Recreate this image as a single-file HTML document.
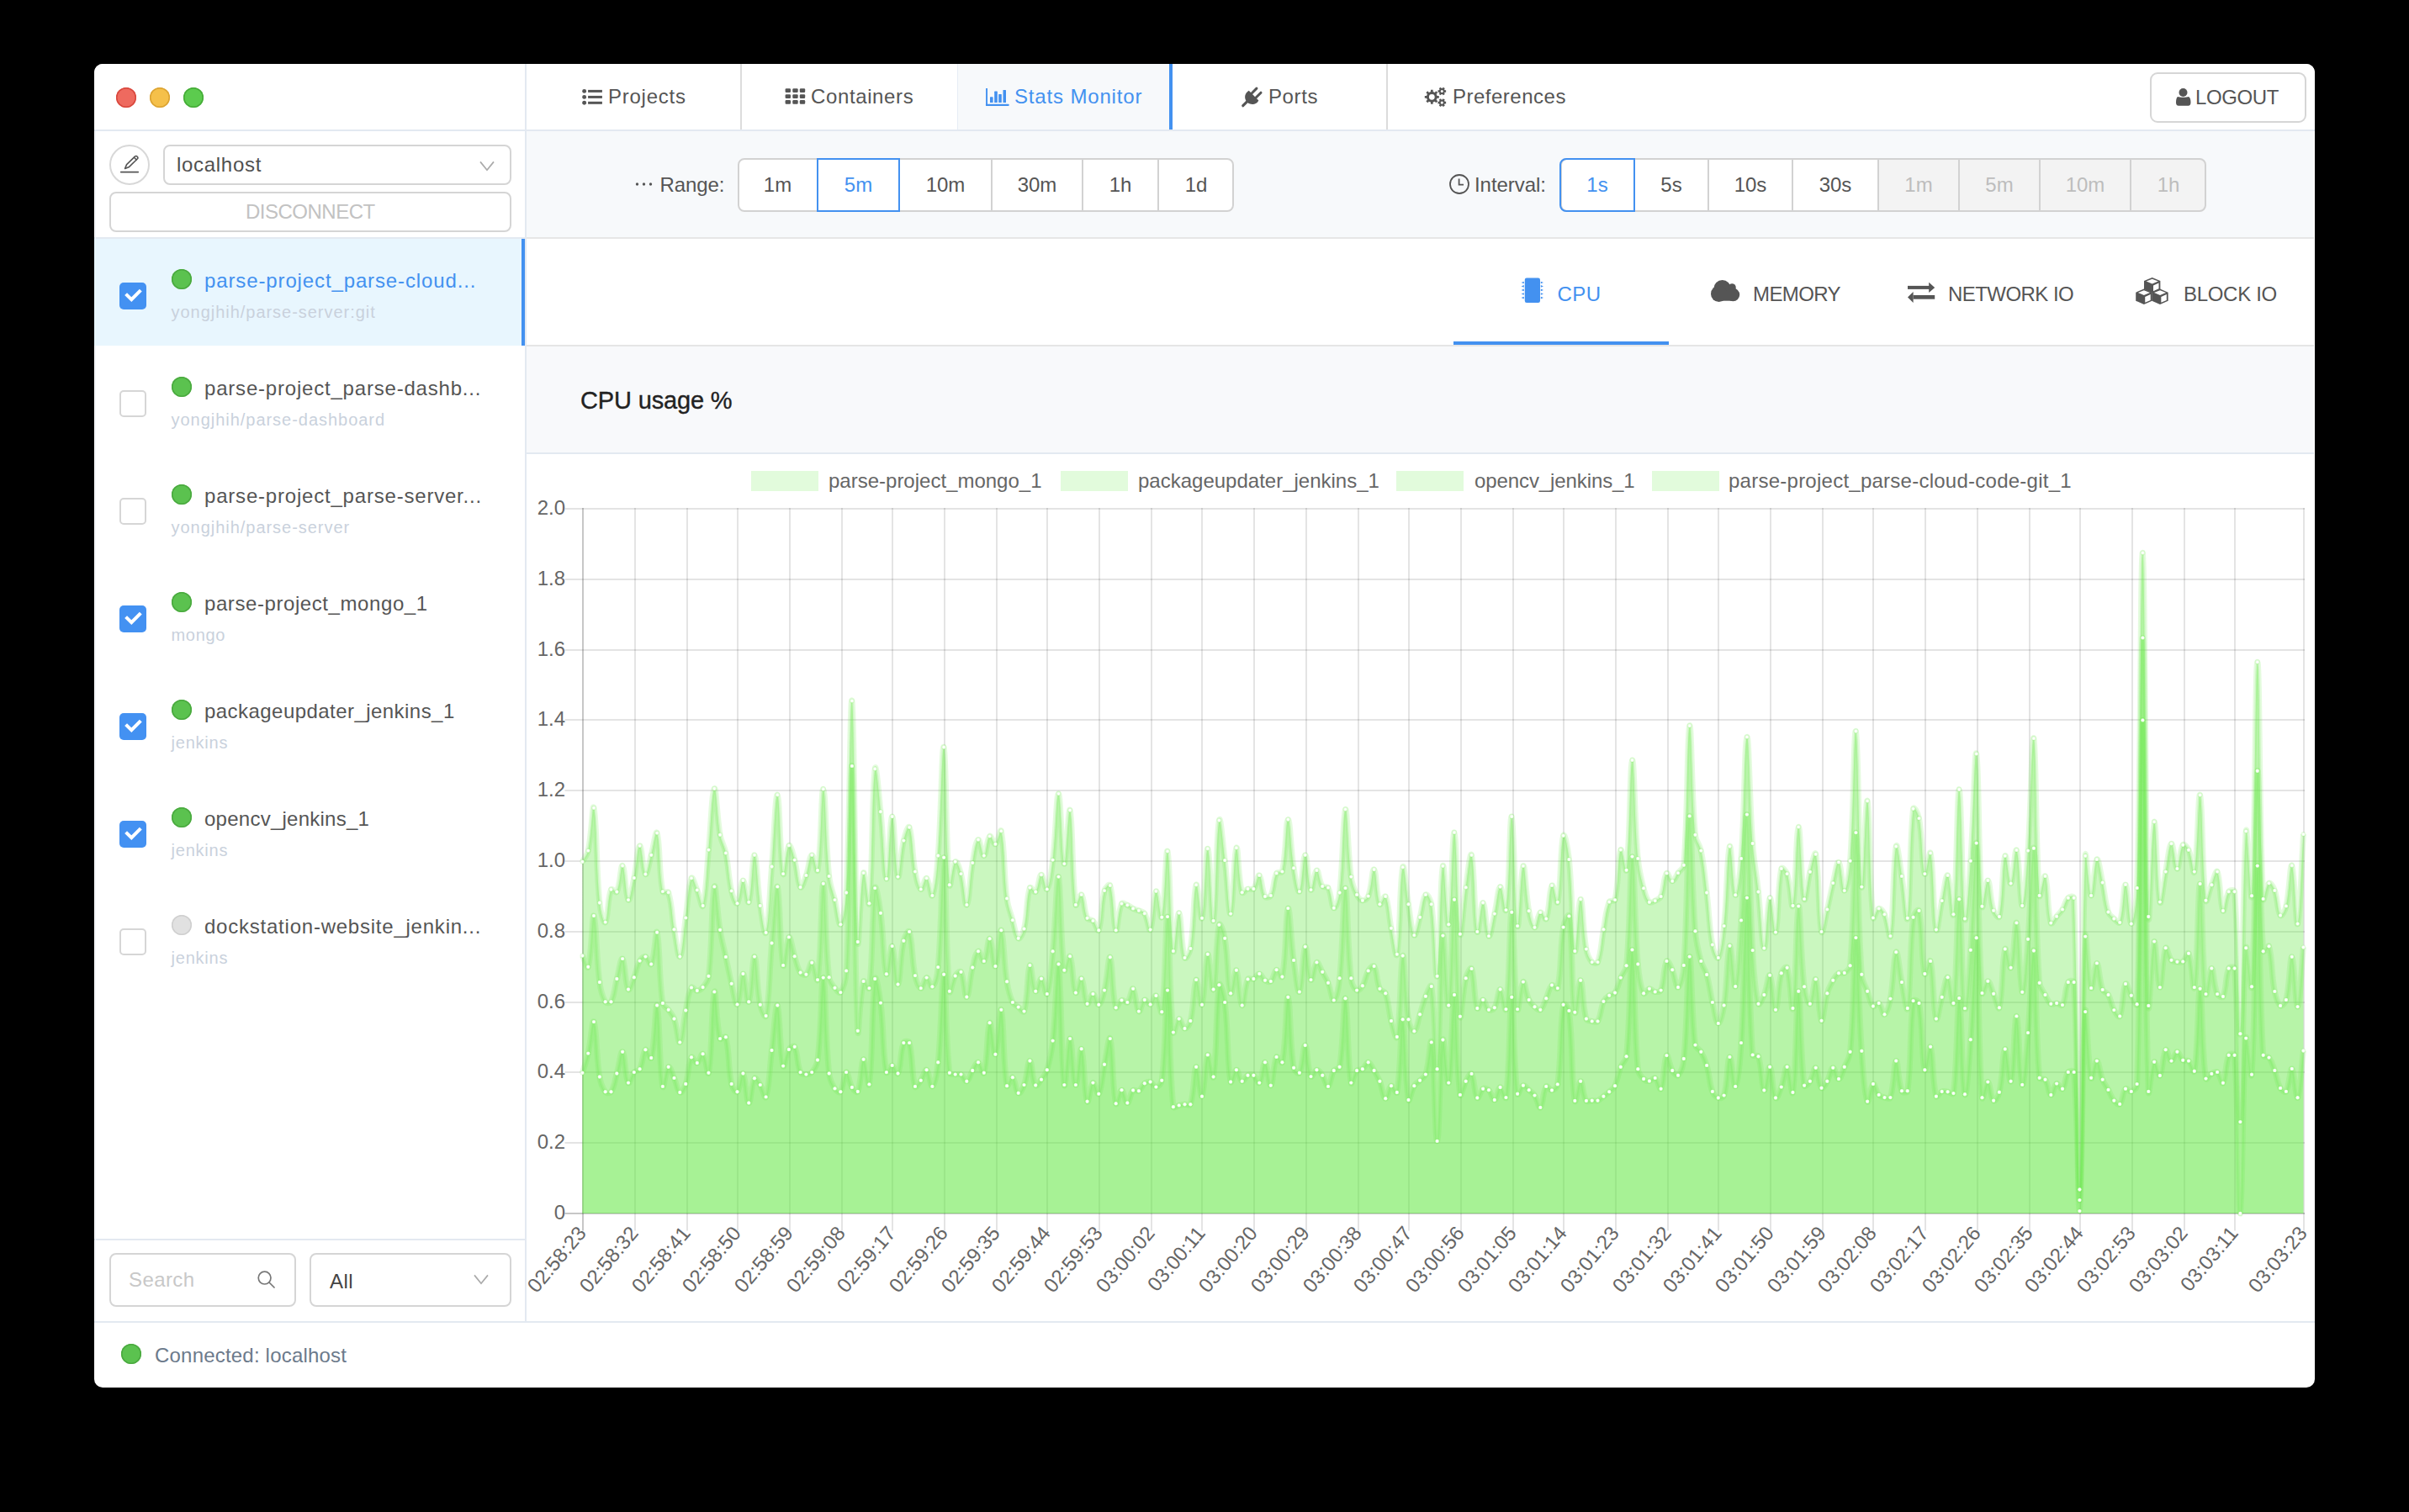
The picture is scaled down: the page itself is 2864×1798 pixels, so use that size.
<!DOCTYPE html><html><head><meta charset="utf-8"><style>
*{margin:0;padding:0;box-sizing:border-box}
html,body{width:2864px;height:1798px;overflow:hidden;background:#000}
body{position:relative;font-family:"Liberation Sans", sans-serif}
.win{position:absolute;left:112px;top:76px;width:2640px;height:1574px;background:#fff;border-radius:10px;overflow:hidden}
.abs{position:absolute;left:-112px;top:-76px;width:2864px;height:1798px}
.t{position:absolute;white-space:pre}
.b{position:absolute}
svg{position:absolute;overflow:visible}
</style></head><body><div class="win"><div class="abs"><div class="b" style="left:112px;top:76px;width:2640px;height:78px;background:#fff"></div><div class="b" style="left:112px;top:154px;width:2640px;height:2px;background:#e3e9f1"></div><div class="b" style="left:624px;top:76px;width:2px;height:1495px;background:#e3e9f1"></div><div class="b" style="left:626px;top:156px;width:2126px;height:126px;background:#f7f9fb"></div><div class="b" style="left:626px;top:282px;width:2126px;height:2px;background:#e6e6e6"></div><div class="b" style="left:112px;top:282px;width:512px;height:2px;background:#e3e9f1"></div><div class="b" style="left:626px;top:410px;width:2126px;height:2px;background:#e5e5e5"></div><div class="b" style="left:626px;top:412px;width:2126px;height:126px;background:#f8f9fb"></div><div class="b" style="left:626px;top:538px;width:2126px;height:2px;background:#e3e9f1"></div><div class="b" style="left:112px;top:1571px;width:2640px;height:2px;background:#e3e9f1"></div><div class="b" style="left:112px;top:1473px;width:512px;height:2px;background:#e3e9f1"></div><div class="b" style="left:113px;top:156px;width:1px;height:1415px;background:#eef2f7"></div><div class="b" style="left:2751px;top:156px;width:1px;height:1415px;background:#fff"></div><div class="b" style="left:138px;top:104px;width:24px;height:24px;border-radius:50%;background:#ee6a5f;box-shadow:inset 0 0 0 1.5px #d8473d"></div><div class="b" style="left:178px;top:104px;width:24px;height:24px;border-radius:50%;background:#f5c04a;box-shadow:inset 0 0 0 1.5px #dba333"></div><div class="b" style="left:218px;top:104px;width:24px;height:24px;border-radius:50%;background:#5ccb4e;box-shadow:inset 0 0 0 1.5px #45ab37"></div><div class="b" style="left:880px;top:76px;width:2px;height:78px;background:#dcdcdc"></div><div class="b" style="left:1138px;top:76px;width:1px;height:78px;background:#e6edf5"></div><div class="b" style="left:1139px;top:76px;width:251px;height:78px;background:#f7f9fb"></div><div class="b" style="left:1390px;top:76px;width:4px;height:78px;background:#4391f0"></div><div class="b" style="left:1648px;top:76px;width:2px;height:78px;background:#dcdcdc"></div><svg style="left:692px;top:105px" width="25" height="20" viewBox="0 0 25 20"><g fill="#555"><circle cx="2.65" cy="3.4" r="2.45"/><circle cx="2.65" cy="10.4" r="2.45"/><circle cx="2.65" cy="17.3" r="2.45"/><rect x="7.1" y="1.9" width="16.8" height="3"/><rect x="7.1" y="8.9" width="16.8" height="3"/><rect x="7.1" y="15.8" width="16.8" height="3"/></g></svg><div class="t" style="left:723.0px;top:103.2px;font-size:24px;line-height:24px;color:#555;letter-spacing:0.75px">Projects</div><svg style="left:933px;top:105px" width="25" height="20" viewBox="0 0 25 20"><g fill="#555"><rect x="0.6" y="0.2" width="6.4" height="4.7" rx="1.2"/><rect x="9.3" y="0.2" width="6.4" height="4.7" rx="1.2"/><rect x="17.8" y="0.2" width="6.4" height="4.7" rx="1.2"/><rect x="0.6" y="7.2" width="6.4" height="4.7" rx="1.2"/><rect x="9.3" y="7.2" width="6.4" height="4.7" rx="1.2"/><rect x="17.8" y="7.2" width="6.4" height="4.7" rx="1.2"/><rect x="0.6" y="14.1" width="6.4" height="4.7" rx="1.2"/><rect x="9.3" y="14.1" width="6.4" height="4.7" rx="1.2"/><rect x="17.8" y="14.1" width="6.4" height="4.7" rx="1.2"/></g></svg><div class="t" style="left:964.0px;top:103.2px;font-size:24px;line-height:24px;color:#555;letter-spacing:0.62px">Containers</div><svg style="left:1172px;top:105px" width="28" height="21" viewBox="0 0 28 21"><g fill="#4391f0"><rect x="0.1" y="0" width="1.9" height="20.9"/><rect x="0.1" y="18.8" width="27.4" height="2.1" rx="0.5"/><rect x="5" y="10.3" width="3.6" height="6.8" rx="0.6"/><rect x="10.2" y="3.6" width="3.6" height="13.5" rx="0.6"/><rect x="15.2" y="7" width="3.6" height="10.1" rx="0.6"/><rect x="20.5" y="1.9" width="3.5" height="15.2" rx="0.6"/></g></svg><div class="t" style="left:1206.0px;top:103.2px;font-size:24px;line-height:24px;color:#4391f0;letter-spacing:0.84px">Stats Monitor</div><svg style="left:1470px;top:98px" width="36" height="34" viewBox="0 0 36 34"><g transform="translate(20.55 15.6) rotate(45)" fill="#555" stroke="#555" stroke-linecap="round"><path d="M-8.2 0 L8.2 0 A8.6 8.6 0 1 1 -8.2 0 Z" stroke="none"/><path d="M-3.6 -0.5 L-3.6 -8.4 M3.6 -0.5 L3.6 -8.4" stroke-width="3" fill="none"/><path d="M-0.5 9 L-0.5 17.6" stroke-width="3.2" fill="none"/></g></svg><div class="t" style="left:1508.0px;top:103.2px;font-size:24px;line-height:24px;color:#555;letter-spacing:0.6px">Ports</div><svg style="left:1693px;top:103px" width="28" height="25" viewBox="0 0 28 25"><path fill="#555" fill-rule="evenodd" d="M10.67 18.55 L10.67 20.79 L7.93 20.79 L7.93 18.55 L5.85 17.69 L4.27 19.27 L2.33 17.33 L3.91 15.75 L3.05 13.67 L0.81 13.67 L0.81 10.93 L3.05 10.93 L3.91 8.85 L2.33 7.27 L4.27 5.33 L5.85 6.91 L7.93 6.05 L7.93 3.81 L10.67 3.81 L10.67 6.05 L12.75 6.91 L14.33 5.33 L16.27 7.27 L14.69 8.85 L15.55 10.93 L17.79 10.93 L17.79 13.67 L15.55 13.67 L14.69 15.75 L16.27 17.33 L14.33 19.27 L12.75 17.69 Z M12.70 12.30 A3.4 3.4 0 1 0 5.90 12.30 A3.4 3.4 0 1 0 12.70 12.30 Z M24.68 4.26 L26.13 4.21 L26.13 6.79 L24.68 6.74 L24.06 7.81 L24.83 9.04 L22.60 10.33 L21.92 9.05 L20.68 9.05 L20.00 10.33 L17.77 9.04 L18.54 7.81 L17.92 6.74 L16.47 6.79 L16.47 4.21 L17.92 4.26 L18.54 3.19 L17.77 1.96 L20.00 0.67 L20.68 1.95 L21.92 1.95 L22.60 0.67 L24.83 1.96 L24.06 3.19 Z M22.90 5.50 A1.6 1.6 0 1 0 19.70 5.50 A1.6 1.6 0 1 0 22.90 5.50 Z M24.68 17.86 L26.13 17.81 L26.13 20.39 L24.68 20.34 L24.06 21.41 L24.83 22.64 L22.60 23.93 L21.92 22.65 L20.68 22.65 L20.00 23.93 L17.77 22.64 L18.54 21.41 L17.92 20.34 L16.47 20.39 L16.47 17.81 L17.92 17.86 L18.54 16.79 L17.77 15.56 L20.00 14.27 L20.68 15.55 L21.92 15.55 L22.60 14.27 L24.83 15.56 L24.06 16.79 Z M22.90 19.10 A1.6 1.6 0 1 0 19.70 19.10 A1.6 1.6 0 1 0 22.90 19.10 Z"/></svg><div class="t" style="left:1727.0px;top:103.2px;font-size:24px;line-height:24px;color:#555;letter-spacing:0.5px">Preferences</div><div class="b" style="left:2556px;top:86px;width:186px;height:60px;border:2px solid #d6d6d6;border-radius:9px;background:#fff"></div><svg style="left:2587px;top:104px" width="18" height="22" viewBox="0 0 18 22"><g fill="#555"><circle cx="8.5" cy="6" r="5"/><path d="M2 11 C4 12 13 12 15 11 C17 12 17.5 15 17.5 18 C17.5 20 16.5 21.8 14.5 21.8 L3 21.8 C1 21.8 0 20 0 18 C0 15 0.5 12 2 11 Z"/></g></svg><div class="t" style="left:2610.0px;top:103.7px;font-size:24px;line-height:24px;color:#555;letter-spacing:-0.4px">LOGOUT</div><div class="b" style="left:130px;top:172px;width:48px;height:48px;border-radius:50%;border:2px solid #d8d8d8;background:#fff"></div><svg style="left:140px;top:182px" width="28" height="28" viewBox="0 0 28 28"><g fill="none" stroke="#555" stroke-width="1.6" stroke-linejoin="round" stroke-linecap="round"><path d="M8.6 18.4 L10.6 13.6 L20.4 4.2 C21.2 3.4 22.4 3.4 23.2 4.2 C24 5 24 6.2 23.2 7 L13.6 16.4 Z"/><path d="M19.4 5.2 L22.2 8"/><path d="M3.8 22.6 L24.2 22.6" stroke-width="1.8"/></g></svg><div class="b" style="left:194px;top:172px;width:414px;height:48px;border-radius:8px;border:2px solid #d5d5d5;background:#fff"></div><div class="t" style="left:210.0px;top:184.2px;font-size:24px;line-height:24px;color:#505050;letter-spacing:0.7px">localhost</div><svg style="left:570px;top:191px" width="18" height="13" viewBox="0 0 18 13"><path d="M1 1.4 L9 11.2 L17 1.4" fill="none" stroke="#aaa" stroke-width="1.7"/></svg><div class="b" style="left:130px;top:228px;width:478px;height:48px;border-radius:8px;border:2px solid #d5d5d5;background:#fff"></div><div class="t" style="left:292.0px;top:240.4px;font-size:24px;line-height:24px;color:#c2c2c2;letter-spacing:-0.5px">DISCONNECT</div><div class="b" style="left:112px;top:284px;width:508px;height:127px;background:#e8f6fe"></div><div class="b" style="left:620px;top:284px;width:4px;height:127px;background:#4391f0"></div><div class="b" style="left:142px;top:336px;width:32px;height:32px;border-radius:5px;background:#4391f2"></div><svg style="left:142px;top:336px" width="32" height="32" viewBox="0 0 32 32"><path d="M7.6 13.6 L14.3 20.2 L25.3 9.1" fill="none" stroke="#fff" stroke-width="4.1" stroke-linecap="butt"/></svg><div class="b" style="left:204px;top:320px;width:24px;height:24px;border-radius:50%;background:#5bc24f;box-shadow:inset 0 0 0 1.5px #4aa93f"></div><div class="t" style="left:243.0px;top:322.2px;font-size:24px;line-height:24px;color:#4391f0;letter-spacing:0.876px">parse-project_parse-cloud...</div><div class="t" style="left:203.5px;top:361.1px;font-size:20px;line-height:20px;color:#c9d1dc;letter-spacing:0.97px">yongjhih/parse-server:git</div><div class="b" style="left:142px;top:464px;width:32px;height:32px;border-radius:5px;border:2px solid #d6d6d6;background:#fff"></div><div class="b" style="left:204px;top:448px;width:24px;height:24px;border-radius:50%;background:#5bc24f;box-shadow:inset 0 0 0 1.5px #4aa93f"></div><div class="t" style="left:243.0px;top:450.2px;font-size:24px;line-height:24px;color:#555;letter-spacing:0.8px">parse-project_parse-dashb...</div><div class="t" style="left:203.5px;top:489.1px;font-size:20px;line-height:20px;color:#c9d1dc;letter-spacing:0.97px">yongjhih/parse-dashboard</div><div class="b" style="left:142px;top:592px;width:32px;height:32px;border-radius:5px;border:2px solid #d6d6d6;background:#fff"></div><div class="b" style="left:204px;top:576px;width:24px;height:24px;border-radius:50%;background:#5bc24f;box-shadow:inset 0 0 0 1.5px #4aa93f"></div><div class="t" style="left:243.0px;top:578.2px;font-size:24px;line-height:24px;color:#555;letter-spacing:0.8px">parse-project_parse-server...</div><div class="t" style="left:203.5px;top:617.1px;font-size:20px;line-height:20px;color:#c9d1dc;letter-spacing:0.97px">yongjhih/parse-server</div><div class="b" style="left:142px;top:720px;width:32px;height:32px;border-radius:5px;background:#4391f2"></div><svg style="left:142px;top:720px" width="32" height="32" viewBox="0 0 32 32"><path d="M7.6 13.6 L14.3 20.2 L25.3 9.1" fill="none" stroke="#fff" stroke-width="4.1" stroke-linecap="butt"/></svg><div class="b" style="left:204px;top:704px;width:24px;height:24px;border-radius:50%;background:#5bc24f;box-shadow:inset 0 0 0 1.5px #4aa93f"></div><div class="t" style="left:243.0px;top:706.2px;font-size:24px;line-height:24px;color:#555;letter-spacing:0.58px">parse-project_mongo_1</div><div class="t" style="left:203.5px;top:745.1px;font-size:20px;line-height:20px;color:#c9d1dc;letter-spacing:0.7px">mongo</div><div class="b" style="left:142px;top:848px;width:32px;height:32px;border-radius:5px;background:#4391f2"></div><svg style="left:142px;top:848px" width="32" height="32" viewBox="0 0 32 32"><path d="M7.6 13.6 L14.3 20.2 L25.3 9.1" fill="none" stroke="#fff" stroke-width="4.1" stroke-linecap="butt"/></svg><div class="b" style="left:204px;top:832px;width:24px;height:24px;border-radius:50%;background:#5bc24f;box-shadow:inset 0 0 0 1.5px #4aa93f"></div><div class="t" style="left:243.0px;top:834.2px;font-size:24px;line-height:24px;color:#555;letter-spacing:0.45px">packageupdater_jenkins_1</div><div class="t" style="left:203.5px;top:873.1px;font-size:20px;line-height:20px;color:#c9d1dc;letter-spacing:0.78px">jenkins</div><div class="b" style="left:142px;top:976px;width:32px;height:32px;border-radius:5px;background:#4391f2"></div><svg style="left:142px;top:976px" width="32" height="32" viewBox="0 0 32 32"><path d="M7.6 13.6 L14.3 20.2 L25.3 9.1" fill="none" stroke="#fff" stroke-width="4.1" stroke-linecap="butt"/></svg><div class="b" style="left:204px;top:960px;width:24px;height:24px;border-radius:50%;background:#5bc24f;box-shadow:inset 0 0 0 1.5px #4aa93f"></div><div class="t" style="left:243.0px;top:962.2px;font-size:24px;line-height:24px;color:#555;letter-spacing:0.25px">opencv_jenkins_1</div><div class="t" style="left:203.5px;top:1001.1px;font-size:20px;line-height:20px;color:#c9d1dc;letter-spacing:0.78px">jenkins</div><div class="b" style="left:142px;top:1104px;width:32px;height:32px;border-radius:5px;border:2px solid #d6d6d6;background:#fff"></div><div class="b" style="left:204px;top:1088px;width:24px;height:24px;border-radius:50%;background:#e1e1e1;box-shadow:inset 0 0 0 1.5px #cfcfcf"></div><div class="t" style="left:243.0px;top:1090.2px;font-size:24px;line-height:24px;color:#555;letter-spacing:0.77px">dockstation-website_jenkin...</div><div class="t" style="left:203.5px;top:1129.1px;font-size:20px;line-height:20px;color:#c9d1dc;letter-spacing:0.78px">jenkins</div><div class="b" style="left:130px;top:1490px;width:222px;height:64px;border-radius:8px;border:2px solid #d5d5d5;background:#fff"></div><div class="t" style="left:153.0px;top:1510.4px;font-size:24px;line-height:24px;color:#c8c8c8;letter-spacing:0.4px">Search</div><svg style="left:305px;top:1510px" width="24" height="24" viewBox="0 0 24 24"><g fill="none" stroke="#777" stroke-width="1.7"><circle cx="9.6" cy="9.6" r="7.4"/><path d="M15 15 L21 21" stroke-linecap="round"/></g></svg><div class="b" style="left:368px;top:1490px;width:240px;height:64px;border-radius:8px;border:2px solid #d5d5d5;background:#fff"></div><div class="t" style="left:392.0px;top:1511.7px;font-size:24px;line-height:24px;color:#444;letter-spacing:0.4px">All</div><svg style="left:563px;top:1515px" width="18" height="13" viewBox="0 0 18 13"><path d="M1 1.4 L9 11.2 L17 1.4" fill="none" stroke="#aaa" stroke-width="1.7"/></svg><div class="b" style="left:144px;top:1598px;width:24px;height:24px;border-radius:50%;background:#5bc24f;box-shadow:inset 0 0 0 1.5px #4aa93f"></div><div class="t" style="left:184.0px;top:1599.7px;font-size:24px;line-height:24px;color:#6c7a8b;letter-spacing:0.2px">Connected: localhost</div><svg style="left:755px;top:216px" width="22" height="6" viewBox="0 0 22 6"><g fill="#555"><circle cx="2.5" cy="3" r="1.7"/><circle cx="10.5" cy="3" r="1.7"/><circle cx="18.5" cy="3" r="1.7"/></g></svg><div class="t" style="left:784.5px;top:207.7px;font-size:24px;line-height:24px;color:#555;letter-spacing:-0.1px">Range:</div><div class="b" style="left:877px;top:188px;width:590px;height:64px;border-radius:8px;background:#fff;overflow:hidden"></div><div class="b" style="left:877px;top:188px;width:590px;height:64px;border-radius:8px;border:2px solid #d2d2d2"></div><div class="b" style="left:971px;top:188px;width:2px;height:64px;background:#d2d2d2"></div><div class="b" style="left:1068px;top:188px;width:2px;height:64px;background:#d2d2d2"></div><div class="b" style="left:1178px;top:188px;width:2px;height:64px;background:#d2d2d2"></div><div class="b" style="left:1286px;top:188px;width:2px;height:64px;background:#d2d2d2"></div><div class="b" style="left:1376px;top:188px;width:2px;height:64px;background:#d2d2d2"></div><div class="t" style="left:924.5px;top:207.7px;font-size:24px;line-height:24px;color:#555;transform:translateX(-50%);">1m</div><div class="t" style="left:1020.5px;top:207.7px;font-size:24px;line-height:24px;color:#4391f0;transform:translateX(-50%);">5m</div><div class="t" style="left:1124.0px;top:207.7px;font-size:24px;line-height:24px;color:#555;transform:translateX(-50%);">10m</div><div class="t" style="left:1233.0px;top:207.7px;font-size:24px;line-height:24px;color:#555;transform:translateX(-50%);">30m</div><div class="t" style="left:1332.0px;top:207.7px;font-size:24px;line-height:24px;color:#555;transform:translateX(-50%);">1h</div><div class="t" style="left:1422.0px;top:207.7px;font-size:24px;line-height:24px;color:#555;transform:translateX(-50%);">1d</div><div class="b" style="left:971px;top:188px;width:99px;height:64px;border:2px solid #4391f0;border-radius:0"></div><svg style="left:1722px;top:206px" width="26" height="26" viewBox="0 0 26 26"><g fill="none" stroke="#555" stroke-width="1.8"><circle cx="13" cy="13" r="11"/><path d="M12.6 6.5 L12.6 13.6 L18 13.6"/></g></svg><div class="t" style="left:1753.0px;top:207.7px;font-size:24px;line-height:24px;color:#555;letter-spacing:-0.05px">Interval:</div><div class="b" style="left:1855px;top:188px;width:768px;height:64px;border-radius:8px;background:#fff;overflow:hidden"><div class="b" style="left:378px;top:0;width:96px;height:64px;background:#f3f3f3"></div><div class="b" style="left:474px;top:0;width:96px;height:64px;background:#f3f3f3"></div><div class="b" style="left:570px;top:0;width:108px;height:64px;background:#f3f3f3"></div><div class="b" style="left:678px;top:0;width:90px;height:64px;background:#f3f3f3"></div></div><div class="b" style="left:1855px;top:188px;width:768px;height:64px;border-radius:8px;border:2px solid #d2d2d2"></div><div class="b" style="left:1942px;top:188px;width:2px;height:64px;background:#d2d2d2"></div><div class="b" style="left:2030px;top:188px;width:2px;height:64px;background:#d2d2d2"></div><div class="b" style="left:2130px;top:188px;width:2px;height:64px;background:#d2d2d2"></div><div class="b" style="left:2232px;top:188px;width:2px;height:64px;background:#d2d2d2"></div><div class="b" style="left:2328px;top:188px;width:2px;height:64px;background:#d2d2d2"></div><div class="b" style="left:2424px;top:188px;width:2px;height:64px;background:#d2d2d2"></div><div class="b" style="left:2532px;top:188px;width:2px;height:64px;background:#d2d2d2"></div><div class="t" style="left:1899.0px;top:207.7px;font-size:24px;line-height:24px;color:#4391f0;transform:translateX(-50%);">1s</div><div class="t" style="left:1987.0px;top:207.7px;font-size:24px;line-height:24px;color:#555;transform:translateX(-50%);">5s</div><div class="t" style="left:2081.0px;top:207.7px;font-size:24px;line-height:24px;color:#555;transform:translateX(-50%);">10s</div><div class="t" style="left:2182.0px;top:207.7px;font-size:24px;line-height:24px;color:#555;transform:translateX(-50%);">30s</div><div class="t" style="left:2281.0px;top:207.7px;font-size:24px;line-height:24px;color:#bdbdbd;transform:translateX(-50%);">1m</div><div class="t" style="left:2377.0px;top:207.7px;font-size:24px;line-height:24px;color:#bdbdbd;transform:translateX(-50%);">5m</div><div class="t" style="left:2479.0px;top:207.7px;font-size:24px;line-height:24px;color:#bdbdbd;transform:translateX(-50%);">10m</div><div class="t" style="left:2578.0px;top:207.7px;font-size:24px;line-height:24px;color:#bdbdbd;transform:translateX(-50%);">1h</div><div class="b" style="left:1854px;top:188px;width:90px;height:64px;border:2px solid #4391f0;border-radius:8px 0 0 8px"></div><div class="b" style="left:1728px;top:406px;width:256px;height:4px;background:#4391f0"></div><svg style="left:1808px;top:330px" width="28" height="31" viewBox="0 0 28 31"><g fill="#4391f0"><rect x="4.8" y="0.5" width="18.2" height="29.5" rx="2.2"/><path d="M0.6 6 L3.8 4.7 L3.8 7.3 Z"/><path d="M27 6 L23.8 4.7 L23.8 7.3 Z"/><path d="M0.6 10.4 L3.8 9.1 L3.8 11.700000000000001 Z"/><path d="M27 10.4 L23.8 9.1 L23.8 11.700000000000001 Z"/><path d="M0.6 14.9 L3.8 13.6 L3.8 16.2 Z"/><path d="M27 14.9 L23.8 13.6 L23.8 16.2 Z"/><path d="M0.6 19.5 L3.8 18.2 L3.8 20.8 Z"/><path d="M27 19.5 L23.8 18.2 L23.8 20.8 Z"/><path d="M0.6 24.1 L3.8 22.8 L3.8 25.400000000000002 Z"/><path d="M27 24.1 L23.8 22.8 L23.8 25.400000000000002 Z"/></g></svg><div class="t" style="left:1851.5px;top:337.9px;font-size:24px;line-height:24px;color:#4391f0;letter-spacing:0.5px">CPU</div><svg style="left:2033px;top:332px" width="36" height="27" viewBox="0 0 36 27"><g fill="#555"><circle cx="14.6" cy="11.2" r="10.2"/><circle cx="26.2" cy="9.8" r="4.6"/><circle cx="10.6" cy="17.4" r="9.6"/><circle cx="27.4" cy="18.4" r="7.8"/><rect x="10.6" y="14" width="16.8" height="11.7"/></g></svg><div class="t" style="left:2084.0px;top:337.9px;font-size:24px;line-height:24px;color:#555;letter-spacing:-0.6px">MEMORY</div><svg style="left:2267px;top:334px" width="35" height="27" viewBox="0 0 35 27"><g fill="#555"><rect x="1" y="5.9" width="26" height="4"/><path d="M26.2 1.8 L33.2 7.9 L26.2 13.9 Z"/><rect x="7.6" y="17" width="25.6" height="4.7"/><path d="M7.6 13 L1 19.4 L7.6 25.9 Z"/></g></svg><div class="t" style="left:2316.0px;top:337.9px;font-size:24px;line-height:24px;color:#555;letter-spacing:-0.55px">NETWORK IO</div><svg style="left:2539px;top:330px" width="40" height="34" viewBox="0 0 40 34"><g transform="translate(10,0) scale(1.03,1.12)"><path d="M0 3.6 L9.4 0 L18.8 3.6 L18.8 12.6 L9.4 16.4 L0 12.6 Z" fill="#555"/><path d="M2.6 4.0 L9.4 1.5 L16.3 4.0 L9.4 6.7 Z" fill="#fff"/><path d="M10.7 8.4 L17.0 5.8 L17.0 11.9 L10.7 14.5 Z" fill="#fff"/></g><g transform="translate(0.2,13.6) scale(1.03,1.12)"><path d="M0 3.6 L9.4 0 L18.8 3.6 L18.8 12.6 L9.4 16.4 L0 12.6 Z" fill="#555"/><path d="M2.6 4.0 L9.4 1.5 L16.3 4.0 L9.4 6.7 Z" fill="#fff"/><path d="M10.7 8.4 L17.0 5.8 L17.0 11.9 L10.7 14.5 Z" fill="#fff"/></g><g transform="translate(19.3,13.6) scale(1.03,1.12)"><path d="M0 3.6 L9.4 0 L18.8 3.6 L18.8 12.6 L9.4 16.4 L0 12.6 Z" fill="#555"/><path d="M2.6 4.0 L9.4 1.5 L16.3 4.0 L9.4 6.7 Z" fill="#fff"/><path d="M10.7 8.4 L17.0 5.8 L17.0 11.9 L10.7 14.5 Z" fill="#fff"/></g></svg><div class="t" style="left:2596.0px;top:337.9px;font-size:24px;line-height:24px;color:#555;letter-spacing:-0.3px">BLOCK IO</div><div class="t" style="left:690.0px;top:461.8px;font-size:29px;line-height:29px;color:#222;letter-spacing:-0.15px;-webkit-text-stroke:0.35px #222">CPU usage %</div><div class="b" style="left:893px;top:560px;width:80px;height:24px;background:#e2fbdc"></div><div class="t" style="left:985.0px;top:560.4px;font-size:24px;line-height:24px;color:#666;letter-spacing:0.0px">parse-project_mongo_1</div><div class="b" style="left:1261px;top:560px;width:80px;height:24px;background:#e2fbdc"></div><div class="t" style="left:1353.0px;top:560.4px;font-size:24px;line-height:24px;color:#666;letter-spacing:0.0px">packageupdater_jenkins_1</div><div class="b" style="left:1660px;top:560px;width:80px;height:24px;background:#e2fbdc"></div><div class="t" style="left:1753.0px;top:560.4px;font-size:24px;line-height:24px;color:#666;letter-spacing:-0.1px">opencv_jenkins_1</div><div class="b" style="left:1964px;top:560px;width:80px;height:24px;background:#e2fbdc"></div><div class="t" style="left:2055.0px;top:560.4px;font-size:24px;line-height:24px;color:#666;letter-spacing:0.25px">parse-project_parse-cloud-code-git_1</div><svg style="left:0;top:0" width="2864" height="1798" viewBox="0 0 2864 1798"><rect x="671.5" y="1442" width="2068.5" height="2" fill="rgba(0,0,0,0.22)"/><rect x="671.5" y="1358" width="2068.5" height="2" fill="rgba(0,0,0,0.105)"/><rect x="671.5" y="1274" width="2068.5" height="2" fill="rgba(0,0,0,0.105)"/><rect x="671.5" y="1191" width="2068.5" height="2" fill="rgba(0,0,0,0.105)"/><rect x="671.5" y="1107" width="2068.5" height="2" fill="rgba(0,0,0,0.105)"/><rect x="671.5" y="1023" width="2068.5" height="2" fill="rgba(0,0,0,0.105)"/><rect x="671.5" y="939" width="2068.5" height="2" fill="rgba(0,0,0,0.105)"/><rect x="671.5" y="855" width="2068.5" height="2" fill="rgba(0,0,0,0.105)"/><rect x="671.5" y="772" width="2068.5" height="2" fill="rgba(0,0,0,0.105)"/><rect x="671.5" y="688" width="2068.5" height="2" fill="rgba(0,0,0,0.105)"/><rect x="671.5" y="604" width="2068.5" height="2" fill="rgba(0,0,0,0.105)"/><rect x="692" y="604" width="2" height="859.5" fill="rgba(0,0,0,0.22)"/><rect x="754" y="604" width="2" height="859.5" fill="rgba(0,0,0,0.105)"/><rect x="816" y="604" width="2" height="859.5" fill="rgba(0,0,0,0.105)"/><rect x="876" y="604" width="2" height="859.5" fill="rgba(0,0,0,0.105)"/><rect x="938" y="604" width="2" height="859.5" fill="rgba(0,0,0,0.105)"/><rect x="1000" y="604" width="2" height="859.5" fill="rgba(0,0,0,0.105)"/><rect x="1060" y="604" width="2" height="859.5" fill="rgba(0,0,0,0.105)"/><rect x="1122" y="604" width="2" height="859.5" fill="rgba(0,0,0,0.105)"/><rect x="1184" y="604" width="2" height="859.5" fill="rgba(0,0,0,0.105)"/><rect x="1244" y="604" width="2" height="859.5" fill="rgba(0,0,0,0.105)"/><rect x="1306" y="604" width="2" height="859.5" fill="rgba(0,0,0,0.105)"/><rect x="1368" y="604" width="2" height="859.5" fill="rgba(0,0,0,0.105)"/><rect x="1428" y="604" width="2" height="859.5" fill="rgba(0,0,0,0.105)"/><rect x="1490" y="604" width="2" height="859.5" fill="rgba(0,0,0,0.105)"/><rect x="1552" y="604" width="2" height="859.5" fill="rgba(0,0,0,0.105)"/><rect x="1614" y="604" width="2" height="859.5" fill="rgba(0,0,0,0.105)"/><rect x="1674" y="604" width="2" height="859.5" fill="rgba(0,0,0,0.105)"/><rect x="1736" y="604" width="2" height="859.5" fill="rgba(0,0,0,0.105)"/><rect x="1798" y="604" width="2" height="859.5" fill="rgba(0,0,0,0.105)"/><rect x="1858" y="604" width="2" height="859.5" fill="rgba(0,0,0,0.105)"/><rect x="1920" y="604" width="2" height="859.5" fill="rgba(0,0,0,0.105)"/><rect x="1982" y="604" width="2" height="859.5" fill="rgba(0,0,0,0.105)"/><rect x="2042" y="604" width="2" height="859.5" fill="rgba(0,0,0,0.105)"/><rect x="2104" y="604" width="2" height="859.5" fill="rgba(0,0,0,0.105)"/><rect x="2166" y="604" width="2" height="859.5" fill="rgba(0,0,0,0.105)"/><rect x="2226" y="604" width="2" height="859.5" fill="rgba(0,0,0,0.105)"/><rect x="2288" y="604" width="2" height="859.5" fill="rgba(0,0,0,0.105)"/><rect x="2350" y="604" width="2" height="859.5" fill="rgba(0,0,0,0.105)"/><rect x="2412" y="604" width="2" height="859.5" fill="rgba(0,0,0,0.105)"/><rect x="2472" y="604" width="2" height="859.5" fill="rgba(0,0,0,0.105)"/><rect x="2534" y="604" width="2" height="859.5" fill="rgba(0,0,0,0.105)"/><rect x="2596" y="604" width="2" height="859.5" fill="rgba(0,0,0,0.105)"/><rect x="2656" y="604" width="2" height="859.5" fill="rgba(0,0,0,0.105)"/><rect x="2738" y="604" width="2" height="859.5" fill="rgba(0,0,0,0.105)"/></svg><svg style="left:0;top:0" width="2864" height="1798" viewBox="0 0 2864 1798"><path d="M692.4 1275.8C695.1 1266.5 697.1 1262.0 699.2 1252.6C702.6 1237.8 704.0 1211.0 706.0 1215.1C709.5 1222.2 708.6 1254.7 712.9 1280.5C714.1 1288.0 715.7 1293.1 719.7 1298.3C721.1 1300.2 725.2 1300.3 726.5 1298.3C730.7 1291.6 730.8 1285.3 733.3 1276.5C736.3 1266.3 737.9 1249.0 740.1 1250.8C743.3 1253.4 743.0 1280.6 747.0 1287.6C748.5 1290.3 750.3 1279.3 753.8 1275.1C755.7 1272.8 759.2 1273.8 760.6 1271.2C764.7 1263.1 763.8 1251.9 767.4 1248.3C769.2 1246.6 773.4 1261.3 774.2 1258.0C778.8 1240.2 778.9 1190.1 781.1 1195.5C784.4 1203.7 783.5 1268.5 787.9 1291.9C789.0 1297.8 791.3 1271.2 794.7 1268.7C796.8 1267.2 799.1 1276.5 801.5 1281.9C804.5 1288.6 805.0 1297.3 808.3 1299.0C810.5 1300.2 813.7 1293.6 815.2 1289.0C819.1 1276.9 817.8 1265.0 822.0 1257.3C823.2 1255.0 826.4 1264.7 828.8 1264.0C831.9 1263.1 833.7 1251.7 835.6 1253.3C839.2 1256.4 841.4 1281.6 842.4 1275.8C846.8 1252.0 845.8 1189.7 849.3 1179.4C851.3 1173.4 851.2 1215.9 856.1 1235.1C856.7 1237.5 862.3 1230.9 862.9 1233.3C867.7 1252.5 865.2 1267.5 869.7 1289.0C870.6 1293.5 874.7 1300.0 876.5 1298.3C880.2 1295.0 881.2 1274.5 883.4 1276.5C886.7 1279.8 887.2 1310.3 890.2 1311.5C892.7 1312.6 892.9 1288.6 897.0 1282.3C898.4 1280.1 901.7 1286.6 903.8 1290.1C907.1 1295.5 909.4 1308.0 910.6 1304.4C914.9 1291.6 914.7 1271.2 917.5 1249.0C920.1 1227.6 922.0 1192.3 924.3 1195.5C927.4 1199.7 926.9 1251.3 931.1 1267.6C932.3 1272.3 933.9 1254.7 937.9 1248.0C939.4 1245.5 943.7 1242.6 944.7 1244.8C949.1 1253.5 947.1 1264.5 951.6 1275.1C952.6 1277.6 955.7 1277.6 958.4 1277.6C961.1 1277.6 963.5 1277.2 965.2 1275.1C969.0 1270.4 971.2 1266.8 972.0 1260.5C976.7 1221.8 976.3 1159.6 978.8 1162.6C981.8 1166.1 981.0 1231.4 985.7 1276.5C986.4 1284.1 988.6 1288.2 992.5 1294.4C994.1 1296.9 998.0 1300.2 999.3 1298.3C1003.4 1292.5 1003.1 1276.3 1006.1 1275.1C1008.5 1274.2 1009.2 1286.7 1012.9 1293.0C1014.6 1295.8 1018.8 1300.4 1019.8 1298.0C1024.2 1287.1 1023.5 1261.7 1026.6 1259.8C1029.0 1258.2 1032.3 1296.9 1033.4 1289.4C1037.8 1258.6 1035.8 1195.4 1040.2 1164.0C1041.3 1156.7 1045.6 1181.0 1047.0 1192.6C1051.1 1225.4 1049.0 1248.8 1053.9 1275.1C1054.5 1278.5 1058.1 1266.6 1060.7 1266.9C1063.5 1267.2 1066.2 1279.1 1067.5 1276.5C1071.6 1268.4 1069.7 1252.4 1074.3 1240.1C1075.2 1237.8 1080.5 1237.7 1081.1 1240.1C1086.0 1258.4 1083.4 1276.9 1088.0 1291.9C1088.8 1294.7 1092.5 1288.0 1094.8 1284.8C1098.0 1280.1 1099.4 1271.1 1101.6 1272.3C1104.8 1274.0 1106.2 1293.4 1108.4 1291.9C1111.6 1289.8 1114.0 1275.0 1115.2 1263.3C1119.5 1221.7 1119.5 1156.3 1122.1 1158.7C1124.9 1161.3 1123.7 1230.9 1128.9 1275.8C1129.2 1278.5 1132.9 1277.3 1135.7 1277.6C1138.4 1278.0 1140.4 1276.3 1142.5 1277.6C1145.8 1279.6 1147.0 1286.6 1149.3 1285.8C1152.5 1284.8 1153.1 1277.9 1156.2 1273.0C1158.6 1268.9 1160.5 1262.8 1163.0 1263.3C1166.0 1264.0 1168.8 1279.4 1169.8 1275.8C1174.2 1260.6 1173.3 1221.6 1176.6 1216.2C1178.7 1212.7 1181.2 1256.2 1183.4 1253.7C1186.6 1250.1 1188.2 1195.3 1190.3 1200.8C1193.7 1210.3 1192.3 1262.8 1197.1 1291.2C1197.7 1295.0 1201.8 1279.9 1203.9 1281.2C1207.3 1283.3 1207.3 1297.5 1210.7 1299.8C1212.8 1301.1 1216.0 1294.5 1217.5 1290.1C1221.4 1279.2 1221.6 1261.5 1224.4 1261.5C1227.1 1261.6 1227.1 1283.8 1231.2 1290.5C1232.5 1292.6 1235.7 1286.7 1238.0 1283.7C1241.2 1279.5 1243.3 1277.3 1244.8 1272.3C1248.8 1258.9 1250.1 1251.6 1251.6 1237.6C1255.6 1201.3 1256.3 1138.4 1258.5 1146.5C1261.8 1159.4 1261.3 1264.5 1265.3 1290.1C1266.8 1300.0 1269.4 1235.1 1272.1 1235.1C1274.8 1235.1 1275.9 1287.4 1278.9 1290.1C1281.3 1292.3 1283.5 1244.0 1285.7 1247.3C1289.0 1251.9 1288.6 1298.0 1292.6 1309.8C1294.0 1314.1 1296.1 1289.8 1299.4 1287.6C1301.5 1286.2 1304.6 1303.4 1306.2 1300.8C1310.1 1294.7 1310.1 1279.8 1313.0 1265.8C1315.6 1253.5 1318.3 1229.7 1319.8 1235.1C1323.7 1248.3 1322.2 1292.3 1326.7 1312.3C1327.7 1316.8 1330.7 1296.3 1333.5 1296.2C1336.2 1296.0 1337.5 1311.5 1340.3 1311.5C1343.0 1311.6 1343.3 1300.6 1347.1 1296.5C1348.7 1294.9 1351.9 1298.5 1353.9 1297.3C1357.3 1295.2 1357.4 1291.0 1360.8 1288.3C1362.9 1286.7 1365.2 1285.8 1367.6 1286.5C1370.7 1287.5 1371.8 1293.0 1374.4 1292.6C1377.3 1292.2 1380.7 1288.8 1381.2 1284.8C1386.2 1242.8 1385.7 1172.1 1388.0 1177.6C1391.1 1184.7 1389.7 1264.1 1394.9 1316.2C1395.1 1318.8 1398.9 1315.0 1401.7 1314.4C1404.4 1313.8 1405.8 1313.6 1408.5 1313.3C1411.2 1313.1 1414.6 1315.7 1415.3 1313.3C1420.1 1297.8 1419.1 1270.8 1422.1 1268.7C1424.5 1267.0 1426.7 1306.1 1429.0 1303.7C1432.1 1300.4 1432.2 1260.4 1435.8 1254.4C1437.7 1251.1 1441.5 1287.0 1442.6 1280.5C1447.0 1253.8 1444.9 1200.7 1449.4 1171.2C1450.3 1165.3 1455.2 1183.3 1456.2 1191.9C1460.7 1229.4 1458.4 1259.0 1463.1 1286.5C1463.8 1291.1 1467.1 1272.4 1469.9 1272.3C1472.6 1272.1 1473.4 1284.3 1476.7 1285.8C1478.8 1286.8 1480.3 1280.4 1483.5 1278.7C1485.7 1277.5 1488.3 1277.3 1490.3 1278.7C1493.7 1280.9 1495.5 1289.5 1497.2 1287.6C1500.9 1283.4 1501.4 1262.7 1504.0 1263.3C1506.9 1264.0 1508.3 1292.0 1510.8 1290.8C1513.8 1289.4 1513.3 1265.6 1517.6 1256.9C1518.8 1254.6 1523.9 1266.4 1524.4 1263.3C1529.3 1237.9 1528.6 1184.6 1531.3 1185.8C1534.1 1187.2 1533.2 1237.3 1538.1 1269.8C1538.6 1273.3 1543.7 1278.1 1544.9 1275.8C1549.2 1267.4 1549.2 1242.2 1551.7 1243.0C1554.6 1243.9 1554.3 1270.9 1558.5 1280.1C1559.7 1282.6 1562.5 1272.6 1565.4 1272.3C1567.9 1272.0 1570.1 1275.6 1572.2 1278.7C1575.5 1283.5 1576.7 1292.9 1579.0 1291.9C1582.1 1290.6 1581.9 1279.6 1585.8 1273.0C1587.4 1270.3 1592.2 1271.8 1592.6 1268.7C1597.6 1237.5 1597.0 1183.8 1599.5 1187.2C1602.5 1191.4 1601.6 1258.1 1606.3 1287.6C1607.0 1292.4 1609.3 1277.5 1613.1 1273.0C1614.8 1271.0 1617.7 1272.7 1619.9 1271.2C1623.2 1268.9 1624.2 1263.0 1626.7 1263.3C1629.6 1263.7 1631.1 1268.9 1633.6 1273.0C1636.6 1277.9 1638.2 1280.5 1640.4 1285.8C1643.6 1293.7 1644.1 1305.0 1647.2 1306.2C1649.6 1307.1 1650.7 1292.9 1654.0 1291.2C1656.1 1290.1 1660.3 1302.4 1660.8 1299.0C1665.7 1270.8 1665.1 1210.5 1667.7 1212.2C1670.5 1214.1 1669.9 1281.4 1674.5 1308.0C1675.3 1313.0 1677.7 1297.3 1681.3 1291.2C1683.2 1288.0 1685.5 1287.4 1688.1 1284.8C1690.9 1282.0 1693.8 1281.3 1694.9 1277.6C1699.3 1263.1 1700.4 1231.5 1701.8 1239.4C1705.9 1263.2 1705.9 1357.5 1708.6 1356.9C1711.3 1356.3 1711.6 1256.0 1715.4 1236.5C1717.0 1228.2 1720.4 1294.7 1722.2 1287.6C1725.9 1273.2 1726.5 1180.3 1729.0 1183.0C1731.9 1186.0 1731.1 1266.0 1735.9 1301.9C1736.6 1307.2 1739.4 1291.9 1742.7 1285.8C1744.8 1281.9 1748.0 1274.7 1749.5 1276.9C1753.4 1282.6 1752.5 1300.5 1756.3 1305.5C1758.0 1307.6 1759.6 1297.2 1763.1 1294.8C1765.1 1293.4 1768.1 1294.4 1770.0 1296.2C1773.6 1299.7 1774.3 1308.6 1776.8 1308.0C1779.8 1307.3 1780.6 1293.6 1783.6 1293.0C1786.1 1292.5 1789.9 1309.6 1790.4 1305.1C1795.3 1266.7 1794.5 1186.7 1797.2 1185.8C1799.9 1185.0 1799.1 1262.8 1804.1 1300.8C1804.6 1304.8 1807.7 1291.9 1810.9 1290.8C1813.2 1290.1 1815.1 1293.9 1817.7 1296.2C1820.5 1298.6 1822.5 1299.5 1824.5 1302.6C1827.9 1307.8 1829.3 1318.5 1831.3 1316.9C1834.7 1314.2 1834.0 1298.1 1838.2 1291.9C1839.5 1289.9 1842.5 1297.0 1845.0 1296.5C1848.0 1296.0 1851.3 1293.2 1851.8 1289.4C1856.7 1252.5 1853.7 1226.4 1858.6 1194.7C1859.1 1191.4 1865.0 1198.0 1865.4 1201.9C1870.4 1243.8 1867.8 1281.6 1872.3 1309.0C1873.3 1315.2 1876.4 1285.8 1879.1 1285.8C1881.8 1285.8 1881.6 1301.9 1885.9 1309.0C1887.1 1311.1 1890.0 1308.8 1892.7 1308.7C1895.4 1308.6 1897.1 1309.6 1899.5 1308.7C1902.6 1307.6 1903.7 1305.7 1906.4 1303.7C1909.1 1301.6 1910.6 1300.7 1913.2 1298.3C1916.1 1295.7 1918.4 1294.7 1920.0 1291.2C1923.8 1282.8 1923.4 1277.4 1926.8 1268.7C1928.9 1263.4 1933.1 1261.8 1933.6 1256.2C1938.5 1206.1 1937.9 1126.5 1940.5 1129.4C1943.3 1132.5 1942.3 1215.1 1947.3 1271.2C1947.8 1276.6 1950.5 1279.2 1954.1 1283.0C1956.0 1285.0 1958.3 1285.7 1960.9 1285.5C1963.7 1285.3 1965.9 1280.6 1967.7 1281.9C1971.3 1284.3 1973.1 1297.6 1974.6 1294.8C1978.6 1286.9 1977.7 1261.0 1981.4 1255.1C1983.1 1252.3 1984.5 1266.5 1988.2 1273.0C1989.9 1276.0 1993.4 1280.4 1995.0 1278.7C1998.8 1274.8 2001.0 1267.3 2001.8 1259.0C2006.5 1210.8 2005.7 1141.1 2008.7 1137.6C2011.2 1134.5 2010.5 1201.5 2015.5 1242.6C2016.0 1246.8 2020.2 1247.1 2022.3 1250.8C2025.7 1256.9 2027.2 1260.2 2029.1 1266.9C2032.6 1279.1 2031.8 1286.3 2035.9 1298.0C2037.3 1301.7 2039.6 1304.4 2042.8 1305.5C2045.1 1306.3 2048.8 1305.3 2049.6 1302.6C2054.3 1285.9 2053.3 1259.3 2056.4 1256.9C2058.8 1255.0 2061.0 1294.6 2063.2 1291.9C2066.5 1287.9 2068.8 1261.0 2070.0 1240.1C2074.2 1171.2 2074.2 1064.8 2076.9 1067.6C2079.7 1070.5 2078.4 1181.7 2083.7 1254.4C2083.9 1257.1 2089.7 1253.7 2090.5 1256.2C2095.2 1270.6 2094.1 1293.6 2097.3 1296.5C2099.6 1298.6 2101.8 1267.1 2104.1 1268.7C2107.2 1270.7 2107.0 1298.6 2111.0 1305.5C2112.5 1308.2 2115.8 1298.0 2117.8 1292.6C2121.2 1283.3 2122.2 1267.5 2124.6 1268.7C2127.6 1270.1 2130.3 1306.4 2131.4 1299.0C2135.8 1270.4 2135.4 1180.4 2138.2 1178.7C2140.9 1177.1 2140.0 1251.0 2145.1 1290.8C2145.4 1293.8 2150.1 1288.6 2151.9 1285.8C2155.6 1280.2 2156.5 1268.5 2158.7 1269.8C2161.9 1271.6 2161.7 1289.2 2165.5 1293.7C2167.1 1295.6 2170.3 1289.4 2172.3 1285.8C2175.8 1279.8 2176.2 1270.4 2179.2 1269.8C2181.7 1269.2 2183.3 1283.2 2186.0 1283.0C2188.8 1282.8 2190.3 1274.5 2192.8 1268.7C2195.8 1261.7 2198.9 1258.4 2199.6 1250.8C2204.4 1197.0 2203.7 1115.3 2206.4 1115.1C2209.2 1114.9 2209.5 1196.0 2213.3 1249.8C2214.9 1273.8 2216.1 1298.2 2220.1 1309.8C2221.5 1313.9 2223.6 1290.9 2226.9 1289.0C2229.1 1287.8 2230.1 1297.7 2233.7 1301.9C2235.6 1304.1 2237.7 1304.4 2240.5 1305.1C2243.1 1305.7 2246.6 1307.5 2247.4 1305.1C2252.1 1290.0 2251.2 1263.3 2254.2 1261.5C2256.6 1260.1 2256.4 1285.2 2261.0 1297.3C2261.9 1299.5 2267.5 1299.8 2267.8 1297.3C2273.0 1257.0 2269.5 1229.1 2274.6 1190.1C2275.0 1187.4 2281.0 1190.2 2281.5 1193.0C2286.5 1223.0 2284.3 1257.0 2288.3 1272.3C2289.7 1277.7 2293.3 1240.7 2295.1 1244.8C2298.8 1253.3 2297.2 1285.2 2301.9 1303.7C2302.6 1306.5 2305.7 1299.2 2308.7 1298.0C2311.1 1297.0 2312.9 1297.9 2315.6 1298.3C2318.3 1298.8 2322.1 1302.7 2322.4 1300.1C2327.5 1258.2 2326.5 1186.8 2329.2 1187.0C2331.9 1187.2 2332.5 1288.6 2336.0 1301.2C2338.0 1308.3 2340.9 1262.2 2342.8 1236.2C2346.4 1187.9 2347.5 1104.4 2349.7 1115.2C2353.0 1132.0 2351.5 1243.1 2356.5 1305.2C2357.0 1311.6 2360.8 1286.0 2363.3 1286.6C2366.2 1287.4 2366.5 1305.6 2370.1 1308.8C2372.0 1310.5 2375.9 1303.4 2376.9 1298.7C2381.4 1278.9 2380.6 1250.4 2383.8 1247.5C2386.1 1245.3 2388.8 1291.0 2390.6 1285.8C2394.2 1275.4 2394.7 1207.6 2397.4 1208.4C2400.2 1209.2 2401.1 1285.4 2404.2 1289.9C2406.6 1293.3 2408.9 1252.9 2411.0 1228.1C2414.4 1189.1 2415.7 1122.1 2417.9 1130.5C2421.2 1143.5 2419.5 1223.2 2424.7 1281.8C2424.9 1284.5 2430.0 1281.6 2431.5 1283.8C2435.5 1289.7 2435.2 1300.9 2438.3 1302.0C2440.7 1302.8 2441.8 1290.5 2445.1 1288.6C2447.2 1287.5 2450.3 1296.4 2452.0 1294.7C2455.8 1290.9 2454.7 1280.9 2458.8 1274.9C2460.1 1273.0 2465.4 1272.3 2465.6 1274.9C2470.8 1338.4 2470.2 1443.0 2472.4 1440.1C2475.6 1423.1 2475.1 1250.6 2479.2 1203.1C2480.6 1187.3 2481.8 1263.4 2486.1 1281.8C2487.2 1286.8 2490.3 1261.2 2492.9 1261.6C2495.7 1262.0 2496.3 1275.2 2499.7 1283.8C2501.7 1288.9 2503.9 1291.0 2506.5 1295.9C2509.3 1301.0 2509.8 1304.4 2513.3 1308.8C2515.3 1311.2 2518.6 1314.5 2520.2 1312.9C2524.0 1308.8 2523.1 1299.0 2527.0 1294.7C2528.5 1293.0 2531.6 1298.8 2533.8 1297.9C2537.1 1296.6 2540.5 1293.5 2540.6 1289.1C2545.9 1116.9 2544.7 854.6 2547.4 856.4C2550.2 858.2 2549.2 1147.5 2554.3 1297.9C2554.7 1310.1 2557.4 1267.9 2561.1 1262.8C2562.9 1260.3 2565.9 1281.0 2567.9 1279.0C2571.4 1275.2 2571.0 1253.0 2574.7 1248.3C2576.5 1246.1 2578.6 1261.1 2581.5 1261.6C2584.1 1262.1 2585.6 1250.9 2588.4 1250.7C2591.0 1250.6 2591.7 1258.0 2595.2 1260.8C2597.1 1262.4 2600.2 1259.9 2602.0 1261.6C2605.7 1265.1 2608.1 1278.0 2608.8 1273.7C2613.6 1243.6 2613.0 1174.0 2615.6 1175.7C2618.5 1177.5 2617.4 1245.2 2622.5 1282.6C2622.9 1285.7 2626.3 1278.6 2629.3 1276.9C2631.7 1275.6 2634.3 1273.5 2636.1 1274.9C2639.8 1277.9 2641.3 1290.3 2642.9 1287.8C2646.7 1282.2 2645.2 1265.8 2649.7 1254.8C2650.7 1252.5 2656.4 1252.1 2656.6 1254.8C2661.8 1327.4 2660.8 1443.0 2663.4 1443.0C2666.2 1438.8 2665.7 1289.2 2670.2 1234.6C2671.1 1223.1 2676.2 1290.0 2677.0 1277.8C2681.7 1208.1 2681.0 1034.5 2683.8 1029.6C2686.4 1025.3 2685.4 1166.5 2690.7 1254.8C2690.8 1257.7 2695.8 1255.4 2697.5 1257.6C2701.3 1262.6 2701.9 1266.6 2704.3 1272.9C2707.4 1281.2 2707.1 1286.5 2711.1 1293.9C2712.6 1296.5 2716.7 1300.0 2717.9 1297.9C2722.2 1290.8 2722.3 1269.6 2724.8 1270.9C2727.8 1272.5 2729.5 1308.5 2731.6 1305.2C2734.9 1299.9 2735.7 1271.8 2738.4 1249.5 L2738.4 1443.0 L692.4 1443.0 Z" fill="rgba(103,234,71,0.19)"/><path d="M692.4 1136.5C695.1 1141.8 698.2 1153.5 699.2 1149.7C703.6 1134.5 703.7 1085.8 706.0 1089.0C709.1 1093.1 708.7 1136.6 712.9 1168.0C714.1 1177.5 715.4 1183.9 719.7 1191.2C720.9 1193.2 725.4 1193.3 726.5 1191.2C730.9 1182.4 730.4 1174.8 733.3 1164.0C735.9 1154.4 737.9 1138.1 740.1 1140.1C743.4 1143.1 743.1 1170.3 747.0 1176.5C748.6 1179.2 751.4 1168.1 753.8 1162.2C756.9 1154.5 756.7 1149.6 760.6 1142.6C762.2 1139.7 765.1 1136.9 767.4 1137.6C770.5 1138.5 773.0 1149.1 774.2 1146.5C778.5 1137.6 779.4 1102.8 781.1 1108.7C784.8 1121.4 783.0 1160.1 787.9 1193.0C788.5 1197.0 792.2 1197.5 794.7 1200.8C797.7 1204.9 799.8 1206.8 801.5 1211.5C805.3 1222.2 806.0 1241.1 808.3 1239.4C811.5 1237.1 812.0 1216.6 815.2 1201.5C817.5 1190.6 817.7 1181.8 822.0 1174.4C823.2 1172.3 826.1 1178.0 828.8 1178.0C831.6 1177.9 833.7 1176.4 835.6 1174.0C839.2 1169.5 841.8 1166.7 842.4 1160.8C847.2 1118.8 845.6 1069.2 849.3 1054.4C851.0 1047.2 852.7 1085.3 856.1 1105.8C858.2 1118.8 860.2 1125.1 862.9 1137.9C865.6 1150.7 866.7 1157.1 869.7 1169.7C872.1 1179.7 874.3 1196.3 876.5 1194.4C879.8 1191.6 880.5 1158.6 883.4 1158.0C886.0 1157.3 888.1 1194.3 890.2 1191.2C893.5 1186.2 894.4 1136.9 897.0 1137.6C899.8 1138.3 899.5 1172.4 903.8 1194.7C904.9 1200.5 909.8 1212.2 910.6 1208.0C915.3 1183.0 914.4 1156.1 917.5 1121.5C919.8 1094.6 922.0 1049.9 924.3 1054.4C927.5 1060.5 927.1 1130.4 931.1 1147.9C932.6 1154.4 934.7 1116.9 937.9 1114.4C940.2 1112.6 941.8 1128.2 944.7 1137.2C947.3 1145.0 947.5 1150.2 951.6 1156.5C953.0 1158.7 956.7 1160.2 958.4 1158.7C962.1 1155.4 962.9 1143.7 965.2 1144.7C968.4 1146.2 971.2 1171.0 972.0 1165.1C976.6 1133.5 976.1 1051.4 978.8 1050.8C981.5 1050.2 980.8 1118.3 985.7 1162.2C986.3 1167.8 989.1 1170.3 992.5 1174.7C994.5 1177.4 998.0 1182.1 999.3 1180.1C1003.4 1174.0 1005.6 1165.0 1006.1 1154.4C1011.0 1057.3 1010.6 898.4 1012.9 910.9C1016.0 927.0 1015.2 1139.6 1019.8 1225.8C1020.6 1242.1 1022.0 1184.1 1026.6 1166.9C1027.4 1163.8 1033.0 1178.7 1033.4 1175.1C1038.4 1134.4 1035.9 1084.6 1040.2 1056.1C1041.3 1048.9 1045.4 1073.8 1047.0 1085.8C1050.9 1114.6 1050.1 1147.6 1053.9 1158.3C1055.6 1163.3 1058.4 1123.0 1060.7 1125.1C1063.8 1127.9 1064.9 1171.7 1067.5 1170.5C1070.4 1169.1 1069.9 1138.8 1074.3 1118.7C1075.4 1113.8 1080.1 1104.7 1081.1 1107.9C1085.5 1121.3 1083.8 1139.6 1088.0 1160.1C1089.3 1166.5 1091.9 1174.6 1094.8 1175.1C1097.3 1175.6 1098.7 1163.0 1101.6 1162.6C1104.2 1162.3 1106.5 1175.0 1108.4 1173.3C1112.0 1170.0 1114.4 1159.7 1115.2 1150.1C1119.8 1098.3 1119.6 1014.6 1122.1 1019.7C1125.1 1026.0 1124.0 1128.5 1128.9 1178.7C1129.5 1184.8 1131.9 1166.9 1135.7 1160.5C1137.3 1157.7 1141.4 1153.7 1142.5 1155.8C1146.8 1163.7 1146.8 1186.4 1149.3 1185.5C1152.3 1184.3 1152.7 1164.3 1156.2 1150.5C1158.1 1142.5 1159.7 1133.0 1163.0 1131.2C1165.2 1130.0 1168.0 1144.9 1169.8 1142.9C1173.5 1138.9 1174.2 1115.1 1176.6 1116.2C1179.6 1117.5 1181.1 1150.8 1183.4 1149.0C1186.5 1146.8 1188.0 1103.1 1190.3 1106.2C1193.5 1110.4 1193.2 1143.0 1197.1 1167.2C1198.7 1177.3 1199.9 1182.9 1203.9 1191.9C1205.3 1195.0 1207.9 1195.4 1210.7 1197.6C1213.4 1199.7 1216.8 1205.2 1217.5 1202.6C1222.3 1185.4 1220.9 1154.0 1224.4 1147.9C1226.3 1144.5 1227.6 1174.5 1231.2 1178.7C1233.1 1180.8 1235.5 1163.1 1238.0 1163.7C1241.0 1164.4 1243.3 1185.5 1244.8 1181.9C1248.8 1172.5 1249.6 1151.5 1251.6 1131.2C1255.1 1095.8 1256.0 1038.6 1258.5 1042.6C1261.5 1047.6 1260.6 1121.0 1265.3 1153.7C1266.0 1158.9 1270.5 1134.1 1272.1 1137.2C1276.0 1144.9 1275.1 1173.0 1278.9 1180.5C1280.5 1183.6 1283.7 1161.7 1285.7 1163.7C1289.2 1167.0 1288.8 1188.6 1292.6 1193.7C1294.2 1195.9 1296.7 1181.7 1299.4 1181.9C1302.2 1182.1 1303.8 1195.5 1306.2 1194.7C1309.3 1193.8 1311.3 1184.7 1313.0 1177.6C1316.8 1162.2 1317.7 1135.0 1319.8 1138.3C1323.1 1143.3 1322.1 1181.1 1326.7 1198.3C1327.5 1201.5 1330.2 1190.9 1333.5 1189.4C1335.6 1188.4 1338.7 1193.5 1340.3 1191.9C1344.2 1188.1 1345.0 1174.2 1347.1 1175.8C1350.5 1178.4 1350.4 1199.2 1353.9 1202.6C1355.9 1204.5 1357.3 1191.1 1360.8 1189.0C1362.7 1187.8 1365.3 1195.2 1367.6 1194.4C1370.8 1193.2 1372.3 1182.7 1374.4 1184.0C1377.8 1186.3 1380.4 1209.1 1381.2 1203.3C1385.8 1171.5 1385.6 1085.7 1388.0 1090.1C1391.0 1095.4 1390.0 1184.5 1394.9 1227.6C1395.5 1233.1 1398.6 1212.6 1401.7 1211.5C1404.0 1210.7 1405.5 1222.4 1408.5 1223.0C1411.0 1223.4 1414.3 1218.3 1415.3 1214.0C1419.8 1195.2 1418.8 1169.9 1422.1 1165.1C1424.2 1162.2 1427.1 1198.8 1429.0 1194.7C1432.6 1186.7 1432.6 1139.0 1435.8 1134.7C1438.0 1131.7 1440.7 1181.5 1442.6 1176.5C1446.1 1167.5 1445.0 1119.5 1449.4 1099.7C1450.4 1095.2 1455.1 1109.0 1456.2 1115.8C1460.6 1141.5 1459.2 1170.6 1463.1 1181.2C1464.7 1185.7 1467.7 1151.4 1469.9 1153.7C1473.1 1157.1 1473.6 1193.0 1476.7 1195.5C1479.0 1197.3 1479.0 1174.7 1483.5 1164.4C1484.5 1162.2 1488.0 1165.1 1490.3 1164.0C1493.5 1162.6 1494.6 1157.6 1497.2 1158.0C1500.1 1158.3 1500.7 1163.7 1504.0 1165.8C1506.2 1167.2 1509.1 1168.4 1510.8 1166.9C1514.6 1163.4 1514.4 1154.6 1517.6 1153.3C1519.9 1152.4 1523.8 1164.9 1524.4 1161.5C1529.3 1135.6 1528.2 1084.5 1531.3 1080.1C1533.6 1076.7 1534.7 1117.3 1538.1 1141.9C1540.2 1157.0 1542.6 1182.0 1544.9 1179.4C1548.1 1175.6 1548.6 1129.1 1551.7 1125.8C1554.0 1123.4 1555.0 1160.3 1558.5 1165.1C1560.5 1167.7 1562.0 1146.7 1565.4 1144.4C1567.4 1143.0 1569.6 1151.2 1572.2 1155.8C1575.0 1160.9 1576.8 1163.3 1579.0 1168.7C1582.3 1176.7 1583.4 1190.3 1585.8 1189.4C1588.8 1188.2 1591.5 1174.0 1592.6 1163.3C1597.0 1120.7 1596.7 1056.1 1599.5 1056.1C1602.2 1056.1 1601.5 1121.0 1606.3 1163.3C1607.0 1169.6 1609.6 1175.3 1613.1 1177.6C1615.0 1178.9 1618.2 1175.1 1619.9 1172.2C1623.7 1165.9 1623.0 1160.8 1626.7 1154.4C1628.4 1151.5 1632.3 1147.0 1633.6 1149.0C1637.7 1155.5 1636.2 1166.0 1640.4 1175.8C1641.7 1178.9 1646.1 1178.0 1647.2 1181.2C1651.5 1193.3 1650.6 1201.1 1654.0 1214.0C1656.1 1221.8 1659.9 1238.3 1660.8 1233.0C1665.4 1207.3 1664.6 1141.2 1667.7 1136.5C1670.1 1132.9 1669.9 1182.5 1674.5 1212.2C1675.4 1218.3 1679.0 1227.2 1681.3 1226.2C1684.4 1224.8 1685.5 1214.2 1688.1 1206.2C1690.9 1197.6 1691.5 1193.0 1694.9 1184.7C1697.0 1179.7 1701.1 1168.8 1701.8 1173.0C1706.6 1203.3 1706.5 1280.4 1708.6 1271.2C1711.9 1256.3 1711.8 1132.5 1715.4 1112.6C1717.3 1102.2 1720.1 1202.3 1722.2 1195.5C1725.5 1185.1 1726.4 1067.2 1729.0 1069.7C1731.9 1072.5 1731.8 1180.5 1735.9 1208.7C1737.2 1218.0 1738.5 1180.9 1742.7 1163.3C1743.9 1158.2 1748.3 1148.8 1749.5 1151.9C1753.8 1163.0 1752.0 1187.2 1756.3 1199.0C1757.4 1202.0 1760.6 1188.7 1763.1 1189.0C1766.0 1189.4 1766.4 1198.4 1770.0 1200.8C1771.9 1202.1 1775.5 1200.7 1776.8 1198.3C1780.9 1190.9 1781.0 1176.2 1783.6 1176.5C1786.4 1176.9 1789.5 1206.5 1790.4 1200.1C1794.9 1169.8 1794.5 1084.7 1797.2 1084.7C1800.0 1084.7 1799.8 1174.4 1804.1 1200.1C1805.3 1207.5 1807.6 1170.2 1810.9 1167.6C1813.1 1165.8 1814.0 1181.0 1817.7 1189.0C1819.5 1192.8 1821.3 1194.5 1824.5 1197.2C1826.8 1199.2 1829.5 1202.2 1831.3 1200.8C1835.0 1198.2 1835.6 1192.7 1838.2 1187.2C1841.1 1181.0 1841.2 1174.9 1845.0 1171.5C1846.7 1170.0 1851.3 1177.7 1851.8 1175.1C1856.7 1150.2 1854.1 1131.1 1858.6 1102.6C1859.5 1096.8 1864.8 1084.7 1865.4 1089.4C1870.3 1125.2 1868.2 1180.8 1872.3 1203.7C1873.6 1211.4 1876.6 1164.4 1879.1 1165.8C1882.1 1167.5 1881.2 1194.8 1885.9 1211.5C1886.7 1214.2 1889.9 1213.8 1892.7 1214.4C1895.3 1214.9 1898.4 1216.4 1899.5 1214.4C1903.8 1207.0 1902.5 1199.6 1906.4 1190.8C1907.9 1187.3 1910.1 1186.0 1913.2 1183.7C1915.5 1181.9 1918.5 1182.8 1920.0 1180.5C1923.9 1174.4 1923.8 1169.6 1926.8 1162.6C1929.3 1156.8 1933.0 1154.6 1933.6 1148.3C1938.5 1097.0 1937.7 1019.0 1940.5 1018.6C1943.2 1018.3 1943.0 1095.6 1947.3 1146.5C1948.5 1160.6 1949.7 1171.8 1954.1 1181.2C1955.2 1183.5 1958.0 1176.2 1960.9 1175.8C1963.5 1175.5 1964.9 1179.0 1967.7 1179.4C1970.3 1179.7 1973.7 1180.0 1974.6 1177.6C1979.1 1165.4 1977.3 1150.1 1981.4 1142.9C1982.8 1140.4 1986.2 1148.8 1988.2 1153.3C1991.7 1161.2 1992.6 1175.0 1995.0 1174.0C1998.0 1172.8 2001.1 1158.7 2001.8 1147.9C2006.6 1077.2 2005.6 979.6 2008.7 970.4C2011.0 963.3 2011.2 1052.7 2015.5 1107.2C2016.6 1121.7 2018.6 1129.0 2022.3 1142.9C2024.1 1149.7 2027.3 1152.3 2029.1 1159.0C2032.7 1171.9 2032.9 1178.8 2035.9 1191.9C2038.3 1202.0 2039.8 1216.1 2042.8 1216.9C2045.3 1217.6 2048.3 1204.3 2049.6 1195.5C2053.7 1167.5 2053.2 1130.1 2056.4 1124.7C2058.6 1121.1 2061.1 1177.6 2063.2 1173.0C2066.6 1165.4 2067.9 1125.8 2070.0 1094.4C2073.4 1044.1 2074.5 962.4 2076.9 968.6C2079.9 976.7 2079.8 1065.6 2083.7 1130.1C2085.2 1155.6 2085.9 1176.0 2090.5 1193.7C2091.4 1197.2 2095.4 1187.6 2097.3 1183.0C2100.9 1174.1 2102.1 1157.1 2104.1 1159.7C2107.6 1164.3 2108.3 1201.3 2111.0 1200.8C2113.8 1200.3 2113.3 1173.7 2117.8 1157.2C2118.7 1153.7 2123.7 1148.1 2124.6 1150.8C2129.2 1164.8 2129.9 1207.4 2131.4 1199.0C2135.3 1178.1 2135.2 1083.3 2138.2 1077.6C2140.6 1073.0 2140.6 1135.4 2145.1 1173.3C2146.1 1181.8 2149.6 1195.2 2151.9 1193.7C2155.1 1191.6 2156.6 1161.4 2158.7 1164.4C2162.1 1169.4 2162.2 1209.6 2165.5 1213.7C2167.7 1216.4 2168.7 1193.9 2172.3 1181.2C2174.2 1174.7 2175.9 1171.6 2179.2 1165.8C2181.3 1162.0 2182.6 1159.4 2186.0 1157.2C2188.1 1155.9 2190.7 1158.3 2192.8 1156.9C2196.2 1154.7 2199.3 1152.6 2199.6 1148.3C2204.7 1085.9 2203.8 988.1 2206.4 990.1C2209.3 992.2 2208.4 1091.6 2213.3 1158.7C2213.9 1167.1 2217.2 1170.7 2220.1 1178.7C2222.7 1185.9 2223.0 1192.5 2226.9 1196.5C2228.5 1198.2 2231.9 1191.6 2233.7 1193.0C2237.3 1195.5 2238.2 1207.1 2240.5 1206.2C2243.7 1205.0 2245.9 1195.3 2247.4 1187.6C2251.4 1165.8 2250.9 1137.0 2254.2 1132.2C2256.3 1129.1 2258.1 1153.7 2261.0 1168.0C2263.5 1180.4 2266.6 1206.0 2267.8 1199.0C2272.0 1175.2 2269.7 1133.2 2274.6 1090.8C2275.1 1086.7 2280.8 1079.7 2281.5 1082.9C2286.3 1106.5 2283.8 1138.3 2288.3 1158.0C2289.3 1162.3 2294.0 1138.8 2295.1 1142.9C2299.5 1160.2 2298.0 1199.2 2301.9 1211.5C2303.4 1216.3 2305.9 1196.1 2308.7 1185.8C2311.4 1176.4 2313.2 1161.0 2315.6 1162.2C2318.6 1163.8 2321.3 1200.5 2322.4 1193.0C2326.7 1163.3 2326.5 1068.0 2329.2 1069.2C2332.0 1070.4 2332.5 1183.3 2336.0 1199.1C2337.9 1207.5 2340.9 1157.5 2342.8 1129.7C2346.4 1078.9 2347.4 994.1 2349.7 1002.6C2352.8 1014.6 2351.5 1120.6 2356.5 1180.9C2356.9 1186.2 2360.6 1166.7 2363.3 1166.8C2366.1 1167.0 2367.5 1175.7 2370.1 1181.7C2373.0 1188.3 2375.8 1202.6 2376.9 1198.3C2381.3 1181.3 2379.7 1142.8 2383.8 1128.5C2385.1 1123.8 2388.9 1154.4 2390.6 1150.7C2394.4 1142.0 2395.3 1092.8 2397.4 1097.4C2400.7 1104.5 2401.1 1175.3 2404.2 1179.7C2406.6 1183.1 2409.0 1142.0 2411.0 1116.8C2414.5 1073.6 2415.7 1000.3 2417.9 1008.7C2421.1 1021.1 2419.7 1105.3 2424.7 1168.8C2425.2 1175.0 2428.5 1177.5 2431.5 1183.0C2434.0 1187.5 2434.8 1191.2 2438.3 1193.8C2440.2 1195.2 2442.5 1192.8 2445.1 1193.0C2447.9 1193.3 2450.9 1197.1 2452.0 1195.1C2456.3 1187.1 2454.4 1176.7 2458.8 1168.0C2459.9 1165.9 2465.5 1165.4 2465.6 1168.0C2470.9 1269.0 2470.0 1436.9 2472.4 1427.1C2475.4 1415.1 2474.7 1197.9 2479.2 1113.6C2480.1 1097.0 2482.4 1166.3 2486.1 1174.9C2487.9 1179.1 2490.2 1145.0 2492.9 1145.4C2495.7 1145.8 2495.4 1165.2 2499.7 1176.9C2500.9 1180.2 2504.8 1179.9 2506.5 1183.0C2510.2 1189.5 2509.7 1194.4 2513.3 1201.1C2515.2 1204.6 2519.0 1210.9 2520.2 1208.4C2524.5 1198.5 2523.1 1177.1 2527.0 1170.0C2528.5 1167.3 2530.8 1178.4 2533.8 1183.8C2536.3 1188.1 2540.5 1199.0 2540.6 1194.2C2545.9 1028.8 2544.7 758.0 2547.4 758.4C2550.2 758.7 2549.6 1072.9 2554.3 1195.9C2555.1 1217.4 2557.9 1124.7 2561.1 1119.6C2563.4 1116.0 2565.0 1172.4 2567.9 1174.1C2570.4 1175.5 2570.6 1136.9 2574.7 1127.3C2576.1 1124.0 2577.8 1137.2 2581.5 1141.8C2583.2 1143.8 2585.6 1143.5 2588.4 1143.8C2591.0 1144.1 2593.2 1144.9 2595.2 1143.4C2598.6 1140.9 2600.8 1131.0 2602.0 1133.7C2606.2 1143.2 2607.5 1182.3 2608.8 1174.1C2612.9 1149.2 2613.0 1049.5 2615.6 1051.0C2618.5 1052.7 2618.1 1149.7 2622.5 1182.1C2623.5 1189.9 2626.6 1151.5 2629.3 1151.5C2632.0 1151.5 2631.7 1171.3 2636.1 1182.1C2637.1 1184.7 2642.0 1187.1 2642.9 1185.0C2647.4 1174.9 2645.2 1162.6 2649.7 1151.5C2650.6 1149.3 2656.4 1148.9 2656.6 1151.5C2661.8 1221.9 2660.8 1338.6 2663.4 1334.1C2666.3 1328.9 2665.7 1179.8 2670.2 1127.3C2671.2 1115.5 2676.2 1186.2 2677.0 1173.3C2681.6 1102.0 2680.9 925.8 2683.8 916.7C2686.3 909.0 2685.4 1051.3 2690.7 1131.3C2690.9 1134.7 2696.7 1122.5 2697.5 1125.3C2702.1 1141.6 2700.2 1157.8 2704.3 1178.9C2705.7 1186.0 2707.6 1193.2 2711.1 1195.9C2713.0 1197.3 2717.1 1192.7 2717.9 1189.0C2722.5 1169.4 2722.2 1136.3 2724.8 1137.8C2727.7 1139.5 2729.1 1199.1 2731.6 1197.1C2734.5 1194.6 2735.7 1154.7 2738.4 1126.5 L2738.4 1443.0 L692.4 1443.0 Z" fill="rgba(103,234,71,0.19)"/><path d="M692.4 1024.7C695.1 1019.5 698.0 1017.3 699.2 1011.6C703.5 991.7 704.3 953.0 706.0 960.7C709.8 977.7 708.4 1028.7 712.9 1073.5C713.8 1083.1 717.6 1099.0 719.7 1096.6C723.1 1092.7 721.9 1069.9 726.5 1057.7C727.4 1055.4 732.3 1062.6 733.3 1060.5C737.7 1051.3 737.8 1027.8 740.1 1029.5C743.2 1031.7 743.7 1066.6 747.0 1070.1C749.1 1072.4 751.5 1054.5 753.8 1044.0C757.0 1028.8 757.7 1006.7 760.6 1005.8C763.2 1004.9 764.2 1036.9 767.4 1039.5C769.6 1041.3 771.7 1025.9 774.2 1016.8C777.1 1006.4 779.5 985.8 781.1 990.6C785.0 1003.1 782.9 1034.4 787.9 1060.1C788.4 1062.7 794.0 1058.7 794.7 1061.2C799.4 1076.8 798.4 1087.6 801.5 1105.2C803.8 1118.2 806.1 1139.8 808.3 1137.5C811.5 1134.3 812.5 1109.9 815.2 1091.4C817.9 1072.6 817.9 1054.2 822.0 1044.3C823.3 1041.0 826.4 1052.6 828.8 1058.4C831.8 1065.7 834.4 1081.4 835.6 1077.0C839.8 1062.2 839.8 1037.2 842.4 1010.6C845.3 981.4 846.2 941.7 849.3 937.7C851.6 934.6 852.2 970.9 856.1 992.7C857.7 1001.6 861.1 1005.5 862.9 1014.4C866.5 1032.2 865.7 1041.8 869.7 1059.4C871.2 1065.7 874.5 1076.0 876.5 1074.2C880.0 1071.1 880.6 1047.3 883.4 1047.0C886.0 1046.8 888.4 1076.7 890.2 1072.8C893.9 1064.6 894.4 1016.0 897.0 1016.8C899.8 1017.6 900.3 1053.0 903.8 1077.0C905.7 1089.9 909.0 1114.4 910.6 1109.0C914.5 1095.8 914.8 1061.9 917.5 1030.5C920.3 996.4 921.7 943.6 924.3 945.2C927.1 947.0 927.1 1021.5 931.1 1039.1C932.6 1045.6 934.4 1009.7 937.9 1005.4C939.8 1003.1 942.8 1015.5 944.7 1022.6C948.2 1035.3 947.9 1050.0 951.6 1055.0C953.3 1057.3 956.3 1046.7 958.4 1040.9C961.7 1031.5 962.1 1018.1 965.2 1016.8C967.6 1015.8 971.1 1040.3 972.0 1035.0C976.6 1008.9 976.2 937.0 978.8 938.3C981.7 939.8 981.4 1000.7 985.7 1041.9C986.9 1053.4 989.8 1058.8 992.5 1070.1C995.3 1081.8 996.9 1100.8 999.3 1099.3C1002.4 1097.4 1005.3 1076.8 1006.1 1061.5C1010.8 970.5 1010.5 823.1 1012.9 833.4C1016.0 846.4 1015.5 1056.3 1019.8 1120.0C1021.0 1138.2 1022.8 1050.7 1026.6 1038.1C1028.3 1032.4 1032.4 1083.5 1033.4 1074.2C1037.8 1033.9 1036.1 947.3 1040.2 914.3C1041.5 903.7 1044.9 944.7 1047.0 965.2C1050.4 997.0 1051.0 1043.8 1053.9 1045.0C1056.5 1046.1 1057.9 971.5 1060.7 971.0C1063.4 970.5 1064.1 1035.5 1067.5 1042.6C1069.6 1046.9 1070.4 1016.4 1074.3 999.6C1075.9 992.9 1079.8 980.1 1081.1 983.8C1085.3 994.9 1084.1 1015.6 1088.0 1036.4C1089.6 1045.0 1091.5 1055.5 1094.8 1057.4C1097.0 1058.6 1099.4 1043.1 1101.6 1044.3C1104.9 1046.1 1106.7 1068.3 1108.4 1064.9C1112.2 1057.6 1113.8 1036.6 1115.2 1017.5C1119.2 966.0 1119.7 882.3 1122.1 888.5C1125.1 896.2 1124.2 1005.8 1128.9 1052.2C1129.7 1060.2 1132.2 1028.0 1135.7 1024.7C1137.7 1022.8 1140.9 1033.0 1142.5 1039.1C1146.3 1053.5 1147.0 1078.2 1149.3 1075.9C1152.5 1072.9 1152.7 1045.9 1156.2 1026.1C1158.1 1014.9 1159.8 1000.6 1163.0 998.5C1165.2 997.1 1167.3 1018.2 1169.8 1017.5C1172.8 1016.6 1172.9 998.1 1176.6 994.4C1178.4 992.6 1181.2 1004.7 1183.4 1003.7C1186.7 1002.2 1189.3 983.7 1190.3 988.2C1194.8 1009.6 1193.0 1036.6 1197.1 1068.4C1198.4 1078.9 1201.0 1083.9 1203.9 1094.2C1206.4 1102.9 1207.3 1113.2 1210.7 1115.8C1212.7 1117.4 1216.4 1109.6 1217.5 1104.5C1221.8 1085.5 1219.7 1070.7 1224.4 1055.6C1225.1 1053.1 1229.6 1062.2 1231.2 1060.5C1235.1 1056.0 1235.1 1040.8 1238.0 1040.2C1240.5 1039.6 1242.9 1059.8 1244.8 1057.4C1248.4 1052.8 1250.0 1036.7 1251.6 1022.6C1255.4 991.3 1255.8 943.0 1258.5 943.8C1261.3 944.8 1262.2 1022.7 1265.3 1027.1C1267.6 1030.5 1270.1 956.4 1272.1 963.5C1275.6 975.9 1274.1 1040.2 1278.9 1075.9C1279.5 1080.3 1284.0 1061.8 1285.7 1063.9C1289.4 1068.2 1288.2 1081.9 1292.6 1091.8C1293.7 1094.3 1297.4 1092.8 1299.4 1094.9C1302.9 1098.6 1305.0 1109.3 1306.2 1106.2C1310.5 1095.0 1308.4 1077.0 1313.0 1059.1C1313.9 1055.6 1319.0 1050.1 1319.8 1052.9C1324.5 1069.0 1323.3 1100.8 1326.7 1106.2C1328.7 1109.5 1329.0 1084.4 1333.5 1074.6C1334.5 1072.4 1337.7 1075.2 1340.3 1076.3C1343.2 1077.5 1344.3 1079.0 1347.1 1080.4C1349.7 1081.7 1351.3 1081.7 1353.9 1082.8C1356.7 1084.0 1359.3 1083.8 1360.8 1086.3C1364.7 1092.9 1365.9 1108.8 1367.6 1105.5C1371.4 1098.2 1371.2 1063.3 1374.4 1059.8C1376.6 1057.4 1379.7 1096.2 1381.2 1090.7C1385.1 1077.2 1385.9 1005.9 1388.0 1012.3C1391.3 1022.0 1390.9 1109.8 1394.9 1131.0C1396.4 1139.2 1399.2 1084.1 1401.7 1085.6C1404.6 1087.3 1404.1 1125.3 1408.5 1138.9C1409.6 1142.2 1414.5 1132.9 1415.3 1127.9C1420.0 1098.3 1418.6 1061.7 1422.1 1052.2C1424.0 1047.2 1427.2 1097.4 1429.0 1091.8C1432.6 1080.2 1433.1 1008.6 1435.8 1009.2C1438.6 1009.8 1440.3 1100.5 1442.6 1094.9C1445.8 1087.0 1445.5 996.0 1449.4 975.5C1451.0 967.3 1453.9 1003.9 1456.2 1023.0C1459.4 1048.4 1460.6 1089.3 1463.1 1086.6C1466.1 1083.3 1466.6 1014.2 1469.9 1008.2C1472.1 1004.1 1472.0 1044.2 1476.7 1061.2C1477.4 1063.7 1480.6 1057.9 1483.5 1057.0C1486.0 1056.3 1488.8 1058.8 1490.3 1057.0C1494.3 1052.4 1495.0 1039.4 1497.2 1040.9C1500.4 1043.0 1499.7 1058.4 1504.0 1066.0C1505.1 1068.0 1509.7 1067.2 1510.8 1064.9C1515.2 1056.1 1513.3 1047.5 1517.6 1038.4C1518.7 1036.1 1523.9 1039.0 1524.4 1036.4C1529.3 1013.4 1528.4 975.3 1531.3 974.5C1533.9 973.7 1534.4 1009.3 1538.1 1032.3C1539.9 1043.6 1542.7 1062.6 1544.9 1060.1C1548.2 1056.4 1548.9 1017.2 1551.7 1016.8C1554.4 1016.4 1555.1 1053.4 1558.5 1058.1C1560.5 1060.7 1562.4 1035.9 1565.4 1035.0C1567.8 1034.3 1568.1 1047.8 1572.2 1053.9C1573.6 1056.1 1577.8 1053.4 1579.0 1055.6C1583.3 1063.7 1582.8 1078.4 1585.8 1079.7C1588.2 1080.8 1591.7 1069.2 1592.6 1061.5C1597.2 1022.3 1596.4 966.6 1599.5 962.4C1601.9 959.0 1602.0 1010.8 1606.3 1042.6C1607.5 1051.4 1609.3 1056.0 1613.1 1063.9C1614.7 1067.3 1617.0 1070.4 1619.9 1070.8C1622.5 1071.1 1625.6 1068.7 1626.7 1065.6C1631.1 1054.0 1631.2 1032.3 1633.6 1034.0C1636.6 1036.1 1636.1 1065.2 1640.4 1075.3C1641.6 1078.0 1645.9 1063.3 1647.2 1066.0C1651.4 1074.8 1651.0 1088.7 1654.0 1103.8C1656.5 1116.2 1659.6 1141.6 1660.8 1134.8C1665.0 1112.5 1663.8 1047.9 1667.7 1031.2C1669.3 1024.1 1671.5 1057.7 1674.5 1075.3C1677.0 1090.0 1677.9 1108.2 1681.3 1112.1C1683.3 1114.4 1685.7 1099.4 1688.1 1090.7C1691.1 1080.1 1691.2 1068.1 1694.9 1063.9C1696.7 1061.9 1701.0 1070.1 1701.8 1075.3C1706.5 1108.8 1706.4 1168.0 1708.6 1160.8C1711.9 1149.8 1711.8 1045.9 1715.4 1029.8C1717.3 1021.3 1720.1 1105.5 1722.2 1099.3C1725.6 1089.6 1726.4 987.8 1729.0 989.9C1731.9 992.3 1732.1 1092.8 1735.9 1110.7C1737.6 1118.9 1739.5 1077.4 1742.7 1055.3C1744.9 1039.8 1747.9 1010.5 1749.5 1016.8C1753.3 1031.5 1752.4 1091.5 1756.3 1107.9C1757.8 1114.2 1760.6 1072.6 1763.1 1073.5C1766.1 1074.6 1766.7 1110.0 1770.0 1113.1C1772.2 1115.2 1774.3 1097.3 1776.8 1086.6C1779.8 1073.9 1780.7 1055.6 1783.6 1054.6C1786.1 1053.8 1789.3 1088.9 1790.4 1082.1C1794.8 1055.5 1794.7 967.5 1797.2 971.0C1800.2 975.1 1800.5 1085.9 1804.1 1101.1C1806.0 1109.4 1807.8 1033.9 1810.9 1029.8C1813.2 1026.8 1813.8 1062.1 1817.7 1083.2C1819.2 1091.3 1821.7 1102.4 1824.5 1102.8C1827.1 1103.1 1827.8 1087.6 1831.3 1084.9C1833.2 1083.5 1837.1 1095.0 1838.2 1092.5C1842.5 1082.3 1841.4 1058.0 1845.0 1052.9C1846.9 1050.2 1850.7 1077.8 1851.8 1072.8C1856.1 1054.1 1854.6 1008.6 1858.6 993.7C1860.1 988.3 1864.3 1010.4 1865.4 1021.9C1869.8 1065.3 1868.8 1118.9 1872.3 1131.0C1874.2 1137.9 1876.3 1069.9 1879.1 1069.4C1881.8 1068.9 1881.7 1105.3 1885.9 1128.6C1887.1 1135.2 1888.8 1139.6 1892.7 1144.1C1894.3 1145.8 1898.7 1146.3 1899.5 1144.1C1904.2 1130.8 1903.4 1120.7 1906.4 1105.2C1908.9 1092.1 1908.7 1084.0 1913.2 1072.5C1914.2 1070.0 1919.4 1072.8 1920.0 1070.1C1924.9 1048.0 1923.0 1020.6 1926.8 1010.6C1928.4 1006.4 1932.8 1041.5 1933.6 1034.7C1938.2 998.9 1937.6 906.8 1940.5 903.9C1943.0 901.3 1943.1 974.3 1947.3 1020.9C1948.6 1035.3 1950.5 1042.4 1954.1 1056.3C1955.9 1063.2 1957.0 1068.6 1960.9 1072.8C1962.5 1074.5 1965.3 1072.4 1967.7 1071.1C1970.7 1069.6 1973.3 1069.0 1974.6 1066.0C1978.8 1055.9 1977.5 1043.6 1981.4 1038.4C1983.0 1036.3 1985.5 1047.8 1988.2 1047.7C1991.0 1047.7 1992.3 1041.9 1995.0 1038.1C1997.7 1034.4 2001.5 1033.4 2001.8 1028.8C2006.9 963.3 2005.6 871.1 2008.7 863.0C2011.1 856.7 2010.8 941.2 2015.5 992.7C2016.2 1000.7 2020.7 1003.8 2022.3 1011.6C2026.2 1031.3 2026.7 1041.5 2029.1 1061.5C2032.1 1086.2 2031.6 1099.1 2035.9 1123.4C2037.1 1130.0 2041.1 1141.6 2042.8 1138.9C2046.5 1132.7 2048.0 1116.3 2049.6 1101.1C2053.5 1063.4 2053.0 1015.6 2056.4 1006.5C2058.5 1000.9 2060.1 1061.0 2063.2 1064.2C2065.6 1066.7 2068.8 1038.4 2070.0 1020.9C2074.2 963.3 2074.0 880.2 2076.9 876.4C2079.4 873.1 2079.9 952.5 2083.7 1003.0C2085.4 1026.1 2088.0 1037.5 2090.5 1060.5C2093.4 1087.3 2094.4 1126.0 2097.3 1127.5C2099.9 1128.9 2100.9 1072.2 2104.1 1067.7C2106.4 1064.6 2109.0 1113.5 2111.0 1108.6C2114.5 1099.6 2112.9 1057.7 2117.8 1032.9C2118.4 1029.9 2123.5 1035.7 2124.6 1039.1C2129.0 1053.3 2129.8 1083.5 2131.4 1077.0C2135.3 1061.2 2135.4 985.1 2138.2 983.4C2140.8 981.9 2141.1 1053.7 2145.1 1069.1C2146.6 1075.0 2148.6 1049.5 2151.9 1036.7C2154.1 1028.2 2157.6 1010.3 2158.7 1015.7C2163.1 1038.7 2161.3 1087.7 2165.5 1107.9C2166.8 1113.9 2169.8 1092.1 2172.3 1081.4C2175.3 1069.0 2176.1 1062.6 2179.2 1050.1C2181.6 1040.2 2183.6 1023.8 2186.0 1025.4C2189.1 1027.4 2190.1 1059.4 2192.8 1059.1C2195.6 1058.7 2198.6 1038.0 2199.6 1023.7C2204.0 962.2 2204.0 863.9 2206.4 869.5C2209.4 876.3 2209.7 1033.3 2213.3 1054.6C2215.2 1066.4 2217.8 946.2 2220.1 952.4C2223.2 960.9 2221.9 1044.6 2226.9 1091.4C2227.4 1095.8 2230.6 1081.4 2233.7 1080.4C2236.1 1079.7 2239.1 1083.8 2240.5 1087.3C2244.5 1096.9 2246.3 1119.6 2247.4 1113.1C2251.7 1087.2 2250.1 1027.7 2254.2 1006.5C2255.6 999.3 2258.7 1027.6 2261.0 1041.9C2264.2 1061.8 2266.3 1100.7 2267.8 1091.8C2271.8 1068.6 2269.7 1004.8 2274.6 961.7C2275.1 957.4 2280.6 967.9 2281.5 973.1C2286.0 998.9 2284.3 1027.2 2288.3 1039.1C2289.8 1043.7 2293.9 1008.5 2295.1 1014.4C2299.4 1035.1 2298.0 1089.1 2301.9 1105.5C2303.4 1111.8 2305.8 1084.9 2308.7 1071.1C2311.3 1059.0 2313.4 1038.3 2315.6 1040.9C2318.8 1044.7 2321.1 1097.1 2322.4 1087.3C2326.5 1056.2 2326.5 937.7 2329.2 938.7C2332.0 939.7 2332.3 1069.0 2336.0 1092.5C2337.7 1103.0 2340.9 1051.2 2342.8 1023.7C2346.4 972.8 2347.4 887.5 2349.7 896.4C2352.9 909.1 2351.8 1026.3 2356.5 1077.7C2357.3 1086.5 2360.8 1046.1 2363.3 1047.0C2366.2 1048.2 2365.8 1069.3 2370.1 1082.8C2371.3 1086.5 2376.3 1093.2 2376.9 1090.0C2381.7 1067.2 2380.0 1028.6 2383.8 1017.8C2385.5 1012.8 2388.1 1051.7 2390.6 1050.5C2393.6 1049.0 2395.3 1006.9 2397.4 1010.9C2400.8 1017.5 2401.5 1076.8 2404.2 1077.0C2406.9 1077.1 2409.2 1037.8 2411.0 1011.6C2414.7 958.3 2415.6 869.2 2417.9 878.1C2421.0 890.6 2419.8 1006.9 2424.7 1064.9C2425.3 1072.4 2429.9 1038.0 2431.5 1041.9C2435.3 1051.0 2433.7 1081.5 2438.3 1097.6C2439.2 1100.6 2442.4 1092.9 2445.1 1089.7C2447.9 1086.4 2449.7 1085.1 2452.0 1081.4C2455.2 1076.3 2455.0 1071.5 2458.8 1067.7C2460.5 1066.0 2465.5 1065.0 2465.6 1067.7C2471.0 1203.7 2469.9 1423.8 2472.4 1414.5C2475.3 1403.9 2474.4 1142.7 2479.2 1017.8C2479.8 1002.8 2483.2 1064.1 2486.1 1064.9C2488.7 1065.7 2489.6 1025.7 2492.9 1021.9C2495.0 1019.5 2497.3 1038.4 2499.7 1049.5C2502.7 1063.4 2502.3 1071.2 2506.5 1084.5C2507.8 1088.4 2510.3 1089.7 2513.3 1092.5C2515.7 1094.6 2519.3 1099.4 2520.2 1096.9C2524.8 1083.2 2524.3 1051.5 2527.0 1051.9C2529.8 1052.2 2531.0 1097.7 2533.8 1098.5C2536.4 1099.3 2540.1 1073.1 2540.6 1055.9C2545.5 896.7 2544.8 650.8 2547.4 657.4C2550.3 664.5 2549.9 988.5 2554.3 1090.0C2555.4 1116.5 2558.1 981.1 2561.1 977.3C2563.6 974.1 2564.0 1055.4 2567.9 1072.6C2569.4 1079.1 2571.9 1051.0 2574.7 1036.6C2577.3 1023.2 2578.7 1004.0 2581.5 1003.2C2584.1 1002.5 2585.6 1032.6 2588.4 1032.9C2591.0 1033.2 2591.0 1011.5 2595.2 1004.7C2596.5 1002.6 2600.6 1007.4 2602.0 1010.7C2606.1 1020.2 2607.6 1042.5 2608.8 1036.6C2613.0 1016.4 2613.3 939.6 2615.6 945.4C2618.8 953.3 2617.7 1033.8 2622.5 1070.7C2623.2 1076.5 2626.3 1059.5 2629.3 1052.2C2631.8 1045.9 2634.6 1033.3 2636.1 1036.6C2640.1 1045.6 2639.3 1076.6 2642.9 1083.0C2644.7 1086.1 2645.5 1067.4 2649.7 1060.3C2651.0 1058.3 2656.3 1057.7 2656.6 1060.3C2661.8 1125.3 2661.1 1241.2 2663.4 1229.3C2666.6 1212.4 2666.1 1038.2 2670.2 988.4C2671.5 972.5 2675.8 1082.6 2677.0 1065.2C2681.3 1002.2 2681.1 786.5 2683.8 787.3C2686.6 788.0 2685.6 970.5 2690.7 1068.9C2691.0 1075.8 2694.0 1052.9 2697.5 1050.3C2699.4 1048.9 2702.9 1054.8 2704.3 1058.9C2708.3 1070.1 2707.3 1083.3 2711.1 1088.5C2712.8 1090.7 2716.8 1082.4 2717.9 1077.4C2722.2 1058.7 2722.5 1025.7 2724.8 1029.2C2728.0 1034.2 2729.4 1104.4 2731.6 1098.5C2734.9 1089.6 2735.7 1034.7 2738.4 992.1 L2738.4 1443.0 L692.4 1443.0 Z" fill="rgba(103,234,71,0.19)"/><path d="M692.4 1024.7C695.1 1019.5 698.0 1017.3 699.2 1011.6C703.5 991.7 704.3 953.0 706.0 960.7C709.8 977.7 708.4 1028.7 712.9 1073.5C713.8 1083.1 717.6 1099.0 719.7 1096.6C723.1 1092.7 721.9 1069.9 726.5 1057.7C727.4 1055.4 732.3 1062.6 733.3 1060.5C737.7 1051.3 737.8 1027.8 740.1 1029.5C743.2 1031.7 743.7 1066.6 747.0 1070.1C749.1 1072.4 751.5 1054.5 753.8 1044.0C757.0 1028.8 757.7 1006.7 760.6 1005.8C763.2 1004.9 764.2 1036.9 767.4 1039.5C769.6 1041.3 771.7 1025.9 774.2 1016.8C777.1 1006.4 779.5 985.8 781.1 990.6C785.0 1003.1 782.9 1034.4 787.9 1060.1C788.4 1062.7 794.0 1058.7 794.7 1061.2C799.4 1076.8 798.4 1087.6 801.5 1105.2C803.8 1118.2 806.1 1139.8 808.3 1137.5C811.5 1134.3 812.5 1109.9 815.2 1091.4C817.9 1072.6 817.9 1054.2 822.0 1044.3C823.3 1041.0 826.4 1052.6 828.8 1058.4C831.8 1065.7 834.4 1081.4 835.6 1077.0C839.8 1062.2 839.8 1037.2 842.4 1010.6C845.3 981.4 846.2 941.7 849.3 937.7C851.6 934.6 852.2 970.9 856.1 992.7C857.7 1001.6 861.1 1005.5 862.9 1014.4C866.5 1032.2 865.7 1041.8 869.7 1059.4C871.2 1065.7 874.5 1076.0 876.5 1074.2C880.0 1071.1 880.6 1047.3 883.4 1047.0C886.0 1046.8 888.4 1076.7 890.2 1072.8C893.9 1064.6 894.4 1016.0 897.0 1016.8C899.8 1017.6 900.3 1053.0 903.8 1077.0C905.7 1089.9 909.0 1114.4 910.6 1109.0C914.5 1095.8 914.8 1061.9 917.5 1030.5C920.3 996.4 921.7 943.6 924.3 945.2C927.1 947.0 927.1 1021.5 931.1 1039.1C932.6 1045.6 934.4 1009.7 937.9 1005.4C939.8 1003.1 942.8 1015.5 944.7 1022.6C948.2 1035.3 947.9 1050.0 951.6 1055.0C953.3 1057.3 956.3 1046.7 958.4 1040.9C961.7 1031.5 962.1 1018.1 965.2 1016.8C967.6 1015.8 971.1 1040.3 972.0 1035.0C976.6 1008.9 976.2 937.0 978.8 938.3C981.7 939.8 981.4 1000.7 985.7 1041.9C986.9 1053.4 989.8 1058.8 992.5 1070.1C995.3 1081.8 996.9 1100.8 999.3 1099.3C1002.4 1097.4 1005.3 1076.8 1006.1 1061.5C1010.8 970.5 1010.5 823.1 1012.9 833.4C1016.0 846.4 1015.5 1056.3 1019.8 1120.0C1021.0 1138.2 1022.8 1050.7 1026.6 1038.1C1028.3 1032.4 1032.4 1083.5 1033.4 1074.2C1037.8 1033.9 1036.1 947.3 1040.2 914.3C1041.5 903.7 1044.9 944.7 1047.0 965.2C1050.4 997.0 1051.0 1043.8 1053.9 1045.0C1056.5 1046.1 1057.9 971.5 1060.7 971.0C1063.4 970.5 1064.1 1035.5 1067.5 1042.6C1069.6 1046.9 1070.4 1016.4 1074.3 999.6C1075.9 992.9 1079.8 980.1 1081.1 983.8C1085.3 994.9 1084.1 1015.6 1088.0 1036.4C1089.6 1045.0 1091.5 1055.5 1094.8 1057.4C1097.0 1058.6 1099.4 1043.1 1101.6 1044.3C1104.9 1046.1 1106.7 1068.3 1108.4 1064.9C1112.2 1057.6 1113.8 1036.6 1115.2 1017.5C1119.2 966.0 1119.7 882.3 1122.1 888.5C1125.1 896.2 1124.2 1005.8 1128.9 1052.2C1129.7 1060.2 1132.2 1028.0 1135.7 1024.7C1137.7 1022.8 1140.9 1033.0 1142.5 1039.1C1146.3 1053.5 1147.0 1078.2 1149.3 1075.9C1152.5 1072.9 1152.7 1045.9 1156.2 1026.1C1158.1 1014.9 1159.8 1000.6 1163.0 998.5C1165.2 997.1 1167.3 1018.2 1169.8 1017.5C1172.8 1016.6 1172.9 998.1 1176.6 994.4C1178.4 992.6 1181.2 1004.7 1183.4 1003.7C1186.7 1002.2 1189.3 983.7 1190.3 988.2C1194.8 1009.6 1193.0 1036.6 1197.1 1068.4C1198.4 1078.9 1201.0 1083.9 1203.9 1094.2C1206.4 1102.9 1207.3 1113.2 1210.7 1115.8C1212.7 1117.4 1216.4 1109.6 1217.5 1104.5C1221.8 1085.5 1219.7 1070.7 1224.4 1055.6C1225.1 1053.1 1229.6 1062.2 1231.2 1060.5C1235.1 1056.0 1235.1 1040.8 1238.0 1040.2C1240.5 1039.6 1242.9 1059.8 1244.8 1057.4C1248.4 1052.8 1250.0 1036.7 1251.6 1022.6C1255.4 991.3 1255.8 943.0 1258.5 943.8C1261.3 944.8 1262.2 1022.7 1265.3 1027.1C1267.6 1030.5 1270.1 956.4 1272.1 963.5C1275.6 975.9 1274.1 1040.2 1278.9 1075.9C1279.5 1080.3 1284.0 1061.8 1285.7 1063.9C1289.4 1068.2 1288.2 1081.9 1292.6 1091.8C1293.7 1094.3 1297.4 1092.8 1299.4 1094.9C1302.9 1098.6 1305.0 1109.3 1306.2 1106.2C1310.5 1095.0 1308.4 1077.0 1313.0 1059.1C1313.9 1055.6 1319.0 1050.1 1319.8 1052.9C1324.5 1069.0 1323.3 1100.8 1326.7 1106.2C1328.7 1109.5 1329.0 1084.4 1333.5 1074.6C1334.5 1072.4 1337.7 1075.2 1340.3 1076.3C1343.2 1077.5 1344.3 1079.0 1347.1 1080.4C1349.7 1081.7 1351.3 1081.7 1353.9 1082.8C1356.7 1084.0 1359.3 1083.8 1360.8 1086.3C1364.7 1092.9 1365.9 1108.8 1367.6 1105.5C1371.4 1098.2 1371.2 1063.3 1374.4 1059.8C1376.6 1057.4 1379.7 1096.2 1381.2 1090.7C1385.1 1077.2 1385.9 1005.9 1388.0 1012.3C1391.3 1022.0 1390.9 1109.8 1394.9 1131.0C1396.4 1139.2 1399.2 1084.1 1401.7 1085.6C1404.6 1087.3 1404.1 1125.3 1408.5 1138.9C1409.6 1142.2 1414.5 1132.9 1415.3 1127.9C1420.0 1098.3 1418.6 1061.7 1422.1 1052.2C1424.0 1047.2 1427.2 1097.4 1429.0 1091.8C1432.6 1080.2 1433.1 1008.6 1435.8 1009.2C1438.6 1009.8 1440.3 1100.5 1442.6 1094.9C1445.8 1087.0 1445.5 996.0 1449.4 975.5C1451.0 967.3 1453.9 1003.9 1456.2 1023.0C1459.4 1048.4 1460.6 1089.3 1463.1 1086.6C1466.1 1083.3 1466.6 1014.2 1469.9 1008.2C1472.1 1004.1 1472.0 1044.2 1476.7 1061.2C1477.4 1063.7 1480.6 1057.9 1483.5 1057.0C1486.0 1056.3 1488.8 1058.8 1490.3 1057.0C1494.3 1052.4 1495.0 1039.4 1497.2 1040.9C1500.4 1043.0 1499.7 1058.4 1504.0 1066.0C1505.1 1068.0 1509.7 1067.2 1510.8 1064.9C1515.2 1056.1 1513.3 1047.5 1517.6 1038.4C1518.7 1036.1 1523.9 1039.0 1524.4 1036.4C1529.3 1013.4 1528.4 975.3 1531.3 974.5C1533.9 973.7 1534.4 1009.3 1538.1 1032.3C1539.9 1043.6 1542.7 1062.6 1544.9 1060.1C1548.2 1056.4 1548.9 1017.2 1551.7 1016.8C1554.4 1016.4 1555.1 1053.4 1558.5 1058.1C1560.5 1060.7 1562.4 1035.9 1565.4 1035.0C1567.8 1034.3 1568.1 1047.8 1572.2 1053.9C1573.6 1056.1 1577.8 1053.4 1579.0 1055.6C1583.3 1063.7 1582.8 1078.4 1585.8 1079.7C1588.2 1080.8 1591.7 1069.2 1592.6 1061.5C1597.2 1022.3 1596.4 966.6 1599.5 962.4C1601.9 959.0 1602.0 1010.8 1606.3 1042.6C1607.5 1051.4 1609.3 1056.0 1613.1 1063.9C1614.7 1067.3 1617.0 1070.4 1619.9 1070.8C1622.5 1071.1 1625.6 1068.7 1626.7 1065.6C1631.1 1054.0 1631.2 1032.3 1633.6 1034.0C1636.6 1036.1 1636.1 1065.2 1640.4 1075.3C1641.6 1078.0 1645.9 1063.3 1647.2 1066.0C1651.4 1074.8 1651.0 1088.7 1654.0 1103.8C1656.5 1116.2 1659.6 1141.6 1660.8 1134.8C1665.0 1112.5 1663.8 1047.9 1667.7 1031.2C1669.3 1024.1 1671.5 1057.7 1674.5 1075.3C1677.0 1090.0 1677.9 1108.2 1681.3 1112.1C1683.3 1114.4 1685.7 1099.4 1688.1 1090.7C1691.1 1080.1 1691.2 1068.1 1694.9 1063.9C1696.7 1061.9 1701.0 1070.1 1701.8 1075.3C1706.5 1108.8 1706.4 1168.0 1708.6 1160.8C1711.9 1149.8 1711.8 1045.9 1715.4 1029.8C1717.3 1021.3 1720.1 1105.5 1722.2 1099.3C1725.6 1089.6 1726.4 987.8 1729.0 989.9C1731.9 992.3 1732.1 1092.8 1735.9 1110.7C1737.6 1118.9 1739.5 1077.4 1742.7 1055.3C1744.9 1039.8 1747.9 1010.5 1749.5 1016.8C1753.3 1031.5 1752.4 1091.5 1756.3 1107.9C1757.8 1114.2 1760.6 1072.6 1763.1 1073.5C1766.1 1074.6 1766.7 1110.0 1770.0 1113.1C1772.2 1115.2 1774.3 1097.3 1776.8 1086.6C1779.8 1073.9 1780.7 1055.6 1783.6 1054.6C1786.1 1053.8 1789.3 1088.9 1790.4 1082.1C1794.8 1055.5 1794.7 967.5 1797.2 971.0C1800.2 975.1 1800.5 1085.9 1804.1 1101.1C1806.0 1109.4 1807.8 1033.9 1810.9 1029.8C1813.2 1026.8 1813.8 1062.1 1817.7 1083.2C1819.2 1091.3 1821.7 1102.4 1824.5 1102.8C1827.1 1103.1 1827.8 1087.6 1831.3 1084.9C1833.2 1083.5 1837.1 1095.0 1838.2 1092.5C1842.5 1082.3 1841.4 1058.0 1845.0 1052.9C1846.9 1050.2 1850.7 1077.8 1851.8 1072.8C1856.1 1054.1 1854.6 1008.6 1858.6 993.7C1860.1 988.3 1864.3 1010.4 1865.4 1021.9C1869.8 1065.3 1868.8 1118.9 1872.3 1131.0C1874.2 1137.9 1876.3 1069.9 1879.1 1069.4C1881.8 1068.9 1881.7 1105.3 1885.9 1128.6C1887.1 1135.2 1888.8 1139.6 1892.7 1144.1C1894.3 1145.8 1898.7 1146.3 1899.5 1144.1C1904.2 1130.8 1903.4 1120.7 1906.4 1105.2C1908.9 1092.1 1908.7 1084.0 1913.2 1072.5C1914.2 1070.0 1919.4 1072.8 1920.0 1070.1C1924.9 1048.0 1923.0 1020.6 1926.8 1010.6C1928.4 1006.4 1932.8 1041.5 1933.6 1034.7C1938.2 998.9 1937.6 906.8 1940.5 903.9C1943.0 901.3 1943.1 974.3 1947.3 1020.9C1948.6 1035.3 1950.5 1042.4 1954.1 1056.3C1955.9 1063.2 1957.0 1068.6 1960.9 1072.8C1962.5 1074.5 1965.3 1072.4 1967.7 1071.1C1970.7 1069.6 1973.3 1069.0 1974.6 1066.0C1978.8 1055.9 1977.5 1043.6 1981.4 1038.4C1983.0 1036.3 1985.5 1047.8 1988.2 1047.7C1991.0 1047.7 1992.3 1041.9 1995.0 1038.1C1997.7 1034.4 2001.5 1033.4 2001.8 1028.8C2006.9 963.3 2005.6 871.1 2008.7 863.0C2011.1 856.7 2010.8 941.2 2015.5 992.7C2016.2 1000.7 2020.7 1003.8 2022.3 1011.6C2026.2 1031.3 2026.7 1041.5 2029.1 1061.5C2032.1 1086.2 2031.6 1099.1 2035.9 1123.4C2037.1 1130.0 2041.1 1141.6 2042.8 1138.9C2046.5 1132.7 2048.0 1116.3 2049.6 1101.1C2053.5 1063.4 2053.0 1015.6 2056.4 1006.5C2058.5 1000.9 2060.1 1061.0 2063.2 1064.2C2065.6 1066.7 2068.8 1038.4 2070.0 1020.9C2074.2 963.3 2074.0 880.2 2076.9 876.4C2079.4 873.1 2079.9 952.5 2083.7 1003.0C2085.4 1026.1 2088.0 1037.5 2090.5 1060.5C2093.4 1087.3 2094.4 1126.0 2097.3 1127.5C2099.9 1128.9 2100.9 1072.2 2104.1 1067.7C2106.4 1064.6 2109.0 1113.5 2111.0 1108.6C2114.5 1099.6 2112.9 1057.7 2117.8 1032.9C2118.4 1029.9 2123.5 1035.7 2124.6 1039.1C2129.0 1053.3 2129.8 1083.5 2131.4 1077.0C2135.3 1061.2 2135.4 985.1 2138.2 983.4C2140.8 981.9 2141.1 1053.7 2145.1 1069.1C2146.6 1075.0 2148.6 1049.5 2151.9 1036.7C2154.1 1028.2 2157.6 1010.3 2158.7 1015.7C2163.1 1038.7 2161.3 1087.7 2165.5 1107.9C2166.8 1113.9 2169.8 1092.1 2172.3 1081.4C2175.3 1069.0 2176.1 1062.6 2179.2 1050.1C2181.6 1040.2 2183.6 1023.8 2186.0 1025.4C2189.1 1027.4 2190.1 1059.4 2192.8 1059.1C2195.6 1058.7 2198.6 1038.0 2199.6 1023.7C2204.0 962.2 2204.0 863.9 2206.4 869.5C2209.4 876.3 2209.7 1033.3 2213.3 1054.6C2215.2 1066.4 2217.8 946.2 2220.1 952.4C2223.2 960.9 2221.9 1044.6 2226.9 1091.4C2227.4 1095.8 2230.6 1081.4 2233.7 1080.4C2236.1 1079.7 2239.1 1083.8 2240.5 1087.3C2244.5 1096.9 2246.3 1119.6 2247.4 1113.1C2251.7 1087.2 2250.1 1027.7 2254.2 1006.5C2255.6 999.3 2258.7 1027.6 2261.0 1041.9C2264.2 1061.8 2266.3 1100.7 2267.8 1091.8C2271.8 1068.6 2269.7 1004.8 2274.6 961.7C2275.1 957.4 2280.6 967.9 2281.5 973.1C2286.0 998.9 2284.3 1027.2 2288.3 1039.1C2289.8 1043.7 2293.9 1008.5 2295.1 1014.4C2299.4 1035.1 2298.0 1089.1 2301.9 1105.5C2303.4 1111.8 2305.8 1084.9 2308.7 1071.1C2311.3 1059.0 2313.4 1038.3 2315.6 1040.9C2318.8 1044.7 2321.1 1097.1 2322.4 1087.3C2326.5 1056.2 2326.5 937.7 2329.2 938.7C2332.0 939.7 2332.3 1069.0 2336.0 1092.5C2337.7 1103.0 2340.9 1051.2 2342.8 1023.7C2346.4 972.8 2347.4 887.5 2349.7 896.4C2352.9 909.1 2351.8 1026.3 2356.5 1077.7C2357.3 1086.5 2360.8 1046.1 2363.3 1047.0C2366.2 1048.2 2365.8 1069.3 2370.1 1082.8C2371.3 1086.5 2376.3 1093.2 2376.9 1090.0C2381.7 1067.2 2380.0 1028.6 2383.8 1017.8C2385.5 1012.8 2388.1 1051.7 2390.6 1050.5C2393.6 1049.0 2395.3 1006.9 2397.4 1010.9C2400.8 1017.5 2401.5 1076.8 2404.2 1077.0C2406.9 1077.1 2409.2 1037.8 2411.0 1011.6C2414.7 958.3 2415.6 869.2 2417.9 878.1C2421.0 890.6 2419.8 1006.9 2424.7 1064.9C2425.3 1072.4 2429.9 1038.0 2431.5 1041.9C2435.3 1051.0 2433.7 1081.5 2438.3 1097.6C2439.2 1100.6 2442.4 1092.9 2445.1 1089.7C2447.9 1086.4 2449.7 1085.1 2452.0 1081.4C2455.2 1076.3 2455.0 1071.5 2458.8 1067.7C2460.5 1066.0 2465.5 1065.0 2465.6 1067.7C2471.0 1203.7 2469.9 1423.8 2472.4 1414.5C2475.3 1403.9 2474.4 1142.7 2479.2 1017.8C2479.8 1002.8 2483.2 1064.1 2486.1 1064.9C2488.7 1065.7 2489.6 1025.7 2492.9 1021.9C2495.0 1019.5 2497.3 1038.4 2499.7 1049.5C2502.7 1063.4 2502.3 1071.2 2506.5 1084.5C2507.8 1088.4 2510.3 1089.7 2513.3 1092.5C2515.7 1094.6 2519.3 1099.4 2520.2 1096.9C2524.8 1083.2 2524.3 1051.5 2527.0 1051.9C2529.8 1052.2 2531.0 1097.7 2533.8 1098.5C2536.4 1099.3 2540.1 1073.1 2540.6 1055.9C2545.5 896.7 2544.8 650.8 2547.4 657.4C2550.3 664.5 2549.9 988.5 2554.3 1090.0C2555.4 1116.5 2558.1 981.1 2561.1 977.3C2563.6 974.1 2564.0 1055.4 2567.9 1072.6C2569.4 1079.1 2571.9 1051.0 2574.7 1036.6C2577.3 1023.2 2578.7 1004.0 2581.5 1003.2C2584.1 1002.5 2585.6 1032.6 2588.4 1032.9C2591.0 1033.2 2591.0 1011.5 2595.2 1004.7C2596.5 1002.6 2600.6 1007.4 2602.0 1010.7C2606.1 1020.2 2607.6 1042.5 2608.8 1036.6C2613.0 1016.4 2613.3 939.6 2615.6 945.4C2618.8 953.3 2617.7 1033.8 2622.5 1070.7C2623.2 1076.5 2626.3 1059.5 2629.3 1052.2C2631.8 1045.9 2634.6 1033.3 2636.1 1036.6C2640.1 1045.6 2639.3 1076.6 2642.9 1083.0C2644.7 1086.1 2645.5 1067.4 2649.7 1060.3C2651.0 1058.3 2656.3 1057.7 2656.6 1060.3C2661.8 1125.3 2661.1 1241.2 2663.4 1229.3C2666.6 1212.4 2666.1 1038.2 2670.2 988.4C2671.5 972.5 2675.8 1082.6 2677.0 1065.2C2681.3 1002.2 2681.1 786.5 2683.8 787.3C2686.6 788.0 2685.6 970.5 2690.7 1068.9C2691.0 1075.8 2694.0 1052.9 2697.5 1050.3C2699.4 1048.9 2702.9 1054.8 2704.3 1058.9C2708.3 1070.1 2707.3 1083.3 2711.1 1088.5C2712.8 1090.7 2716.8 1082.4 2717.9 1077.4C2722.2 1058.7 2722.5 1025.7 2724.8 1029.2C2728.0 1034.2 2729.4 1104.4 2731.6 1098.5C2734.9 1089.6 2735.7 1034.7 2738.4 992.1 L2738.4 1443.0 L692.4 1443.0 Z" fill="rgba(103,234,71,0.19)"/><path d="M692.4 1275.8C695.1 1266.5 697.1 1262.0 699.2 1252.6C702.6 1237.8 704.0 1211.0 706.0 1215.1C709.5 1222.2 708.6 1254.7 712.9 1280.5C714.1 1288.0 715.7 1293.1 719.7 1298.3C721.1 1300.2 725.2 1300.3 726.5 1298.3C730.7 1291.6 730.8 1285.3 733.3 1276.5C736.3 1266.3 737.9 1249.0 740.1 1250.8C743.3 1253.4 743.0 1280.6 747.0 1287.6C748.5 1290.3 750.3 1279.3 753.8 1275.1C755.7 1272.8 759.2 1273.8 760.6 1271.2C764.7 1263.1 763.8 1251.9 767.4 1248.3C769.2 1246.6 773.4 1261.3 774.2 1258.0C778.8 1240.2 778.9 1190.1 781.1 1195.5C784.4 1203.7 783.5 1268.5 787.9 1291.9C789.0 1297.8 791.3 1271.2 794.7 1268.7C796.8 1267.2 799.1 1276.5 801.5 1281.9C804.5 1288.6 805.0 1297.3 808.3 1299.0C810.5 1300.2 813.7 1293.6 815.2 1289.0C819.1 1276.9 817.8 1265.0 822.0 1257.3C823.2 1255.0 826.4 1264.7 828.8 1264.0C831.9 1263.1 833.7 1251.7 835.6 1253.3C839.2 1256.4 841.4 1281.6 842.4 1275.8C846.8 1252.0 845.8 1189.7 849.3 1179.4C851.3 1173.4 851.2 1215.9 856.1 1235.1C856.7 1237.5 862.3 1230.9 862.9 1233.3C867.7 1252.5 865.2 1267.5 869.7 1289.0C870.6 1293.5 874.7 1300.0 876.5 1298.3C880.2 1295.0 881.2 1274.5 883.4 1276.5C886.7 1279.8 887.2 1310.3 890.2 1311.5C892.7 1312.6 892.9 1288.6 897.0 1282.3C898.4 1280.1 901.7 1286.6 903.8 1290.1C907.1 1295.5 909.4 1308.0 910.6 1304.4C914.9 1291.6 914.7 1271.2 917.5 1249.0C920.1 1227.6 922.0 1192.3 924.3 1195.5C927.4 1199.7 926.9 1251.3 931.1 1267.6C932.3 1272.3 933.9 1254.7 937.9 1248.0C939.4 1245.5 943.7 1242.6 944.7 1244.8C949.1 1253.5 947.1 1264.5 951.6 1275.1C952.6 1277.6 955.7 1277.6 958.4 1277.6C961.1 1277.6 963.5 1277.2 965.2 1275.1C969.0 1270.4 971.2 1266.8 972.0 1260.5C976.7 1221.8 976.3 1159.6 978.8 1162.6C981.8 1166.1 981.0 1231.4 985.7 1276.5C986.4 1284.1 988.6 1288.2 992.5 1294.4C994.1 1296.9 998.0 1300.2 999.3 1298.3C1003.4 1292.5 1003.1 1276.3 1006.1 1275.1C1008.5 1274.2 1009.2 1286.7 1012.9 1293.0C1014.6 1295.8 1018.8 1300.4 1019.8 1298.0C1024.2 1287.1 1023.5 1261.7 1026.6 1259.8C1029.0 1258.2 1032.3 1296.9 1033.4 1289.4C1037.8 1258.6 1035.8 1195.4 1040.2 1164.0C1041.3 1156.7 1045.6 1181.0 1047.0 1192.6C1051.1 1225.4 1049.0 1248.8 1053.9 1275.1C1054.5 1278.5 1058.1 1266.6 1060.7 1266.9C1063.5 1267.2 1066.2 1279.1 1067.5 1276.5C1071.6 1268.4 1069.7 1252.4 1074.3 1240.1C1075.2 1237.8 1080.5 1237.7 1081.1 1240.1C1086.0 1258.4 1083.4 1276.9 1088.0 1291.9C1088.8 1294.7 1092.5 1288.0 1094.8 1284.8C1098.0 1280.1 1099.4 1271.1 1101.6 1272.3C1104.8 1274.0 1106.2 1293.4 1108.4 1291.9C1111.6 1289.8 1114.0 1275.0 1115.2 1263.3C1119.5 1221.7 1119.5 1156.3 1122.1 1158.7C1124.9 1161.3 1123.7 1230.9 1128.9 1275.8C1129.2 1278.5 1132.9 1277.3 1135.7 1277.6C1138.4 1278.0 1140.4 1276.3 1142.5 1277.6C1145.8 1279.6 1147.0 1286.6 1149.3 1285.8C1152.5 1284.8 1153.1 1277.9 1156.2 1273.0C1158.6 1268.9 1160.5 1262.8 1163.0 1263.3C1166.0 1264.0 1168.8 1279.4 1169.8 1275.8C1174.2 1260.6 1173.3 1221.6 1176.6 1216.2C1178.7 1212.7 1181.2 1256.2 1183.4 1253.7C1186.6 1250.1 1188.2 1195.3 1190.3 1200.8C1193.7 1210.3 1192.3 1262.8 1197.1 1291.2C1197.7 1295.0 1201.8 1279.9 1203.9 1281.2C1207.3 1283.3 1207.3 1297.5 1210.7 1299.8C1212.8 1301.1 1216.0 1294.5 1217.5 1290.1C1221.4 1279.2 1221.6 1261.5 1224.4 1261.5C1227.1 1261.6 1227.1 1283.8 1231.2 1290.5C1232.5 1292.6 1235.7 1286.7 1238.0 1283.7C1241.2 1279.5 1243.3 1277.3 1244.8 1272.3C1248.8 1258.9 1250.1 1251.6 1251.6 1237.6C1255.6 1201.3 1256.3 1138.4 1258.5 1146.5C1261.8 1159.4 1261.3 1264.5 1265.3 1290.1C1266.8 1300.0 1269.4 1235.1 1272.1 1235.1C1274.8 1235.1 1275.9 1287.4 1278.9 1290.1C1281.3 1292.3 1283.5 1244.0 1285.7 1247.3C1289.0 1251.9 1288.6 1298.0 1292.6 1309.8C1294.0 1314.1 1296.1 1289.8 1299.4 1287.6C1301.5 1286.2 1304.6 1303.4 1306.2 1300.8C1310.1 1294.7 1310.1 1279.8 1313.0 1265.8C1315.6 1253.5 1318.3 1229.7 1319.8 1235.1C1323.7 1248.3 1322.2 1292.3 1326.7 1312.3C1327.7 1316.8 1330.7 1296.3 1333.5 1296.2C1336.2 1296.0 1337.5 1311.5 1340.3 1311.5C1343.0 1311.6 1343.3 1300.6 1347.1 1296.5C1348.7 1294.9 1351.9 1298.5 1353.9 1297.3C1357.3 1295.2 1357.4 1291.0 1360.8 1288.3C1362.9 1286.7 1365.2 1285.8 1367.6 1286.5C1370.7 1287.5 1371.8 1293.0 1374.4 1292.6C1377.3 1292.2 1380.7 1288.8 1381.2 1284.8C1386.2 1242.8 1385.7 1172.1 1388.0 1177.6C1391.1 1184.7 1389.7 1264.1 1394.9 1316.2C1395.1 1318.8 1398.9 1315.0 1401.7 1314.4C1404.4 1313.8 1405.8 1313.6 1408.5 1313.3C1411.2 1313.1 1414.6 1315.7 1415.3 1313.3C1420.1 1297.8 1419.1 1270.8 1422.1 1268.7C1424.5 1267.0 1426.7 1306.1 1429.0 1303.7C1432.1 1300.4 1432.2 1260.4 1435.8 1254.4C1437.7 1251.1 1441.5 1287.0 1442.6 1280.5C1447.0 1253.8 1444.9 1200.7 1449.4 1171.2C1450.3 1165.3 1455.2 1183.3 1456.2 1191.9C1460.7 1229.4 1458.4 1259.0 1463.1 1286.5C1463.8 1291.1 1467.1 1272.4 1469.9 1272.3C1472.6 1272.1 1473.4 1284.3 1476.7 1285.8C1478.8 1286.8 1480.3 1280.4 1483.5 1278.7C1485.7 1277.5 1488.3 1277.3 1490.3 1278.7C1493.7 1280.9 1495.5 1289.5 1497.2 1287.6C1500.9 1283.4 1501.4 1262.7 1504.0 1263.3C1506.9 1264.0 1508.3 1292.0 1510.8 1290.8C1513.8 1289.4 1513.3 1265.6 1517.6 1256.9C1518.8 1254.6 1523.9 1266.4 1524.4 1263.3C1529.3 1237.9 1528.6 1184.6 1531.3 1185.8C1534.1 1187.2 1533.2 1237.3 1538.1 1269.8C1538.6 1273.3 1543.7 1278.1 1544.9 1275.8C1549.2 1267.4 1549.2 1242.2 1551.7 1243.0C1554.6 1243.9 1554.3 1270.9 1558.5 1280.1C1559.7 1282.6 1562.5 1272.6 1565.4 1272.3C1567.9 1272.0 1570.1 1275.6 1572.2 1278.7C1575.5 1283.5 1576.7 1292.9 1579.0 1291.9C1582.1 1290.6 1581.9 1279.6 1585.8 1273.0C1587.4 1270.3 1592.2 1271.8 1592.6 1268.7C1597.6 1237.5 1597.0 1183.8 1599.5 1187.2C1602.5 1191.4 1601.6 1258.1 1606.3 1287.6C1607.0 1292.4 1609.3 1277.5 1613.1 1273.0C1614.8 1271.0 1617.7 1272.7 1619.9 1271.2C1623.2 1268.9 1624.2 1263.0 1626.7 1263.3C1629.6 1263.7 1631.1 1268.9 1633.6 1273.0C1636.6 1277.9 1638.2 1280.5 1640.4 1285.8C1643.6 1293.7 1644.1 1305.0 1647.2 1306.2C1649.6 1307.1 1650.7 1292.9 1654.0 1291.2C1656.1 1290.1 1660.3 1302.4 1660.8 1299.0C1665.7 1270.8 1665.1 1210.5 1667.7 1212.2C1670.5 1214.1 1669.9 1281.4 1674.5 1308.0C1675.3 1313.0 1677.7 1297.3 1681.3 1291.2C1683.2 1288.0 1685.5 1287.4 1688.1 1284.8C1690.9 1282.0 1693.8 1281.3 1694.9 1277.6C1699.3 1263.1 1700.4 1231.5 1701.8 1239.4C1705.9 1263.2 1705.9 1357.5 1708.6 1356.9C1711.3 1356.3 1711.6 1256.0 1715.4 1236.5C1717.0 1228.2 1720.4 1294.7 1722.2 1287.6C1725.9 1273.2 1726.5 1180.3 1729.0 1183.0C1731.9 1186.0 1731.1 1266.0 1735.9 1301.9C1736.6 1307.2 1739.4 1291.9 1742.7 1285.8C1744.8 1281.9 1748.0 1274.7 1749.5 1276.9C1753.4 1282.6 1752.5 1300.5 1756.3 1305.5C1758.0 1307.6 1759.6 1297.2 1763.1 1294.8C1765.1 1293.4 1768.1 1294.4 1770.0 1296.2C1773.6 1299.7 1774.3 1308.6 1776.8 1308.0C1779.8 1307.3 1780.6 1293.6 1783.6 1293.0C1786.1 1292.5 1789.9 1309.6 1790.4 1305.1C1795.3 1266.7 1794.5 1186.7 1797.2 1185.8C1799.9 1185.0 1799.1 1262.8 1804.1 1300.8C1804.6 1304.8 1807.7 1291.9 1810.9 1290.8C1813.2 1290.1 1815.1 1293.9 1817.7 1296.2C1820.5 1298.6 1822.5 1299.5 1824.5 1302.6C1827.9 1307.8 1829.3 1318.5 1831.3 1316.9C1834.7 1314.2 1834.0 1298.1 1838.2 1291.9C1839.5 1289.9 1842.5 1297.0 1845.0 1296.5C1848.0 1296.0 1851.3 1293.2 1851.8 1289.4C1856.7 1252.5 1853.7 1226.4 1858.6 1194.7C1859.1 1191.4 1865.0 1198.0 1865.4 1201.9C1870.4 1243.8 1867.8 1281.6 1872.3 1309.0C1873.3 1315.2 1876.4 1285.8 1879.1 1285.8C1881.8 1285.8 1881.6 1301.9 1885.9 1309.0C1887.1 1311.1 1890.0 1308.8 1892.7 1308.7C1895.4 1308.6 1897.1 1309.6 1899.5 1308.7C1902.6 1307.6 1903.7 1305.7 1906.4 1303.7C1909.1 1301.6 1910.6 1300.7 1913.2 1298.3C1916.1 1295.7 1918.4 1294.7 1920.0 1291.2C1923.8 1282.8 1923.4 1277.4 1926.8 1268.7C1928.9 1263.4 1933.1 1261.8 1933.6 1256.2C1938.5 1206.1 1937.9 1126.5 1940.5 1129.4C1943.3 1132.5 1942.3 1215.1 1947.3 1271.2C1947.8 1276.6 1950.5 1279.2 1954.1 1283.0C1956.0 1285.0 1958.3 1285.7 1960.9 1285.5C1963.7 1285.3 1965.9 1280.6 1967.7 1281.9C1971.3 1284.3 1973.1 1297.6 1974.6 1294.8C1978.6 1286.9 1977.7 1261.0 1981.4 1255.1C1983.1 1252.3 1984.5 1266.5 1988.2 1273.0C1989.9 1276.0 1993.4 1280.4 1995.0 1278.7C1998.8 1274.8 2001.0 1267.3 2001.8 1259.0C2006.5 1210.8 2005.7 1141.1 2008.7 1137.6C2011.2 1134.5 2010.5 1201.5 2015.5 1242.6C2016.0 1246.8 2020.2 1247.1 2022.3 1250.8C2025.7 1256.9 2027.2 1260.2 2029.1 1266.9C2032.6 1279.1 2031.8 1286.3 2035.9 1298.0C2037.3 1301.7 2039.6 1304.4 2042.8 1305.5C2045.1 1306.3 2048.8 1305.3 2049.6 1302.6C2054.3 1285.9 2053.3 1259.3 2056.4 1256.9C2058.8 1255.0 2061.0 1294.6 2063.2 1291.9C2066.5 1287.9 2068.8 1261.0 2070.0 1240.1C2074.2 1171.2 2074.2 1064.8 2076.9 1067.6C2079.7 1070.5 2078.4 1181.7 2083.7 1254.4C2083.9 1257.1 2089.7 1253.7 2090.5 1256.2C2095.2 1270.6 2094.1 1293.6 2097.3 1296.5C2099.6 1298.6 2101.8 1267.1 2104.1 1268.7C2107.2 1270.7 2107.0 1298.6 2111.0 1305.5C2112.5 1308.2 2115.8 1298.0 2117.8 1292.6C2121.2 1283.3 2122.2 1267.5 2124.6 1268.7C2127.6 1270.1 2130.3 1306.4 2131.4 1299.0C2135.8 1270.4 2135.4 1180.4 2138.2 1178.7C2140.9 1177.1 2140.0 1251.0 2145.1 1290.8C2145.4 1293.8 2150.1 1288.6 2151.9 1285.8C2155.6 1280.2 2156.5 1268.5 2158.7 1269.8C2161.9 1271.6 2161.7 1289.2 2165.5 1293.7C2167.1 1295.6 2170.3 1289.4 2172.3 1285.8C2175.8 1279.8 2176.2 1270.4 2179.2 1269.8C2181.7 1269.2 2183.3 1283.2 2186.0 1283.0C2188.8 1282.8 2190.3 1274.5 2192.8 1268.7C2195.8 1261.7 2198.9 1258.4 2199.6 1250.8C2204.4 1197.0 2203.7 1115.3 2206.4 1115.1C2209.2 1114.9 2209.5 1196.0 2213.3 1249.8C2214.9 1273.8 2216.1 1298.2 2220.1 1309.8C2221.5 1313.9 2223.6 1290.9 2226.9 1289.0C2229.1 1287.8 2230.1 1297.7 2233.7 1301.9C2235.6 1304.1 2237.7 1304.4 2240.5 1305.1C2243.1 1305.7 2246.6 1307.5 2247.4 1305.1C2252.1 1290.0 2251.2 1263.3 2254.2 1261.5C2256.6 1260.1 2256.4 1285.2 2261.0 1297.3C2261.9 1299.5 2267.5 1299.8 2267.8 1297.3C2273.0 1257.0 2269.5 1229.1 2274.6 1190.1C2275.0 1187.4 2281.0 1190.2 2281.5 1193.0C2286.5 1223.0 2284.3 1257.0 2288.3 1272.3C2289.7 1277.7 2293.3 1240.7 2295.1 1244.8C2298.8 1253.3 2297.2 1285.2 2301.9 1303.7C2302.6 1306.5 2305.7 1299.2 2308.7 1298.0C2311.1 1297.0 2312.9 1297.9 2315.6 1298.3C2318.3 1298.8 2322.1 1302.7 2322.4 1300.1C2327.5 1258.2 2326.5 1186.8 2329.2 1187.0C2331.9 1187.2 2332.5 1288.6 2336.0 1301.2C2338.0 1308.3 2340.9 1262.2 2342.8 1236.2C2346.4 1187.9 2347.5 1104.4 2349.7 1115.2C2353.0 1132.0 2351.5 1243.1 2356.5 1305.2C2357.0 1311.6 2360.8 1286.0 2363.3 1286.6C2366.2 1287.4 2366.5 1305.6 2370.1 1308.8C2372.0 1310.5 2375.9 1303.4 2376.9 1298.7C2381.4 1278.9 2380.6 1250.4 2383.8 1247.5C2386.1 1245.3 2388.8 1291.0 2390.6 1285.8C2394.2 1275.4 2394.7 1207.6 2397.4 1208.4C2400.2 1209.2 2401.1 1285.4 2404.2 1289.9C2406.6 1293.3 2408.9 1252.9 2411.0 1228.1C2414.4 1189.1 2415.7 1122.1 2417.9 1130.5C2421.2 1143.5 2419.5 1223.2 2424.7 1281.8C2424.9 1284.5 2430.0 1281.6 2431.5 1283.8C2435.5 1289.7 2435.2 1300.9 2438.3 1302.0C2440.7 1302.8 2441.8 1290.5 2445.1 1288.6C2447.2 1287.5 2450.3 1296.4 2452.0 1294.7C2455.8 1290.9 2454.7 1280.9 2458.8 1274.9C2460.1 1273.0 2465.4 1272.3 2465.6 1274.9C2470.8 1338.4 2470.2 1443.0 2472.4 1440.1C2475.6 1423.1 2475.1 1250.6 2479.2 1203.1C2480.6 1187.3 2481.8 1263.4 2486.1 1281.8C2487.2 1286.8 2490.3 1261.2 2492.9 1261.6C2495.7 1262.0 2496.3 1275.2 2499.7 1283.8C2501.7 1288.9 2503.9 1291.0 2506.5 1295.9C2509.3 1301.0 2509.8 1304.4 2513.3 1308.8C2515.3 1311.2 2518.6 1314.5 2520.2 1312.9C2524.0 1308.8 2523.1 1299.0 2527.0 1294.7C2528.5 1293.0 2531.6 1298.8 2533.8 1297.9C2537.1 1296.6 2540.5 1293.5 2540.6 1289.1C2545.9 1116.9 2544.7 854.6 2547.4 856.4C2550.2 858.2 2549.2 1147.5 2554.3 1297.9C2554.7 1310.1 2557.4 1267.9 2561.1 1262.8C2562.9 1260.3 2565.9 1281.0 2567.9 1279.0C2571.4 1275.2 2571.0 1253.0 2574.7 1248.3C2576.5 1246.1 2578.6 1261.1 2581.5 1261.6C2584.1 1262.1 2585.6 1250.9 2588.4 1250.7C2591.0 1250.6 2591.7 1258.0 2595.2 1260.8C2597.1 1262.4 2600.2 1259.9 2602.0 1261.6C2605.7 1265.1 2608.1 1278.0 2608.8 1273.7C2613.6 1243.6 2613.0 1174.0 2615.6 1175.7C2618.5 1177.5 2617.4 1245.2 2622.5 1282.6C2622.9 1285.7 2626.3 1278.6 2629.3 1276.9C2631.7 1275.6 2634.3 1273.5 2636.1 1274.9C2639.8 1277.9 2641.3 1290.3 2642.9 1287.8C2646.7 1282.2 2645.2 1265.8 2649.7 1254.8C2650.7 1252.5 2656.4 1252.1 2656.6 1254.8C2661.8 1327.4 2660.8 1443.0 2663.4 1443.0C2666.2 1438.8 2665.7 1289.2 2670.2 1234.6C2671.1 1223.1 2676.2 1290.0 2677.0 1277.8C2681.7 1208.1 2681.0 1034.5 2683.8 1029.6C2686.4 1025.3 2685.4 1166.5 2690.7 1254.8C2690.8 1257.7 2695.8 1255.4 2697.5 1257.6C2701.3 1262.6 2701.9 1266.6 2704.3 1272.9C2707.4 1281.2 2707.1 1286.5 2711.1 1293.9C2712.6 1296.5 2716.7 1300.0 2717.9 1297.9C2722.2 1290.8 2722.3 1269.6 2724.8 1270.9C2727.8 1272.5 2729.5 1308.5 2731.6 1305.2C2734.9 1299.9 2735.7 1271.8 2738.4 1249.5" fill="none" stroke="rgba(103,234,71,0.18)" stroke-width="7"/><path d="M692.4 1275.8C695.1 1266.5 697.1 1262.0 699.2 1252.6C702.6 1237.8 704.0 1211.0 706.0 1215.1C709.5 1222.2 708.6 1254.7 712.9 1280.5C714.1 1288.0 715.7 1293.1 719.7 1298.3C721.1 1300.2 725.2 1300.3 726.5 1298.3C730.7 1291.6 730.8 1285.3 733.3 1276.5C736.3 1266.3 737.9 1249.0 740.1 1250.8C743.3 1253.4 743.0 1280.6 747.0 1287.6C748.5 1290.3 750.3 1279.3 753.8 1275.1C755.7 1272.8 759.2 1273.8 760.6 1271.2C764.7 1263.1 763.8 1251.9 767.4 1248.3C769.2 1246.6 773.4 1261.3 774.2 1258.0C778.8 1240.2 778.9 1190.1 781.1 1195.5C784.4 1203.7 783.5 1268.5 787.9 1291.9C789.0 1297.8 791.3 1271.2 794.7 1268.7C796.8 1267.2 799.1 1276.5 801.5 1281.9C804.5 1288.6 805.0 1297.3 808.3 1299.0C810.5 1300.2 813.7 1293.6 815.2 1289.0C819.1 1276.9 817.8 1265.0 822.0 1257.3C823.2 1255.0 826.4 1264.7 828.8 1264.0C831.9 1263.1 833.7 1251.7 835.6 1253.3C839.2 1256.4 841.4 1281.6 842.4 1275.8C846.8 1252.0 845.8 1189.7 849.3 1179.4C851.3 1173.4 851.2 1215.9 856.1 1235.1C856.7 1237.5 862.3 1230.9 862.9 1233.3C867.7 1252.5 865.2 1267.5 869.7 1289.0C870.6 1293.5 874.7 1300.0 876.5 1298.3C880.2 1295.0 881.2 1274.5 883.4 1276.5C886.7 1279.8 887.2 1310.3 890.2 1311.5C892.7 1312.6 892.9 1288.6 897.0 1282.3C898.4 1280.1 901.7 1286.6 903.8 1290.1C907.1 1295.5 909.4 1308.0 910.6 1304.4C914.9 1291.6 914.7 1271.2 917.5 1249.0C920.1 1227.6 922.0 1192.3 924.3 1195.5C927.4 1199.7 926.9 1251.3 931.1 1267.6C932.3 1272.3 933.9 1254.7 937.9 1248.0C939.4 1245.5 943.7 1242.6 944.7 1244.8C949.1 1253.5 947.1 1264.5 951.6 1275.1C952.6 1277.6 955.7 1277.6 958.4 1277.6C961.1 1277.6 963.5 1277.2 965.2 1275.1C969.0 1270.4 971.2 1266.8 972.0 1260.5C976.7 1221.8 976.3 1159.6 978.8 1162.6C981.8 1166.1 981.0 1231.4 985.7 1276.5C986.4 1284.1 988.6 1288.2 992.5 1294.4C994.1 1296.9 998.0 1300.2 999.3 1298.3C1003.4 1292.5 1003.1 1276.3 1006.1 1275.1C1008.5 1274.2 1009.2 1286.7 1012.9 1293.0C1014.6 1295.8 1018.8 1300.4 1019.8 1298.0C1024.2 1287.1 1023.5 1261.7 1026.6 1259.8C1029.0 1258.2 1032.3 1296.9 1033.4 1289.4C1037.8 1258.6 1035.8 1195.4 1040.2 1164.0C1041.3 1156.7 1045.6 1181.0 1047.0 1192.6C1051.1 1225.4 1049.0 1248.8 1053.9 1275.1C1054.5 1278.5 1058.1 1266.6 1060.7 1266.9C1063.5 1267.2 1066.2 1279.1 1067.5 1276.5C1071.6 1268.4 1069.7 1252.4 1074.3 1240.1C1075.2 1237.8 1080.5 1237.7 1081.1 1240.1C1086.0 1258.4 1083.4 1276.9 1088.0 1291.9C1088.8 1294.7 1092.5 1288.0 1094.8 1284.8C1098.0 1280.1 1099.4 1271.1 1101.6 1272.3C1104.8 1274.0 1106.2 1293.4 1108.4 1291.9C1111.6 1289.8 1114.0 1275.0 1115.2 1263.3C1119.5 1221.7 1119.5 1156.3 1122.1 1158.7C1124.9 1161.3 1123.7 1230.9 1128.9 1275.8C1129.2 1278.5 1132.9 1277.3 1135.7 1277.6C1138.4 1278.0 1140.4 1276.3 1142.5 1277.6C1145.8 1279.6 1147.0 1286.6 1149.3 1285.8C1152.5 1284.8 1153.1 1277.9 1156.2 1273.0C1158.6 1268.9 1160.5 1262.8 1163.0 1263.3C1166.0 1264.0 1168.8 1279.4 1169.8 1275.8C1174.2 1260.6 1173.3 1221.6 1176.6 1216.2C1178.7 1212.7 1181.2 1256.2 1183.4 1253.7C1186.6 1250.1 1188.2 1195.3 1190.3 1200.8C1193.7 1210.3 1192.3 1262.8 1197.1 1291.2C1197.7 1295.0 1201.8 1279.9 1203.9 1281.2C1207.3 1283.3 1207.3 1297.5 1210.7 1299.8C1212.8 1301.1 1216.0 1294.5 1217.5 1290.1C1221.4 1279.2 1221.6 1261.5 1224.4 1261.5C1227.1 1261.6 1227.1 1283.8 1231.2 1290.5C1232.5 1292.6 1235.7 1286.7 1238.0 1283.7C1241.2 1279.5 1243.3 1277.3 1244.8 1272.3C1248.8 1258.9 1250.1 1251.6 1251.6 1237.6C1255.6 1201.3 1256.3 1138.4 1258.5 1146.5C1261.8 1159.4 1261.3 1264.5 1265.3 1290.1C1266.8 1300.0 1269.4 1235.1 1272.1 1235.1C1274.8 1235.1 1275.9 1287.4 1278.9 1290.1C1281.3 1292.3 1283.5 1244.0 1285.7 1247.3C1289.0 1251.9 1288.6 1298.0 1292.6 1309.8C1294.0 1314.1 1296.1 1289.8 1299.4 1287.6C1301.5 1286.2 1304.6 1303.4 1306.2 1300.8C1310.1 1294.7 1310.1 1279.8 1313.0 1265.8C1315.6 1253.5 1318.3 1229.7 1319.8 1235.1C1323.7 1248.3 1322.2 1292.3 1326.7 1312.3C1327.7 1316.8 1330.7 1296.3 1333.5 1296.2C1336.2 1296.0 1337.5 1311.5 1340.3 1311.5C1343.0 1311.6 1343.3 1300.6 1347.1 1296.5C1348.7 1294.9 1351.9 1298.5 1353.9 1297.3C1357.3 1295.2 1357.4 1291.0 1360.8 1288.3C1362.9 1286.7 1365.2 1285.8 1367.6 1286.5C1370.7 1287.5 1371.8 1293.0 1374.4 1292.6C1377.3 1292.2 1380.7 1288.8 1381.2 1284.8C1386.2 1242.8 1385.7 1172.1 1388.0 1177.6C1391.1 1184.7 1389.7 1264.1 1394.9 1316.2C1395.1 1318.8 1398.9 1315.0 1401.7 1314.4C1404.4 1313.8 1405.8 1313.6 1408.5 1313.3C1411.2 1313.1 1414.6 1315.7 1415.3 1313.3C1420.1 1297.8 1419.1 1270.8 1422.1 1268.7C1424.5 1267.0 1426.7 1306.1 1429.0 1303.7C1432.1 1300.4 1432.2 1260.4 1435.8 1254.4C1437.7 1251.1 1441.5 1287.0 1442.6 1280.5C1447.0 1253.8 1444.9 1200.7 1449.4 1171.2C1450.3 1165.3 1455.2 1183.3 1456.2 1191.9C1460.7 1229.4 1458.4 1259.0 1463.1 1286.5C1463.8 1291.1 1467.1 1272.4 1469.9 1272.3C1472.6 1272.1 1473.4 1284.3 1476.7 1285.8C1478.8 1286.8 1480.3 1280.4 1483.5 1278.7C1485.7 1277.5 1488.3 1277.3 1490.3 1278.7C1493.7 1280.9 1495.5 1289.5 1497.2 1287.6C1500.9 1283.4 1501.4 1262.7 1504.0 1263.3C1506.9 1264.0 1508.3 1292.0 1510.8 1290.8C1513.8 1289.4 1513.3 1265.6 1517.6 1256.9C1518.8 1254.6 1523.9 1266.4 1524.4 1263.3C1529.3 1237.9 1528.6 1184.6 1531.3 1185.8C1534.1 1187.2 1533.2 1237.3 1538.1 1269.8C1538.6 1273.3 1543.7 1278.1 1544.9 1275.8C1549.2 1267.4 1549.2 1242.2 1551.7 1243.0C1554.6 1243.9 1554.3 1270.9 1558.5 1280.1C1559.7 1282.6 1562.5 1272.6 1565.4 1272.3C1567.9 1272.0 1570.1 1275.6 1572.2 1278.7C1575.5 1283.5 1576.7 1292.9 1579.0 1291.9C1582.1 1290.6 1581.9 1279.6 1585.8 1273.0C1587.4 1270.3 1592.2 1271.8 1592.6 1268.7C1597.6 1237.5 1597.0 1183.8 1599.5 1187.2C1602.5 1191.4 1601.6 1258.1 1606.3 1287.6C1607.0 1292.4 1609.3 1277.5 1613.1 1273.0C1614.8 1271.0 1617.7 1272.7 1619.9 1271.2C1623.2 1268.9 1624.2 1263.0 1626.7 1263.3C1629.6 1263.7 1631.1 1268.9 1633.6 1273.0C1636.6 1277.9 1638.2 1280.5 1640.4 1285.8C1643.6 1293.7 1644.1 1305.0 1647.2 1306.2C1649.6 1307.1 1650.7 1292.9 1654.0 1291.2C1656.1 1290.1 1660.3 1302.4 1660.8 1299.0C1665.7 1270.8 1665.1 1210.5 1667.7 1212.2C1670.5 1214.1 1669.9 1281.4 1674.5 1308.0C1675.3 1313.0 1677.7 1297.3 1681.3 1291.2C1683.2 1288.0 1685.5 1287.4 1688.1 1284.8C1690.9 1282.0 1693.8 1281.3 1694.9 1277.6C1699.3 1263.1 1700.4 1231.5 1701.8 1239.4C1705.9 1263.2 1705.9 1357.5 1708.6 1356.9C1711.3 1356.3 1711.6 1256.0 1715.4 1236.5C1717.0 1228.2 1720.4 1294.7 1722.2 1287.6C1725.9 1273.2 1726.5 1180.3 1729.0 1183.0C1731.9 1186.0 1731.1 1266.0 1735.9 1301.9C1736.6 1307.2 1739.4 1291.9 1742.7 1285.8C1744.8 1281.9 1748.0 1274.7 1749.5 1276.9C1753.4 1282.6 1752.5 1300.5 1756.3 1305.5C1758.0 1307.6 1759.6 1297.2 1763.1 1294.8C1765.1 1293.4 1768.1 1294.4 1770.0 1296.2C1773.6 1299.7 1774.3 1308.6 1776.8 1308.0C1779.8 1307.3 1780.6 1293.6 1783.6 1293.0C1786.1 1292.5 1789.9 1309.6 1790.4 1305.1C1795.3 1266.7 1794.5 1186.7 1797.2 1185.8C1799.9 1185.0 1799.1 1262.8 1804.1 1300.8C1804.6 1304.8 1807.7 1291.9 1810.9 1290.8C1813.2 1290.1 1815.1 1293.9 1817.7 1296.2C1820.5 1298.6 1822.5 1299.5 1824.5 1302.6C1827.9 1307.8 1829.3 1318.5 1831.3 1316.9C1834.7 1314.2 1834.0 1298.1 1838.2 1291.9C1839.5 1289.9 1842.5 1297.0 1845.0 1296.5C1848.0 1296.0 1851.3 1293.2 1851.8 1289.4C1856.7 1252.5 1853.7 1226.4 1858.6 1194.7C1859.1 1191.4 1865.0 1198.0 1865.4 1201.9C1870.4 1243.8 1867.8 1281.6 1872.3 1309.0C1873.3 1315.2 1876.4 1285.8 1879.1 1285.8C1881.8 1285.8 1881.6 1301.9 1885.9 1309.0C1887.1 1311.1 1890.0 1308.8 1892.7 1308.7C1895.4 1308.6 1897.1 1309.6 1899.5 1308.7C1902.6 1307.6 1903.7 1305.7 1906.4 1303.7C1909.1 1301.6 1910.6 1300.7 1913.2 1298.3C1916.1 1295.7 1918.4 1294.7 1920.0 1291.2C1923.8 1282.8 1923.4 1277.4 1926.8 1268.7C1928.9 1263.4 1933.1 1261.8 1933.6 1256.2C1938.5 1206.1 1937.9 1126.5 1940.5 1129.4C1943.3 1132.5 1942.3 1215.1 1947.3 1271.2C1947.8 1276.6 1950.5 1279.2 1954.1 1283.0C1956.0 1285.0 1958.3 1285.7 1960.9 1285.5C1963.7 1285.3 1965.9 1280.6 1967.7 1281.9C1971.3 1284.3 1973.1 1297.6 1974.6 1294.8C1978.6 1286.9 1977.7 1261.0 1981.4 1255.1C1983.1 1252.3 1984.5 1266.5 1988.2 1273.0C1989.9 1276.0 1993.4 1280.4 1995.0 1278.7C1998.8 1274.8 2001.0 1267.3 2001.8 1259.0C2006.5 1210.8 2005.7 1141.1 2008.7 1137.6C2011.2 1134.5 2010.5 1201.5 2015.5 1242.6C2016.0 1246.8 2020.2 1247.1 2022.3 1250.8C2025.7 1256.9 2027.2 1260.2 2029.1 1266.9C2032.6 1279.1 2031.8 1286.3 2035.9 1298.0C2037.3 1301.7 2039.6 1304.4 2042.8 1305.5C2045.1 1306.3 2048.8 1305.3 2049.6 1302.6C2054.3 1285.9 2053.3 1259.3 2056.4 1256.9C2058.8 1255.0 2061.0 1294.6 2063.2 1291.9C2066.5 1287.9 2068.8 1261.0 2070.0 1240.1C2074.2 1171.2 2074.2 1064.8 2076.9 1067.6C2079.7 1070.5 2078.4 1181.7 2083.7 1254.4C2083.9 1257.1 2089.7 1253.7 2090.5 1256.2C2095.2 1270.6 2094.1 1293.6 2097.3 1296.5C2099.6 1298.6 2101.8 1267.1 2104.1 1268.7C2107.2 1270.7 2107.0 1298.6 2111.0 1305.5C2112.5 1308.2 2115.8 1298.0 2117.8 1292.6C2121.2 1283.3 2122.2 1267.5 2124.6 1268.7C2127.6 1270.1 2130.3 1306.4 2131.4 1299.0C2135.8 1270.4 2135.4 1180.4 2138.2 1178.7C2140.9 1177.1 2140.0 1251.0 2145.1 1290.8C2145.4 1293.8 2150.1 1288.6 2151.9 1285.8C2155.6 1280.2 2156.5 1268.5 2158.7 1269.8C2161.9 1271.6 2161.7 1289.2 2165.5 1293.7C2167.1 1295.6 2170.3 1289.4 2172.3 1285.8C2175.8 1279.8 2176.2 1270.4 2179.2 1269.8C2181.7 1269.2 2183.3 1283.2 2186.0 1283.0C2188.8 1282.8 2190.3 1274.5 2192.8 1268.7C2195.8 1261.7 2198.9 1258.4 2199.6 1250.8C2204.4 1197.0 2203.7 1115.3 2206.4 1115.1C2209.2 1114.9 2209.5 1196.0 2213.3 1249.8C2214.9 1273.8 2216.1 1298.2 2220.1 1309.8C2221.5 1313.9 2223.6 1290.9 2226.9 1289.0C2229.1 1287.8 2230.1 1297.7 2233.7 1301.9C2235.6 1304.1 2237.7 1304.4 2240.5 1305.1C2243.1 1305.7 2246.6 1307.5 2247.4 1305.1C2252.1 1290.0 2251.2 1263.3 2254.2 1261.5C2256.6 1260.1 2256.4 1285.2 2261.0 1297.3C2261.9 1299.5 2267.5 1299.8 2267.8 1297.3C2273.0 1257.0 2269.5 1229.1 2274.6 1190.1C2275.0 1187.4 2281.0 1190.2 2281.5 1193.0C2286.5 1223.0 2284.3 1257.0 2288.3 1272.3C2289.7 1277.7 2293.3 1240.7 2295.1 1244.8C2298.8 1253.3 2297.2 1285.2 2301.9 1303.7C2302.6 1306.5 2305.7 1299.2 2308.7 1298.0C2311.1 1297.0 2312.9 1297.9 2315.6 1298.3C2318.3 1298.8 2322.1 1302.7 2322.4 1300.1C2327.5 1258.2 2326.5 1186.8 2329.2 1187.0C2331.9 1187.2 2332.5 1288.6 2336.0 1301.2C2338.0 1308.3 2340.9 1262.2 2342.8 1236.2C2346.4 1187.9 2347.5 1104.4 2349.7 1115.2C2353.0 1132.0 2351.5 1243.1 2356.5 1305.2C2357.0 1311.6 2360.8 1286.0 2363.3 1286.6C2366.2 1287.4 2366.5 1305.6 2370.1 1308.8C2372.0 1310.5 2375.9 1303.4 2376.9 1298.7C2381.4 1278.9 2380.6 1250.4 2383.8 1247.5C2386.1 1245.3 2388.8 1291.0 2390.6 1285.8C2394.2 1275.4 2394.7 1207.6 2397.4 1208.4C2400.2 1209.2 2401.1 1285.4 2404.2 1289.9C2406.6 1293.3 2408.9 1252.9 2411.0 1228.1C2414.4 1189.1 2415.7 1122.1 2417.9 1130.5C2421.2 1143.5 2419.5 1223.2 2424.7 1281.8C2424.9 1284.5 2430.0 1281.6 2431.5 1283.8C2435.5 1289.7 2435.2 1300.9 2438.3 1302.0C2440.7 1302.8 2441.8 1290.5 2445.1 1288.6C2447.2 1287.5 2450.3 1296.4 2452.0 1294.7C2455.8 1290.9 2454.7 1280.9 2458.8 1274.9C2460.1 1273.0 2465.4 1272.3 2465.6 1274.9C2470.8 1338.4 2470.2 1443.0 2472.4 1440.1C2475.6 1423.1 2475.1 1250.6 2479.2 1203.1C2480.6 1187.3 2481.8 1263.4 2486.1 1281.8C2487.2 1286.8 2490.3 1261.2 2492.9 1261.6C2495.7 1262.0 2496.3 1275.2 2499.7 1283.8C2501.7 1288.9 2503.9 1291.0 2506.5 1295.9C2509.3 1301.0 2509.8 1304.4 2513.3 1308.8C2515.3 1311.2 2518.6 1314.5 2520.2 1312.9C2524.0 1308.8 2523.1 1299.0 2527.0 1294.7C2528.5 1293.0 2531.6 1298.8 2533.8 1297.9C2537.1 1296.6 2540.5 1293.5 2540.6 1289.1C2545.9 1116.9 2544.7 854.6 2547.4 856.4C2550.2 858.2 2549.2 1147.5 2554.3 1297.9C2554.7 1310.1 2557.4 1267.9 2561.1 1262.8C2562.9 1260.3 2565.9 1281.0 2567.9 1279.0C2571.4 1275.2 2571.0 1253.0 2574.7 1248.3C2576.5 1246.1 2578.6 1261.1 2581.5 1261.6C2584.1 1262.1 2585.6 1250.9 2588.4 1250.7C2591.0 1250.6 2591.7 1258.0 2595.2 1260.8C2597.1 1262.4 2600.2 1259.9 2602.0 1261.6C2605.7 1265.1 2608.1 1278.0 2608.8 1273.7C2613.6 1243.6 2613.0 1174.0 2615.6 1175.7C2618.5 1177.5 2617.4 1245.2 2622.5 1282.6C2622.9 1285.7 2626.3 1278.6 2629.3 1276.9C2631.7 1275.6 2634.3 1273.5 2636.1 1274.9C2639.8 1277.9 2641.3 1290.3 2642.9 1287.8C2646.7 1282.2 2645.2 1265.8 2649.7 1254.8C2650.7 1252.5 2656.4 1252.1 2656.6 1254.8C2661.8 1327.4 2660.8 1443.0 2663.4 1443.0C2666.2 1438.8 2665.7 1289.2 2670.2 1234.6C2671.1 1223.1 2676.2 1290.0 2677.0 1277.8C2681.7 1208.1 2681.0 1034.5 2683.8 1029.6C2686.4 1025.3 2685.4 1166.5 2690.7 1254.8C2690.8 1257.7 2695.8 1255.4 2697.5 1257.6C2701.3 1262.6 2701.9 1266.6 2704.3 1272.9C2707.4 1281.2 2707.1 1286.5 2711.1 1293.9C2712.6 1296.5 2716.7 1300.0 2717.9 1297.9C2722.2 1290.8 2722.3 1269.6 2724.8 1270.9C2727.8 1272.5 2729.5 1308.5 2731.6 1305.2C2734.9 1299.9 2735.7 1271.8 2738.4 1249.5" fill="none" stroke="rgba(103,234,71,0.17)" stroke-width="3"/><path d="M692.4 1136.5C695.1 1141.8 698.2 1153.5 699.2 1149.7C703.6 1134.5 703.7 1085.8 706.0 1089.0C709.1 1093.1 708.7 1136.6 712.9 1168.0C714.1 1177.5 715.4 1183.9 719.7 1191.2C720.9 1193.2 725.4 1193.3 726.5 1191.2C730.9 1182.4 730.4 1174.8 733.3 1164.0C735.9 1154.4 737.9 1138.1 740.1 1140.1C743.4 1143.1 743.1 1170.3 747.0 1176.5C748.6 1179.2 751.4 1168.1 753.8 1162.2C756.9 1154.5 756.7 1149.6 760.6 1142.6C762.2 1139.7 765.1 1136.9 767.4 1137.6C770.5 1138.5 773.0 1149.1 774.2 1146.5C778.5 1137.6 779.4 1102.8 781.1 1108.7C784.8 1121.4 783.0 1160.1 787.9 1193.0C788.5 1197.0 792.2 1197.5 794.7 1200.8C797.7 1204.9 799.8 1206.8 801.5 1211.5C805.3 1222.2 806.0 1241.1 808.3 1239.4C811.5 1237.1 812.0 1216.6 815.2 1201.5C817.5 1190.6 817.7 1181.8 822.0 1174.4C823.2 1172.3 826.1 1178.0 828.8 1178.0C831.6 1177.9 833.7 1176.4 835.6 1174.0C839.2 1169.5 841.8 1166.7 842.4 1160.8C847.2 1118.8 845.6 1069.2 849.3 1054.4C851.0 1047.2 852.7 1085.3 856.1 1105.8C858.2 1118.8 860.2 1125.1 862.9 1137.9C865.6 1150.7 866.7 1157.1 869.7 1169.7C872.1 1179.7 874.3 1196.3 876.5 1194.4C879.8 1191.6 880.5 1158.6 883.4 1158.0C886.0 1157.3 888.1 1194.3 890.2 1191.2C893.5 1186.2 894.4 1136.9 897.0 1137.6C899.8 1138.3 899.5 1172.4 903.8 1194.7C904.9 1200.5 909.8 1212.2 910.6 1208.0C915.3 1183.0 914.4 1156.1 917.5 1121.5C919.8 1094.6 922.0 1049.9 924.3 1054.4C927.5 1060.5 927.1 1130.4 931.1 1147.9C932.6 1154.4 934.7 1116.9 937.9 1114.4C940.2 1112.6 941.8 1128.2 944.7 1137.2C947.3 1145.0 947.5 1150.2 951.6 1156.5C953.0 1158.7 956.7 1160.2 958.4 1158.7C962.1 1155.4 962.9 1143.7 965.2 1144.7C968.4 1146.2 971.2 1171.0 972.0 1165.1C976.6 1133.5 976.1 1051.4 978.8 1050.8C981.5 1050.2 980.8 1118.3 985.7 1162.2C986.3 1167.8 989.1 1170.3 992.5 1174.7C994.5 1177.4 998.0 1182.1 999.3 1180.1C1003.4 1174.0 1005.6 1165.0 1006.1 1154.4C1011.0 1057.3 1010.6 898.4 1012.9 910.9C1016.0 927.0 1015.2 1139.6 1019.8 1225.8C1020.6 1242.1 1022.0 1184.1 1026.6 1166.9C1027.4 1163.8 1033.0 1178.7 1033.4 1175.1C1038.4 1134.4 1035.9 1084.6 1040.2 1056.1C1041.3 1048.9 1045.4 1073.8 1047.0 1085.8C1050.9 1114.6 1050.1 1147.6 1053.9 1158.3C1055.6 1163.3 1058.4 1123.0 1060.7 1125.1C1063.8 1127.9 1064.9 1171.7 1067.5 1170.5C1070.4 1169.1 1069.9 1138.8 1074.3 1118.7C1075.4 1113.8 1080.1 1104.7 1081.1 1107.9C1085.5 1121.3 1083.8 1139.6 1088.0 1160.1C1089.3 1166.5 1091.9 1174.6 1094.8 1175.1C1097.3 1175.6 1098.7 1163.0 1101.6 1162.6C1104.2 1162.3 1106.5 1175.0 1108.4 1173.3C1112.0 1170.0 1114.4 1159.7 1115.2 1150.1C1119.8 1098.3 1119.6 1014.6 1122.1 1019.7C1125.1 1026.0 1124.0 1128.5 1128.9 1178.7C1129.5 1184.8 1131.9 1166.9 1135.7 1160.5C1137.3 1157.7 1141.4 1153.7 1142.5 1155.8C1146.8 1163.7 1146.8 1186.4 1149.3 1185.5C1152.3 1184.3 1152.7 1164.3 1156.2 1150.5C1158.1 1142.5 1159.7 1133.0 1163.0 1131.2C1165.2 1130.0 1168.0 1144.9 1169.8 1142.9C1173.5 1138.9 1174.2 1115.1 1176.6 1116.2C1179.6 1117.5 1181.1 1150.8 1183.4 1149.0C1186.5 1146.8 1188.0 1103.1 1190.3 1106.2C1193.5 1110.4 1193.2 1143.0 1197.1 1167.2C1198.7 1177.3 1199.9 1182.9 1203.9 1191.9C1205.3 1195.0 1207.9 1195.4 1210.7 1197.6C1213.4 1199.7 1216.8 1205.2 1217.5 1202.6C1222.3 1185.4 1220.9 1154.0 1224.4 1147.9C1226.3 1144.5 1227.6 1174.5 1231.2 1178.7C1233.1 1180.8 1235.5 1163.1 1238.0 1163.7C1241.0 1164.4 1243.3 1185.5 1244.8 1181.9C1248.8 1172.5 1249.6 1151.5 1251.6 1131.2C1255.1 1095.8 1256.0 1038.6 1258.5 1042.6C1261.5 1047.6 1260.6 1121.0 1265.3 1153.7C1266.0 1158.9 1270.5 1134.1 1272.1 1137.2C1276.0 1144.9 1275.1 1173.0 1278.9 1180.5C1280.5 1183.6 1283.7 1161.7 1285.7 1163.7C1289.2 1167.0 1288.8 1188.6 1292.6 1193.7C1294.2 1195.9 1296.7 1181.7 1299.4 1181.9C1302.2 1182.1 1303.8 1195.5 1306.2 1194.7C1309.3 1193.8 1311.3 1184.7 1313.0 1177.6C1316.8 1162.2 1317.7 1135.0 1319.8 1138.3C1323.1 1143.3 1322.1 1181.1 1326.7 1198.3C1327.5 1201.5 1330.2 1190.9 1333.5 1189.4C1335.6 1188.4 1338.7 1193.5 1340.3 1191.9C1344.2 1188.1 1345.0 1174.2 1347.1 1175.8C1350.5 1178.4 1350.4 1199.2 1353.9 1202.6C1355.9 1204.5 1357.3 1191.1 1360.8 1189.0C1362.7 1187.8 1365.3 1195.2 1367.6 1194.4C1370.8 1193.2 1372.3 1182.7 1374.4 1184.0C1377.8 1186.3 1380.4 1209.1 1381.2 1203.3C1385.8 1171.5 1385.6 1085.7 1388.0 1090.1C1391.0 1095.4 1390.0 1184.5 1394.9 1227.6C1395.5 1233.1 1398.6 1212.6 1401.7 1211.5C1404.0 1210.7 1405.5 1222.4 1408.5 1223.0C1411.0 1223.4 1414.3 1218.3 1415.3 1214.0C1419.8 1195.2 1418.8 1169.9 1422.1 1165.1C1424.2 1162.2 1427.1 1198.8 1429.0 1194.7C1432.6 1186.7 1432.6 1139.0 1435.8 1134.7C1438.0 1131.7 1440.7 1181.5 1442.6 1176.5C1446.1 1167.5 1445.0 1119.5 1449.4 1099.7C1450.4 1095.2 1455.1 1109.0 1456.2 1115.8C1460.6 1141.5 1459.2 1170.6 1463.1 1181.2C1464.7 1185.7 1467.7 1151.4 1469.9 1153.7C1473.1 1157.1 1473.6 1193.0 1476.7 1195.5C1479.0 1197.3 1479.0 1174.7 1483.5 1164.4C1484.5 1162.2 1488.0 1165.1 1490.3 1164.0C1493.5 1162.6 1494.6 1157.6 1497.2 1158.0C1500.1 1158.3 1500.7 1163.7 1504.0 1165.8C1506.2 1167.2 1509.1 1168.4 1510.8 1166.9C1514.6 1163.4 1514.4 1154.6 1517.6 1153.3C1519.9 1152.4 1523.8 1164.9 1524.4 1161.5C1529.3 1135.6 1528.2 1084.5 1531.3 1080.1C1533.6 1076.7 1534.7 1117.3 1538.1 1141.9C1540.2 1157.0 1542.6 1182.0 1544.9 1179.4C1548.1 1175.6 1548.6 1129.1 1551.7 1125.8C1554.0 1123.4 1555.0 1160.3 1558.5 1165.1C1560.5 1167.7 1562.0 1146.7 1565.4 1144.4C1567.4 1143.0 1569.6 1151.2 1572.2 1155.8C1575.0 1160.9 1576.8 1163.3 1579.0 1168.7C1582.3 1176.7 1583.4 1190.3 1585.8 1189.4C1588.8 1188.2 1591.5 1174.0 1592.6 1163.3C1597.0 1120.7 1596.7 1056.1 1599.5 1056.1C1602.2 1056.1 1601.5 1121.0 1606.3 1163.3C1607.0 1169.6 1609.6 1175.3 1613.1 1177.6C1615.0 1178.9 1618.2 1175.1 1619.9 1172.2C1623.7 1165.9 1623.0 1160.8 1626.7 1154.4C1628.4 1151.5 1632.3 1147.0 1633.6 1149.0C1637.7 1155.5 1636.2 1166.0 1640.4 1175.8C1641.7 1178.9 1646.1 1178.0 1647.2 1181.2C1651.5 1193.3 1650.6 1201.1 1654.0 1214.0C1656.1 1221.8 1659.9 1238.3 1660.8 1233.0C1665.4 1207.3 1664.6 1141.2 1667.7 1136.5C1670.1 1132.9 1669.9 1182.5 1674.5 1212.2C1675.4 1218.3 1679.0 1227.2 1681.3 1226.2C1684.4 1224.8 1685.5 1214.2 1688.1 1206.2C1690.9 1197.6 1691.5 1193.0 1694.9 1184.7C1697.0 1179.7 1701.1 1168.8 1701.8 1173.0C1706.6 1203.3 1706.5 1280.4 1708.6 1271.2C1711.9 1256.3 1711.8 1132.5 1715.4 1112.6C1717.3 1102.2 1720.1 1202.3 1722.2 1195.5C1725.5 1185.1 1726.4 1067.2 1729.0 1069.7C1731.9 1072.5 1731.8 1180.5 1735.9 1208.7C1737.2 1218.0 1738.5 1180.9 1742.7 1163.3C1743.9 1158.2 1748.3 1148.8 1749.5 1151.9C1753.8 1163.0 1752.0 1187.2 1756.3 1199.0C1757.4 1202.0 1760.6 1188.7 1763.1 1189.0C1766.0 1189.4 1766.4 1198.4 1770.0 1200.8C1771.9 1202.1 1775.5 1200.7 1776.8 1198.3C1780.9 1190.9 1781.0 1176.2 1783.6 1176.5C1786.4 1176.9 1789.5 1206.5 1790.4 1200.1C1794.9 1169.8 1794.5 1084.7 1797.2 1084.7C1800.0 1084.7 1799.8 1174.4 1804.1 1200.1C1805.3 1207.5 1807.6 1170.2 1810.9 1167.6C1813.1 1165.8 1814.0 1181.0 1817.7 1189.0C1819.5 1192.8 1821.3 1194.5 1824.5 1197.2C1826.8 1199.2 1829.5 1202.2 1831.3 1200.8C1835.0 1198.2 1835.6 1192.7 1838.2 1187.2C1841.1 1181.0 1841.2 1174.9 1845.0 1171.5C1846.7 1170.0 1851.3 1177.7 1851.8 1175.1C1856.7 1150.2 1854.1 1131.1 1858.6 1102.6C1859.5 1096.8 1864.8 1084.7 1865.4 1089.4C1870.3 1125.2 1868.2 1180.8 1872.3 1203.7C1873.6 1211.4 1876.6 1164.4 1879.1 1165.8C1882.1 1167.5 1881.2 1194.8 1885.9 1211.5C1886.7 1214.2 1889.9 1213.8 1892.7 1214.4C1895.3 1214.9 1898.4 1216.4 1899.5 1214.4C1903.8 1207.0 1902.5 1199.6 1906.4 1190.8C1907.9 1187.3 1910.1 1186.0 1913.2 1183.7C1915.5 1181.9 1918.5 1182.8 1920.0 1180.5C1923.9 1174.4 1923.8 1169.6 1926.8 1162.6C1929.3 1156.8 1933.0 1154.6 1933.6 1148.3C1938.5 1097.0 1937.7 1019.0 1940.5 1018.6C1943.2 1018.3 1943.0 1095.6 1947.3 1146.5C1948.5 1160.6 1949.7 1171.8 1954.1 1181.2C1955.2 1183.5 1958.0 1176.2 1960.9 1175.8C1963.5 1175.5 1964.9 1179.0 1967.7 1179.4C1970.3 1179.7 1973.7 1180.0 1974.6 1177.6C1979.1 1165.4 1977.3 1150.1 1981.4 1142.9C1982.8 1140.4 1986.2 1148.8 1988.2 1153.3C1991.7 1161.2 1992.6 1175.0 1995.0 1174.0C1998.0 1172.8 2001.1 1158.7 2001.8 1147.9C2006.6 1077.2 2005.6 979.6 2008.7 970.4C2011.0 963.3 2011.2 1052.7 2015.5 1107.2C2016.6 1121.7 2018.6 1129.0 2022.3 1142.9C2024.1 1149.7 2027.3 1152.3 2029.1 1159.0C2032.7 1171.9 2032.9 1178.8 2035.9 1191.9C2038.3 1202.0 2039.8 1216.1 2042.8 1216.9C2045.3 1217.6 2048.3 1204.3 2049.6 1195.5C2053.7 1167.5 2053.2 1130.1 2056.4 1124.7C2058.6 1121.1 2061.1 1177.6 2063.2 1173.0C2066.6 1165.4 2067.9 1125.8 2070.0 1094.4C2073.4 1044.1 2074.5 962.4 2076.9 968.6C2079.9 976.7 2079.8 1065.6 2083.7 1130.1C2085.2 1155.6 2085.9 1176.0 2090.5 1193.7C2091.4 1197.2 2095.4 1187.6 2097.3 1183.0C2100.9 1174.1 2102.1 1157.1 2104.1 1159.7C2107.6 1164.3 2108.3 1201.3 2111.0 1200.8C2113.8 1200.3 2113.3 1173.7 2117.8 1157.2C2118.7 1153.7 2123.7 1148.1 2124.6 1150.8C2129.2 1164.8 2129.9 1207.4 2131.4 1199.0C2135.3 1178.1 2135.2 1083.3 2138.2 1077.6C2140.6 1073.0 2140.6 1135.4 2145.1 1173.3C2146.1 1181.8 2149.6 1195.2 2151.9 1193.7C2155.1 1191.6 2156.6 1161.4 2158.7 1164.4C2162.1 1169.4 2162.2 1209.6 2165.5 1213.7C2167.7 1216.4 2168.7 1193.9 2172.3 1181.2C2174.2 1174.7 2175.9 1171.6 2179.2 1165.8C2181.3 1162.0 2182.6 1159.4 2186.0 1157.2C2188.1 1155.9 2190.7 1158.3 2192.8 1156.9C2196.2 1154.7 2199.3 1152.6 2199.6 1148.3C2204.7 1085.9 2203.8 988.1 2206.4 990.1C2209.3 992.2 2208.4 1091.6 2213.3 1158.7C2213.9 1167.1 2217.2 1170.7 2220.1 1178.7C2222.7 1185.9 2223.0 1192.5 2226.9 1196.5C2228.5 1198.2 2231.9 1191.6 2233.7 1193.0C2237.3 1195.5 2238.2 1207.1 2240.5 1206.2C2243.7 1205.0 2245.9 1195.3 2247.4 1187.6C2251.4 1165.8 2250.9 1137.0 2254.2 1132.2C2256.3 1129.1 2258.1 1153.7 2261.0 1168.0C2263.5 1180.4 2266.6 1206.0 2267.8 1199.0C2272.0 1175.2 2269.7 1133.2 2274.6 1090.8C2275.1 1086.7 2280.8 1079.7 2281.5 1082.9C2286.3 1106.5 2283.8 1138.3 2288.3 1158.0C2289.3 1162.3 2294.0 1138.8 2295.1 1142.9C2299.5 1160.2 2298.0 1199.2 2301.9 1211.5C2303.4 1216.3 2305.9 1196.1 2308.7 1185.8C2311.4 1176.4 2313.2 1161.0 2315.6 1162.2C2318.6 1163.8 2321.3 1200.5 2322.4 1193.0C2326.7 1163.3 2326.5 1068.0 2329.2 1069.2C2332.0 1070.4 2332.5 1183.3 2336.0 1199.1C2337.9 1207.5 2340.9 1157.5 2342.8 1129.7C2346.4 1078.9 2347.4 994.1 2349.7 1002.6C2352.8 1014.6 2351.5 1120.6 2356.5 1180.9C2356.9 1186.2 2360.6 1166.7 2363.3 1166.8C2366.1 1167.0 2367.5 1175.7 2370.1 1181.7C2373.0 1188.3 2375.8 1202.6 2376.9 1198.3C2381.3 1181.3 2379.7 1142.8 2383.8 1128.5C2385.1 1123.8 2388.9 1154.4 2390.6 1150.7C2394.4 1142.0 2395.3 1092.8 2397.4 1097.4C2400.7 1104.5 2401.1 1175.3 2404.2 1179.7C2406.6 1183.1 2409.0 1142.0 2411.0 1116.8C2414.5 1073.6 2415.7 1000.3 2417.9 1008.7C2421.1 1021.1 2419.7 1105.3 2424.7 1168.8C2425.2 1175.0 2428.5 1177.5 2431.5 1183.0C2434.0 1187.5 2434.8 1191.2 2438.3 1193.8C2440.2 1195.2 2442.5 1192.8 2445.1 1193.0C2447.9 1193.3 2450.9 1197.1 2452.0 1195.1C2456.3 1187.1 2454.4 1176.7 2458.8 1168.0C2459.9 1165.9 2465.5 1165.4 2465.6 1168.0C2470.9 1269.0 2470.0 1436.9 2472.4 1427.1C2475.4 1415.1 2474.7 1197.9 2479.2 1113.6C2480.1 1097.0 2482.4 1166.3 2486.1 1174.9C2487.9 1179.1 2490.2 1145.0 2492.9 1145.4C2495.7 1145.8 2495.4 1165.2 2499.7 1176.9C2500.9 1180.2 2504.8 1179.9 2506.5 1183.0C2510.2 1189.5 2509.7 1194.4 2513.3 1201.1C2515.2 1204.6 2519.0 1210.9 2520.2 1208.4C2524.5 1198.5 2523.1 1177.1 2527.0 1170.0C2528.5 1167.3 2530.8 1178.4 2533.8 1183.8C2536.3 1188.1 2540.5 1199.0 2540.6 1194.2C2545.9 1028.8 2544.7 758.0 2547.4 758.4C2550.2 758.7 2549.6 1072.9 2554.3 1195.9C2555.1 1217.4 2557.9 1124.7 2561.1 1119.6C2563.4 1116.0 2565.0 1172.4 2567.9 1174.1C2570.4 1175.5 2570.6 1136.9 2574.7 1127.3C2576.1 1124.0 2577.8 1137.2 2581.5 1141.8C2583.2 1143.8 2585.6 1143.5 2588.4 1143.8C2591.0 1144.1 2593.2 1144.9 2595.2 1143.4C2598.6 1140.9 2600.8 1131.0 2602.0 1133.7C2606.2 1143.2 2607.5 1182.3 2608.8 1174.1C2612.9 1149.2 2613.0 1049.5 2615.6 1051.0C2618.5 1052.7 2618.1 1149.7 2622.5 1182.1C2623.5 1189.9 2626.6 1151.5 2629.3 1151.5C2632.0 1151.5 2631.7 1171.3 2636.1 1182.1C2637.1 1184.7 2642.0 1187.1 2642.9 1185.0C2647.4 1174.9 2645.2 1162.6 2649.7 1151.5C2650.6 1149.3 2656.4 1148.9 2656.6 1151.5C2661.8 1221.9 2660.8 1338.6 2663.4 1334.1C2666.3 1328.9 2665.7 1179.8 2670.2 1127.3C2671.2 1115.5 2676.2 1186.2 2677.0 1173.3C2681.6 1102.0 2680.9 925.8 2683.8 916.7C2686.3 909.0 2685.4 1051.3 2690.7 1131.3C2690.9 1134.7 2696.7 1122.5 2697.5 1125.3C2702.1 1141.6 2700.2 1157.8 2704.3 1178.9C2705.7 1186.0 2707.6 1193.2 2711.1 1195.9C2713.0 1197.3 2717.1 1192.7 2717.9 1189.0C2722.5 1169.4 2722.2 1136.3 2724.8 1137.8C2727.7 1139.5 2729.1 1199.1 2731.6 1197.1C2734.5 1194.6 2735.7 1154.7 2738.4 1126.5" fill="none" stroke="rgba(103,234,71,0.18)" stroke-width="7"/><path d="M692.4 1136.5C695.1 1141.8 698.2 1153.5 699.2 1149.7C703.6 1134.5 703.7 1085.8 706.0 1089.0C709.1 1093.1 708.7 1136.6 712.9 1168.0C714.1 1177.5 715.4 1183.9 719.7 1191.2C720.9 1193.2 725.4 1193.3 726.5 1191.2C730.9 1182.4 730.4 1174.8 733.3 1164.0C735.9 1154.4 737.9 1138.1 740.1 1140.1C743.4 1143.1 743.1 1170.3 747.0 1176.5C748.6 1179.2 751.4 1168.1 753.8 1162.2C756.9 1154.5 756.7 1149.6 760.6 1142.6C762.2 1139.7 765.1 1136.9 767.4 1137.6C770.5 1138.5 773.0 1149.1 774.2 1146.5C778.5 1137.6 779.4 1102.8 781.1 1108.7C784.8 1121.4 783.0 1160.1 787.9 1193.0C788.5 1197.0 792.2 1197.5 794.7 1200.8C797.7 1204.9 799.8 1206.8 801.5 1211.5C805.3 1222.2 806.0 1241.1 808.3 1239.4C811.5 1237.1 812.0 1216.6 815.2 1201.5C817.5 1190.6 817.7 1181.8 822.0 1174.4C823.2 1172.3 826.1 1178.0 828.8 1178.0C831.6 1177.9 833.7 1176.4 835.6 1174.0C839.2 1169.5 841.8 1166.7 842.4 1160.8C847.2 1118.8 845.6 1069.2 849.3 1054.4C851.0 1047.2 852.7 1085.3 856.1 1105.8C858.2 1118.8 860.2 1125.1 862.9 1137.9C865.6 1150.7 866.7 1157.1 869.7 1169.7C872.1 1179.7 874.3 1196.3 876.5 1194.4C879.8 1191.6 880.5 1158.6 883.4 1158.0C886.0 1157.3 888.1 1194.3 890.2 1191.2C893.5 1186.2 894.4 1136.9 897.0 1137.6C899.8 1138.3 899.5 1172.4 903.8 1194.7C904.9 1200.5 909.8 1212.2 910.6 1208.0C915.3 1183.0 914.4 1156.1 917.5 1121.5C919.8 1094.6 922.0 1049.9 924.3 1054.4C927.5 1060.5 927.1 1130.4 931.1 1147.9C932.6 1154.4 934.7 1116.9 937.9 1114.4C940.2 1112.6 941.8 1128.2 944.7 1137.2C947.3 1145.0 947.5 1150.2 951.6 1156.5C953.0 1158.7 956.7 1160.2 958.4 1158.7C962.1 1155.4 962.9 1143.7 965.2 1144.7C968.4 1146.2 971.2 1171.0 972.0 1165.1C976.6 1133.5 976.1 1051.4 978.8 1050.8C981.5 1050.2 980.8 1118.3 985.7 1162.2C986.3 1167.8 989.1 1170.3 992.5 1174.7C994.5 1177.4 998.0 1182.1 999.3 1180.1C1003.4 1174.0 1005.6 1165.0 1006.1 1154.4C1011.0 1057.3 1010.6 898.4 1012.9 910.9C1016.0 927.0 1015.2 1139.6 1019.8 1225.8C1020.6 1242.1 1022.0 1184.1 1026.6 1166.9C1027.4 1163.8 1033.0 1178.7 1033.4 1175.1C1038.4 1134.4 1035.9 1084.6 1040.2 1056.1C1041.3 1048.9 1045.4 1073.8 1047.0 1085.8C1050.9 1114.6 1050.1 1147.6 1053.9 1158.3C1055.6 1163.3 1058.4 1123.0 1060.7 1125.1C1063.8 1127.9 1064.9 1171.7 1067.5 1170.5C1070.4 1169.1 1069.9 1138.8 1074.3 1118.7C1075.4 1113.8 1080.1 1104.7 1081.1 1107.9C1085.5 1121.3 1083.8 1139.6 1088.0 1160.1C1089.3 1166.5 1091.9 1174.6 1094.8 1175.1C1097.3 1175.6 1098.7 1163.0 1101.6 1162.6C1104.2 1162.3 1106.5 1175.0 1108.4 1173.3C1112.0 1170.0 1114.4 1159.7 1115.2 1150.1C1119.8 1098.3 1119.6 1014.6 1122.1 1019.7C1125.1 1026.0 1124.0 1128.5 1128.9 1178.7C1129.5 1184.8 1131.9 1166.9 1135.7 1160.5C1137.3 1157.7 1141.4 1153.7 1142.5 1155.8C1146.8 1163.7 1146.8 1186.4 1149.3 1185.5C1152.3 1184.3 1152.7 1164.3 1156.2 1150.5C1158.1 1142.5 1159.7 1133.0 1163.0 1131.2C1165.2 1130.0 1168.0 1144.9 1169.8 1142.9C1173.5 1138.9 1174.2 1115.1 1176.6 1116.2C1179.6 1117.5 1181.1 1150.8 1183.4 1149.0C1186.5 1146.8 1188.0 1103.1 1190.3 1106.2C1193.5 1110.4 1193.2 1143.0 1197.1 1167.2C1198.7 1177.3 1199.9 1182.9 1203.9 1191.9C1205.3 1195.0 1207.9 1195.4 1210.7 1197.6C1213.4 1199.7 1216.8 1205.2 1217.5 1202.6C1222.3 1185.4 1220.9 1154.0 1224.4 1147.9C1226.3 1144.5 1227.6 1174.5 1231.2 1178.7C1233.1 1180.8 1235.5 1163.1 1238.0 1163.7C1241.0 1164.4 1243.3 1185.5 1244.8 1181.9C1248.8 1172.5 1249.6 1151.5 1251.6 1131.2C1255.1 1095.8 1256.0 1038.6 1258.5 1042.6C1261.5 1047.6 1260.6 1121.0 1265.3 1153.7C1266.0 1158.9 1270.5 1134.1 1272.1 1137.2C1276.0 1144.9 1275.1 1173.0 1278.9 1180.5C1280.5 1183.6 1283.7 1161.7 1285.7 1163.7C1289.2 1167.0 1288.8 1188.6 1292.6 1193.7C1294.2 1195.9 1296.7 1181.7 1299.4 1181.9C1302.2 1182.1 1303.8 1195.5 1306.2 1194.7C1309.3 1193.8 1311.3 1184.7 1313.0 1177.6C1316.8 1162.2 1317.7 1135.0 1319.8 1138.3C1323.1 1143.3 1322.1 1181.1 1326.7 1198.3C1327.5 1201.5 1330.2 1190.9 1333.5 1189.4C1335.6 1188.4 1338.7 1193.5 1340.3 1191.9C1344.2 1188.1 1345.0 1174.2 1347.1 1175.8C1350.5 1178.4 1350.4 1199.2 1353.9 1202.6C1355.9 1204.5 1357.3 1191.1 1360.8 1189.0C1362.7 1187.8 1365.3 1195.2 1367.6 1194.4C1370.8 1193.2 1372.3 1182.7 1374.4 1184.0C1377.8 1186.3 1380.4 1209.1 1381.2 1203.3C1385.8 1171.5 1385.6 1085.7 1388.0 1090.1C1391.0 1095.4 1390.0 1184.5 1394.9 1227.6C1395.5 1233.1 1398.6 1212.6 1401.7 1211.5C1404.0 1210.7 1405.5 1222.4 1408.5 1223.0C1411.0 1223.4 1414.3 1218.3 1415.3 1214.0C1419.8 1195.2 1418.8 1169.9 1422.1 1165.1C1424.2 1162.2 1427.1 1198.8 1429.0 1194.7C1432.6 1186.7 1432.6 1139.0 1435.8 1134.7C1438.0 1131.7 1440.7 1181.5 1442.6 1176.5C1446.1 1167.5 1445.0 1119.5 1449.4 1099.7C1450.4 1095.2 1455.1 1109.0 1456.2 1115.8C1460.6 1141.5 1459.2 1170.6 1463.1 1181.2C1464.7 1185.7 1467.7 1151.4 1469.9 1153.7C1473.1 1157.1 1473.6 1193.0 1476.7 1195.5C1479.0 1197.3 1479.0 1174.7 1483.5 1164.4C1484.5 1162.2 1488.0 1165.1 1490.3 1164.0C1493.5 1162.6 1494.6 1157.6 1497.2 1158.0C1500.1 1158.3 1500.7 1163.7 1504.0 1165.8C1506.2 1167.2 1509.1 1168.4 1510.8 1166.9C1514.6 1163.4 1514.4 1154.6 1517.6 1153.3C1519.9 1152.4 1523.8 1164.9 1524.4 1161.5C1529.3 1135.6 1528.2 1084.5 1531.3 1080.1C1533.6 1076.7 1534.7 1117.3 1538.1 1141.9C1540.2 1157.0 1542.6 1182.0 1544.9 1179.4C1548.1 1175.6 1548.6 1129.1 1551.7 1125.8C1554.0 1123.4 1555.0 1160.3 1558.5 1165.1C1560.5 1167.7 1562.0 1146.7 1565.4 1144.4C1567.4 1143.0 1569.6 1151.2 1572.2 1155.8C1575.0 1160.9 1576.8 1163.3 1579.0 1168.7C1582.3 1176.7 1583.4 1190.3 1585.8 1189.4C1588.8 1188.2 1591.5 1174.0 1592.6 1163.3C1597.0 1120.7 1596.7 1056.1 1599.5 1056.1C1602.2 1056.1 1601.5 1121.0 1606.3 1163.3C1607.0 1169.6 1609.6 1175.3 1613.1 1177.6C1615.0 1178.9 1618.2 1175.1 1619.9 1172.2C1623.7 1165.9 1623.0 1160.8 1626.7 1154.4C1628.4 1151.5 1632.3 1147.0 1633.6 1149.0C1637.7 1155.5 1636.2 1166.0 1640.4 1175.8C1641.7 1178.9 1646.1 1178.0 1647.2 1181.2C1651.5 1193.3 1650.6 1201.1 1654.0 1214.0C1656.1 1221.8 1659.9 1238.3 1660.8 1233.0C1665.4 1207.3 1664.6 1141.2 1667.7 1136.5C1670.1 1132.9 1669.9 1182.5 1674.5 1212.2C1675.4 1218.3 1679.0 1227.2 1681.3 1226.2C1684.4 1224.8 1685.5 1214.2 1688.1 1206.2C1690.9 1197.6 1691.5 1193.0 1694.9 1184.7C1697.0 1179.7 1701.1 1168.8 1701.8 1173.0C1706.6 1203.3 1706.5 1280.4 1708.6 1271.2C1711.9 1256.3 1711.8 1132.5 1715.4 1112.6C1717.3 1102.2 1720.1 1202.3 1722.2 1195.5C1725.5 1185.1 1726.4 1067.2 1729.0 1069.7C1731.9 1072.5 1731.8 1180.5 1735.9 1208.7C1737.2 1218.0 1738.5 1180.9 1742.7 1163.3C1743.9 1158.2 1748.3 1148.8 1749.5 1151.9C1753.8 1163.0 1752.0 1187.2 1756.3 1199.0C1757.4 1202.0 1760.6 1188.7 1763.1 1189.0C1766.0 1189.4 1766.4 1198.4 1770.0 1200.8C1771.9 1202.1 1775.5 1200.7 1776.8 1198.3C1780.9 1190.9 1781.0 1176.2 1783.6 1176.5C1786.4 1176.9 1789.5 1206.5 1790.4 1200.1C1794.9 1169.8 1794.5 1084.7 1797.2 1084.7C1800.0 1084.7 1799.8 1174.4 1804.1 1200.1C1805.3 1207.5 1807.6 1170.2 1810.9 1167.6C1813.1 1165.8 1814.0 1181.0 1817.7 1189.0C1819.5 1192.8 1821.3 1194.5 1824.5 1197.2C1826.8 1199.2 1829.5 1202.2 1831.3 1200.8C1835.0 1198.2 1835.6 1192.7 1838.2 1187.2C1841.1 1181.0 1841.2 1174.9 1845.0 1171.5C1846.7 1170.0 1851.3 1177.7 1851.8 1175.1C1856.7 1150.2 1854.1 1131.1 1858.6 1102.6C1859.5 1096.8 1864.8 1084.7 1865.4 1089.4C1870.3 1125.2 1868.2 1180.8 1872.3 1203.7C1873.6 1211.4 1876.6 1164.4 1879.1 1165.8C1882.1 1167.5 1881.2 1194.8 1885.9 1211.5C1886.7 1214.2 1889.9 1213.8 1892.7 1214.4C1895.3 1214.9 1898.4 1216.4 1899.5 1214.4C1903.8 1207.0 1902.5 1199.6 1906.4 1190.8C1907.9 1187.3 1910.1 1186.0 1913.2 1183.7C1915.5 1181.9 1918.5 1182.8 1920.0 1180.5C1923.9 1174.4 1923.8 1169.6 1926.8 1162.6C1929.3 1156.8 1933.0 1154.6 1933.6 1148.3C1938.5 1097.0 1937.7 1019.0 1940.5 1018.6C1943.2 1018.3 1943.0 1095.6 1947.3 1146.5C1948.5 1160.6 1949.7 1171.8 1954.1 1181.2C1955.2 1183.5 1958.0 1176.2 1960.9 1175.8C1963.5 1175.5 1964.9 1179.0 1967.7 1179.4C1970.3 1179.7 1973.7 1180.0 1974.6 1177.6C1979.1 1165.4 1977.3 1150.1 1981.4 1142.9C1982.8 1140.4 1986.2 1148.8 1988.2 1153.3C1991.7 1161.2 1992.6 1175.0 1995.0 1174.0C1998.0 1172.8 2001.1 1158.7 2001.8 1147.9C2006.6 1077.2 2005.6 979.6 2008.7 970.4C2011.0 963.3 2011.2 1052.7 2015.5 1107.2C2016.6 1121.7 2018.6 1129.0 2022.3 1142.9C2024.1 1149.7 2027.3 1152.3 2029.1 1159.0C2032.7 1171.9 2032.9 1178.8 2035.9 1191.9C2038.3 1202.0 2039.8 1216.1 2042.8 1216.9C2045.3 1217.6 2048.3 1204.3 2049.6 1195.5C2053.7 1167.5 2053.2 1130.1 2056.4 1124.7C2058.6 1121.1 2061.1 1177.6 2063.2 1173.0C2066.6 1165.4 2067.9 1125.8 2070.0 1094.4C2073.4 1044.1 2074.5 962.4 2076.9 968.6C2079.9 976.7 2079.8 1065.6 2083.7 1130.1C2085.2 1155.6 2085.9 1176.0 2090.5 1193.7C2091.4 1197.2 2095.4 1187.6 2097.3 1183.0C2100.9 1174.1 2102.1 1157.1 2104.1 1159.7C2107.6 1164.3 2108.3 1201.3 2111.0 1200.8C2113.8 1200.3 2113.3 1173.7 2117.8 1157.2C2118.7 1153.7 2123.7 1148.1 2124.6 1150.8C2129.2 1164.8 2129.9 1207.4 2131.4 1199.0C2135.3 1178.1 2135.2 1083.3 2138.2 1077.6C2140.6 1073.0 2140.6 1135.4 2145.1 1173.3C2146.1 1181.8 2149.6 1195.2 2151.9 1193.7C2155.1 1191.6 2156.6 1161.4 2158.7 1164.4C2162.1 1169.4 2162.2 1209.6 2165.5 1213.7C2167.7 1216.4 2168.7 1193.9 2172.3 1181.2C2174.2 1174.7 2175.9 1171.6 2179.2 1165.8C2181.3 1162.0 2182.6 1159.4 2186.0 1157.2C2188.1 1155.9 2190.7 1158.3 2192.8 1156.9C2196.2 1154.7 2199.3 1152.6 2199.6 1148.3C2204.7 1085.9 2203.8 988.1 2206.4 990.1C2209.3 992.2 2208.4 1091.6 2213.3 1158.7C2213.9 1167.1 2217.2 1170.7 2220.1 1178.7C2222.7 1185.9 2223.0 1192.5 2226.9 1196.5C2228.5 1198.2 2231.9 1191.6 2233.7 1193.0C2237.3 1195.5 2238.2 1207.1 2240.5 1206.2C2243.7 1205.0 2245.9 1195.3 2247.4 1187.6C2251.4 1165.8 2250.9 1137.0 2254.2 1132.2C2256.3 1129.1 2258.1 1153.7 2261.0 1168.0C2263.5 1180.4 2266.6 1206.0 2267.8 1199.0C2272.0 1175.2 2269.7 1133.2 2274.6 1090.8C2275.1 1086.7 2280.8 1079.7 2281.5 1082.9C2286.3 1106.5 2283.8 1138.3 2288.3 1158.0C2289.3 1162.3 2294.0 1138.8 2295.1 1142.9C2299.5 1160.2 2298.0 1199.2 2301.9 1211.5C2303.4 1216.3 2305.9 1196.1 2308.7 1185.8C2311.4 1176.4 2313.2 1161.0 2315.6 1162.2C2318.6 1163.8 2321.3 1200.5 2322.4 1193.0C2326.7 1163.3 2326.5 1068.0 2329.2 1069.2C2332.0 1070.4 2332.5 1183.3 2336.0 1199.1C2337.9 1207.5 2340.9 1157.5 2342.8 1129.7C2346.4 1078.9 2347.4 994.1 2349.7 1002.6C2352.8 1014.6 2351.5 1120.6 2356.5 1180.9C2356.9 1186.2 2360.6 1166.7 2363.3 1166.8C2366.1 1167.0 2367.5 1175.7 2370.1 1181.7C2373.0 1188.3 2375.8 1202.6 2376.9 1198.3C2381.3 1181.3 2379.7 1142.8 2383.8 1128.5C2385.1 1123.8 2388.9 1154.4 2390.6 1150.7C2394.4 1142.0 2395.3 1092.8 2397.4 1097.4C2400.7 1104.5 2401.1 1175.3 2404.2 1179.7C2406.6 1183.1 2409.0 1142.0 2411.0 1116.8C2414.5 1073.6 2415.7 1000.3 2417.9 1008.7C2421.1 1021.1 2419.7 1105.3 2424.7 1168.8C2425.2 1175.0 2428.5 1177.5 2431.5 1183.0C2434.0 1187.5 2434.8 1191.2 2438.3 1193.8C2440.2 1195.2 2442.5 1192.8 2445.1 1193.0C2447.9 1193.3 2450.9 1197.1 2452.0 1195.1C2456.3 1187.1 2454.4 1176.7 2458.8 1168.0C2459.9 1165.9 2465.5 1165.4 2465.6 1168.0C2470.9 1269.0 2470.0 1436.9 2472.4 1427.1C2475.4 1415.1 2474.7 1197.9 2479.2 1113.6C2480.1 1097.0 2482.4 1166.3 2486.1 1174.9C2487.9 1179.1 2490.2 1145.0 2492.9 1145.4C2495.7 1145.8 2495.4 1165.2 2499.7 1176.9C2500.9 1180.2 2504.8 1179.9 2506.5 1183.0C2510.2 1189.5 2509.7 1194.4 2513.3 1201.1C2515.2 1204.6 2519.0 1210.9 2520.2 1208.4C2524.5 1198.5 2523.1 1177.1 2527.0 1170.0C2528.5 1167.3 2530.8 1178.4 2533.8 1183.8C2536.3 1188.1 2540.5 1199.0 2540.6 1194.2C2545.9 1028.8 2544.7 758.0 2547.4 758.4C2550.2 758.7 2549.6 1072.9 2554.3 1195.9C2555.1 1217.4 2557.9 1124.7 2561.1 1119.6C2563.4 1116.0 2565.0 1172.4 2567.9 1174.1C2570.4 1175.5 2570.6 1136.9 2574.7 1127.3C2576.1 1124.0 2577.8 1137.2 2581.5 1141.8C2583.2 1143.8 2585.6 1143.5 2588.4 1143.8C2591.0 1144.1 2593.2 1144.9 2595.2 1143.4C2598.6 1140.9 2600.8 1131.0 2602.0 1133.7C2606.2 1143.2 2607.5 1182.3 2608.8 1174.1C2612.9 1149.2 2613.0 1049.5 2615.6 1051.0C2618.5 1052.7 2618.1 1149.7 2622.5 1182.1C2623.5 1189.9 2626.6 1151.5 2629.3 1151.5C2632.0 1151.5 2631.7 1171.3 2636.1 1182.1C2637.1 1184.7 2642.0 1187.1 2642.9 1185.0C2647.4 1174.9 2645.2 1162.6 2649.7 1151.5C2650.6 1149.3 2656.4 1148.9 2656.6 1151.5C2661.8 1221.9 2660.8 1338.6 2663.4 1334.1C2666.3 1328.9 2665.7 1179.8 2670.2 1127.3C2671.2 1115.5 2676.2 1186.2 2677.0 1173.3C2681.6 1102.0 2680.9 925.8 2683.8 916.7C2686.3 909.0 2685.4 1051.3 2690.7 1131.3C2690.9 1134.7 2696.7 1122.5 2697.5 1125.3C2702.1 1141.6 2700.2 1157.8 2704.3 1178.9C2705.7 1186.0 2707.6 1193.2 2711.1 1195.9C2713.0 1197.3 2717.1 1192.7 2717.9 1189.0C2722.5 1169.4 2722.2 1136.3 2724.8 1137.8C2727.7 1139.5 2729.1 1199.1 2731.6 1197.1C2734.5 1194.6 2735.7 1154.7 2738.4 1126.5" fill="none" stroke="rgba(103,234,71,0.17)" stroke-width="3"/><path d="M692.4 1024.7C695.1 1019.5 698.0 1017.3 699.2 1011.6C703.5 991.7 704.3 953.0 706.0 960.7C709.8 977.7 708.4 1028.7 712.9 1073.5C713.8 1083.1 717.6 1099.0 719.7 1096.6C723.1 1092.7 721.9 1069.9 726.5 1057.7C727.4 1055.4 732.3 1062.6 733.3 1060.5C737.7 1051.3 737.8 1027.8 740.1 1029.5C743.2 1031.7 743.7 1066.6 747.0 1070.1C749.1 1072.4 751.5 1054.5 753.8 1044.0C757.0 1028.8 757.7 1006.7 760.6 1005.8C763.2 1004.9 764.2 1036.9 767.4 1039.5C769.6 1041.3 771.7 1025.9 774.2 1016.8C777.1 1006.4 779.5 985.8 781.1 990.6C785.0 1003.1 782.9 1034.4 787.9 1060.1C788.4 1062.7 794.0 1058.7 794.7 1061.2C799.4 1076.8 798.4 1087.6 801.5 1105.2C803.8 1118.2 806.1 1139.8 808.3 1137.5C811.5 1134.3 812.5 1109.9 815.2 1091.4C817.9 1072.6 817.9 1054.2 822.0 1044.3C823.3 1041.0 826.4 1052.6 828.8 1058.4C831.8 1065.7 834.4 1081.4 835.6 1077.0C839.8 1062.2 839.8 1037.2 842.4 1010.6C845.3 981.4 846.2 941.7 849.3 937.7C851.6 934.6 852.2 970.9 856.1 992.7C857.7 1001.6 861.1 1005.5 862.9 1014.4C866.5 1032.2 865.7 1041.8 869.7 1059.4C871.2 1065.7 874.5 1076.0 876.5 1074.2C880.0 1071.1 880.6 1047.3 883.4 1047.0C886.0 1046.8 888.4 1076.7 890.2 1072.8C893.9 1064.6 894.4 1016.0 897.0 1016.8C899.8 1017.6 900.3 1053.0 903.8 1077.0C905.7 1089.9 909.0 1114.4 910.6 1109.0C914.5 1095.8 914.8 1061.9 917.5 1030.5C920.3 996.4 921.7 943.6 924.3 945.2C927.1 947.0 927.1 1021.5 931.1 1039.1C932.6 1045.6 934.4 1009.7 937.9 1005.4C939.8 1003.1 942.8 1015.5 944.7 1022.6C948.2 1035.3 947.9 1050.0 951.6 1055.0C953.3 1057.3 956.3 1046.7 958.4 1040.9C961.7 1031.5 962.1 1018.1 965.2 1016.8C967.6 1015.8 971.1 1040.3 972.0 1035.0C976.6 1008.9 976.2 937.0 978.8 938.3C981.7 939.8 981.4 1000.7 985.7 1041.9C986.9 1053.4 989.8 1058.8 992.5 1070.1C995.3 1081.8 996.9 1100.8 999.3 1099.3C1002.4 1097.4 1005.3 1076.8 1006.1 1061.5C1010.8 970.5 1010.5 823.1 1012.9 833.4C1016.0 846.4 1015.5 1056.3 1019.8 1120.0C1021.0 1138.2 1022.8 1050.7 1026.6 1038.1C1028.3 1032.4 1032.4 1083.5 1033.4 1074.2C1037.8 1033.9 1036.1 947.3 1040.2 914.3C1041.5 903.7 1044.9 944.7 1047.0 965.2C1050.4 997.0 1051.0 1043.8 1053.9 1045.0C1056.5 1046.1 1057.9 971.5 1060.7 971.0C1063.4 970.5 1064.1 1035.5 1067.5 1042.6C1069.6 1046.9 1070.4 1016.4 1074.3 999.6C1075.9 992.9 1079.8 980.1 1081.1 983.8C1085.3 994.9 1084.1 1015.6 1088.0 1036.4C1089.6 1045.0 1091.5 1055.5 1094.8 1057.4C1097.0 1058.6 1099.4 1043.1 1101.6 1044.3C1104.9 1046.1 1106.7 1068.3 1108.4 1064.9C1112.2 1057.6 1113.8 1036.6 1115.2 1017.5C1119.2 966.0 1119.7 882.3 1122.1 888.5C1125.1 896.2 1124.2 1005.8 1128.9 1052.2C1129.7 1060.2 1132.2 1028.0 1135.7 1024.7C1137.7 1022.8 1140.9 1033.0 1142.5 1039.1C1146.3 1053.5 1147.0 1078.2 1149.3 1075.9C1152.5 1072.9 1152.7 1045.9 1156.2 1026.1C1158.1 1014.9 1159.8 1000.6 1163.0 998.5C1165.2 997.1 1167.3 1018.2 1169.8 1017.5C1172.8 1016.6 1172.9 998.1 1176.6 994.4C1178.4 992.6 1181.2 1004.7 1183.4 1003.7C1186.7 1002.2 1189.3 983.7 1190.3 988.2C1194.8 1009.6 1193.0 1036.6 1197.1 1068.4C1198.4 1078.9 1201.0 1083.9 1203.9 1094.2C1206.4 1102.9 1207.3 1113.2 1210.7 1115.8C1212.7 1117.4 1216.4 1109.6 1217.5 1104.5C1221.8 1085.5 1219.7 1070.7 1224.4 1055.6C1225.1 1053.1 1229.6 1062.2 1231.2 1060.5C1235.1 1056.0 1235.1 1040.8 1238.0 1040.2C1240.5 1039.6 1242.9 1059.8 1244.8 1057.4C1248.4 1052.8 1250.0 1036.7 1251.6 1022.6C1255.4 991.3 1255.8 943.0 1258.5 943.8C1261.3 944.8 1262.2 1022.7 1265.3 1027.1C1267.6 1030.5 1270.1 956.4 1272.1 963.5C1275.6 975.9 1274.1 1040.2 1278.9 1075.9C1279.5 1080.3 1284.0 1061.8 1285.7 1063.9C1289.4 1068.2 1288.2 1081.9 1292.6 1091.8C1293.7 1094.3 1297.4 1092.8 1299.4 1094.9C1302.9 1098.6 1305.0 1109.3 1306.2 1106.2C1310.5 1095.0 1308.4 1077.0 1313.0 1059.1C1313.9 1055.6 1319.0 1050.1 1319.8 1052.9C1324.5 1069.0 1323.3 1100.8 1326.7 1106.2C1328.7 1109.5 1329.0 1084.4 1333.5 1074.6C1334.5 1072.4 1337.7 1075.2 1340.3 1076.3C1343.2 1077.5 1344.3 1079.0 1347.1 1080.4C1349.7 1081.7 1351.3 1081.7 1353.9 1082.8C1356.7 1084.0 1359.3 1083.8 1360.8 1086.3C1364.7 1092.9 1365.9 1108.8 1367.6 1105.5C1371.4 1098.2 1371.2 1063.3 1374.4 1059.8C1376.6 1057.4 1379.7 1096.2 1381.2 1090.7C1385.1 1077.2 1385.9 1005.9 1388.0 1012.3C1391.3 1022.0 1390.9 1109.8 1394.9 1131.0C1396.4 1139.2 1399.2 1084.1 1401.7 1085.6C1404.6 1087.3 1404.1 1125.3 1408.5 1138.9C1409.6 1142.2 1414.5 1132.9 1415.3 1127.9C1420.0 1098.3 1418.6 1061.7 1422.1 1052.2C1424.0 1047.2 1427.2 1097.4 1429.0 1091.8C1432.6 1080.2 1433.1 1008.6 1435.8 1009.2C1438.6 1009.8 1440.3 1100.5 1442.6 1094.9C1445.8 1087.0 1445.5 996.0 1449.4 975.5C1451.0 967.3 1453.9 1003.9 1456.2 1023.0C1459.4 1048.4 1460.6 1089.3 1463.1 1086.6C1466.1 1083.3 1466.6 1014.2 1469.9 1008.2C1472.1 1004.1 1472.0 1044.2 1476.7 1061.2C1477.4 1063.7 1480.6 1057.9 1483.5 1057.0C1486.0 1056.3 1488.8 1058.8 1490.3 1057.0C1494.3 1052.4 1495.0 1039.4 1497.2 1040.9C1500.4 1043.0 1499.7 1058.4 1504.0 1066.0C1505.1 1068.0 1509.7 1067.2 1510.8 1064.9C1515.2 1056.1 1513.3 1047.5 1517.6 1038.4C1518.7 1036.1 1523.9 1039.0 1524.4 1036.4C1529.3 1013.4 1528.4 975.3 1531.3 974.5C1533.9 973.7 1534.4 1009.3 1538.1 1032.3C1539.9 1043.6 1542.7 1062.6 1544.9 1060.1C1548.2 1056.4 1548.9 1017.2 1551.7 1016.8C1554.4 1016.4 1555.1 1053.4 1558.5 1058.1C1560.5 1060.7 1562.4 1035.9 1565.4 1035.0C1567.8 1034.3 1568.1 1047.8 1572.2 1053.9C1573.6 1056.1 1577.8 1053.4 1579.0 1055.6C1583.3 1063.7 1582.8 1078.4 1585.8 1079.7C1588.2 1080.8 1591.7 1069.2 1592.6 1061.5C1597.2 1022.3 1596.4 966.6 1599.5 962.4C1601.9 959.0 1602.0 1010.8 1606.3 1042.6C1607.5 1051.4 1609.3 1056.0 1613.1 1063.9C1614.7 1067.3 1617.0 1070.4 1619.9 1070.8C1622.5 1071.1 1625.6 1068.7 1626.7 1065.6C1631.1 1054.0 1631.2 1032.3 1633.6 1034.0C1636.6 1036.1 1636.1 1065.2 1640.4 1075.3C1641.6 1078.0 1645.9 1063.3 1647.2 1066.0C1651.4 1074.8 1651.0 1088.7 1654.0 1103.8C1656.5 1116.2 1659.6 1141.6 1660.8 1134.8C1665.0 1112.5 1663.8 1047.9 1667.7 1031.2C1669.3 1024.1 1671.5 1057.7 1674.5 1075.3C1677.0 1090.0 1677.9 1108.2 1681.3 1112.1C1683.3 1114.4 1685.7 1099.4 1688.1 1090.7C1691.1 1080.1 1691.2 1068.1 1694.9 1063.9C1696.7 1061.9 1701.0 1070.1 1701.8 1075.3C1706.5 1108.8 1706.4 1168.0 1708.6 1160.8C1711.9 1149.8 1711.8 1045.9 1715.4 1029.8C1717.3 1021.3 1720.1 1105.5 1722.2 1099.3C1725.6 1089.6 1726.4 987.8 1729.0 989.9C1731.9 992.3 1732.1 1092.8 1735.9 1110.7C1737.6 1118.9 1739.5 1077.4 1742.7 1055.3C1744.9 1039.8 1747.9 1010.5 1749.5 1016.8C1753.3 1031.5 1752.4 1091.5 1756.3 1107.9C1757.8 1114.2 1760.6 1072.6 1763.1 1073.5C1766.1 1074.6 1766.7 1110.0 1770.0 1113.1C1772.2 1115.2 1774.3 1097.3 1776.8 1086.6C1779.8 1073.9 1780.7 1055.6 1783.6 1054.6C1786.1 1053.8 1789.3 1088.9 1790.4 1082.1C1794.8 1055.5 1794.7 967.5 1797.2 971.0C1800.2 975.1 1800.5 1085.9 1804.1 1101.1C1806.0 1109.4 1807.8 1033.9 1810.9 1029.8C1813.2 1026.8 1813.8 1062.1 1817.7 1083.2C1819.2 1091.3 1821.7 1102.4 1824.5 1102.8C1827.1 1103.1 1827.8 1087.6 1831.3 1084.9C1833.2 1083.5 1837.1 1095.0 1838.2 1092.5C1842.5 1082.3 1841.4 1058.0 1845.0 1052.9C1846.9 1050.2 1850.7 1077.8 1851.8 1072.8C1856.1 1054.1 1854.6 1008.6 1858.6 993.7C1860.1 988.3 1864.3 1010.4 1865.4 1021.9C1869.8 1065.3 1868.8 1118.9 1872.3 1131.0C1874.2 1137.9 1876.3 1069.9 1879.1 1069.4C1881.8 1068.9 1881.7 1105.3 1885.9 1128.6C1887.1 1135.2 1888.8 1139.6 1892.7 1144.1C1894.3 1145.8 1898.7 1146.3 1899.5 1144.1C1904.2 1130.8 1903.4 1120.7 1906.4 1105.2C1908.9 1092.1 1908.7 1084.0 1913.2 1072.5C1914.2 1070.0 1919.4 1072.8 1920.0 1070.1C1924.9 1048.0 1923.0 1020.6 1926.8 1010.6C1928.4 1006.4 1932.8 1041.5 1933.6 1034.7C1938.2 998.9 1937.6 906.8 1940.5 903.9C1943.0 901.3 1943.1 974.3 1947.3 1020.9C1948.6 1035.3 1950.5 1042.4 1954.1 1056.3C1955.9 1063.2 1957.0 1068.6 1960.9 1072.8C1962.5 1074.5 1965.3 1072.4 1967.7 1071.1C1970.7 1069.6 1973.3 1069.0 1974.6 1066.0C1978.8 1055.9 1977.5 1043.6 1981.4 1038.4C1983.0 1036.3 1985.5 1047.8 1988.2 1047.7C1991.0 1047.7 1992.3 1041.9 1995.0 1038.1C1997.7 1034.4 2001.5 1033.4 2001.8 1028.8C2006.9 963.3 2005.6 871.1 2008.7 863.0C2011.1 856.7 2010.8 941.2 2015.5 992.7C2016.2 1000.7 2020.7 1003.8 2022.3 1011.6C2026.2 1031.3 2026.7 1041.5 2029.1 1061.5C2032.1 1086.2 2031.6 1099.1 2035.9 1123.4C2037.1 1130.0 2041.1 1141.6 2042.8 1138.9C2046.5 1132.7 2048.0 1116.3 2049.6 1101.1C2053.5 1063.4 2053.0 1015.6 2056.4 1006.5C2058.5 1000.9 2060.1 1061.0 2063.2 1064.2C2065.6 1066.7 2068.8 1038.4 2070.0 1020.9C2074.2 963.3 2074.0 880.2 2076.9 876.4C2079.4 873.1 2079.9 952.5 2083.7 1003.0C2085.4 1026.1 2088.0 1037.5 2090.5 1060.5C2093.4 1087.3 2094.4 1126.0 2097.3 1127.5C2099.9 1128.9 2100.9 1072.2 2104.1 1067.7C2106.4 1064.6 2109.0 1113.5 2111.0 1108.6C2114.5 1099.6 2112.9 1057.7 2117.8 1032.9C2118.4 1029.9 2123.5 1035.7 2124.6 1039.1C2129.0 1053.3 2129.8 1083.5 2131.4 1077.0C2135.3 1061.2 2135.4 985.1 2138.2 983.4C2140.8 981.9 2141.1 1053.7 2145.1 1069.1C2146.6 1075.0 2148.6 1049.5 2151.9 1036.7C2154.1 1028.2 2157.6 1010.3 2158.7 1015.7C2163.1 1038.7 2161.3 1087.7 2165.5 1107.9C2166.8 1113.9 2169.8 1092.1 2172.3 1081.4C2175.3 1069.0 2176.1 1062.6 2179.2 1050.1C2181.6 1040.2 2183.6 1023.8 2186.0 1025.4C2189.1 1027.4 2190.1 1059.4 2192.8 1059.1C2195.6 1058.7 2198.6 1038.0 2199.6 1023.7C2204.0 962.2 2204.0 863.9 2206.4 869.5C2209.4 876.3 2209.7 1033.3 2213.3 1054.6C2215.2 1066.4 2217.8 946.2 2220.1 952.4C2223.2 960.9 2221.9 1044.6 2226.9 1091.4C2227.4 1095.8 2230.6 1081.4 2233.7 1080.4C2236.1 1079.7 2239.1 1083.8 2240.5 1087.3C2244.5 1096.9 2246.3 1119.6 2247.4 1113.1C2251.7 1087.2 2250.1 1027.7 2254.2 1006.5C2255.6 999.3 2258.7 1027.6 2261.0 1041.9C2264.2 1061.8 2266.3 1100.7 2267.8 1091.8C2271.8 1068.6 2269.7 1004.8 2274.6 961.7C2275.1 957.4 2280.6 967.9 2281.5 973.1C2286.0 998.9 2284.3 1027.2 2288.3 1039.1C2289.8 1043.7 2293.9 1008.5 2295.1 1014.4C2299.4 1035.1 2298.0 1089.1 2301.9 1105.5C2303.4 1111.8 2305.8 1084.9 2308.7 1071.1C2311.3 1059.0 2313.4 1038.3 2315.6 1040.9C2318.8 1044.7 2321.1 1097.1 2322.4 1087.3C2326.5 1056.2 2326.5 937.7 2329.2 938.7C2332.0 939.7 2332.3 1069.0 2336.0 1092.5C2337.7 1103.0 2340.9 1051.2 2342.8 1023.7C2346.4 972.8 2347.4 887.5 2349.7 896.4C2352.9 909.1 2351.8 1026.3 2356.5 1077.7C2357.3 1086.5 2360.8 1046.1 2363.3 1047.0C2366.2 1048.2 2365.8 1069.3 2370.1 1082.8C2371.3 1086.5 2376.3 1093.2 2376.9 1090.0C2381.7 1067.2 2380.0 1028.6 2383.8 1017.8C2385.5 1012.8 2388.1 1051.7 2390.6 1050.5C2393.6 1049.0 2395.3 1006.9 2397.4 1010.9C2400.8 1017.5 2401.5 1076.8 2404.2 1077.0C2406.9 1077.1 2409.2 1037.8 2411.0 1011.6C2414.7 958.3 2415.6 869.2 2417.9 878.1C2421.0 890.6 2419.8 1006.9 2424.7 1064.9C2425.3 1072.4 2429.9 1038.0 2431.5 1041.9C2435.3 1051.0 2433.7 1081.5 2438.3 1097.6C2439.2 1100.6 2442.4 1092.9 2445.1 1089.7C2447.9 1086.4 2449.7 1085.1 2452.0 1081.4C2455.2 1076.3 2455.0 1071.5 2458.8 1067.7C2460.5 1066.0 2465.5 1065.0 2465.6 1067.7C2471.0 1203.7 2469.9 1423.8 2472.4 1414.5C2475.3 1403.9 2474.4 1142.7 2479.2 1017.8C2479.8 1002.8 2483.2 1064.1 2486.1 1064.9C2488.7 1065.7 2489.6 1025.7 2492.9 1021.9C2495.0 1019.5 2497.3 1038.4 2499.7 1049.5C2502.7 1063.4 2502.3 1071.2 2506.5 1084.5C2507.8 1088.4 2510.3 1089.7 2513.3 1092.5C2515.7 1094.6 2519.3 1099.4 2520.2 1096.9C2524.8 1083.2 2524.3 1051.5 2527.0 1051.9C2529.8 1052.2 2531.0 1097.7 2533.8 1098.5C2536.4 1099.3 2540.1 1073.1 2540.6 1055.9C2545.5 896.7 2544.8 650.8 2547.4 657.4C2550.3 664.5 2549.9 988.5 2554.3 1090.0C2555.4 1116.5 2558.1 981.1 2561.1 977.3C2563.6 974.1 2564.0 1055.4 2567.9 1072.6C2569.4 1079.1 2571.9 1051.0 2574.7 1036.6C2577.3 1023.2 2578.7 1004.0 2581.5 1003.2C2584.1 1002.5 2585.6 1032.6 2588.4 1032.9C2591.0 1033.2 2591.0 1011.5 2595.2 1004.7C2596.5 1002.6 2600.6 1007.4 2602.0 1010.7C2606.1 1020.2 2607.6 1042.5 2608.8 1036.6C2613.0 1016.4 2613.3 939.6 2615.6 945.4C2618.8 953.3 2617.7 1033.8 2622.5 1070.7C2623.2 1076.5 2626.3 1059.5 2629.3 1052.2C2631.8 1045.9 2634.6 1033.3 2636.1 1036.6C2640.1 1045.6 2639.3 1076.6 2642.9 1083.0C2644.7 1086.1 2645.5 1067.4 2649.7 1060.3C2651.0 1058.3 2656.3 1057.7 2656.6 1060.3C2661.8 1125.3 2661.1 1241.2 2663.4 1229.3C2666.6 1212.4 2666.1 1038.2 2670.2 988.4C2671.5 972.5 2675.8 1082.6 2677.0 1065.2C2681.3 1002.2 2681.1 786.5 2683.8 787.3C2686.6 788.0 2685.6 970.5 2690.7 1068.9C2691.0 1075.8 2694.0 1052.9 2697.5 1050.3C2699.4 1048.9 2702.9 1054.8 2704.3 1058.9C2708.3 1070.1 2707.3 1083.3 2711.1 1088.5C2712.8 1090.7 2716.8 1082.4 2717.9 1077.4C2722.2 1058.7 2722.5 1025.7 2724.8 1029.2C2728.0 1034.2 2729.4 1104.4 2731.6 1098.5C2734.9 1089.6 2735.7 1034.7 2738.4 992.1" fill="none" stroke="rgba(103,234,71,0.18)" stroke-width="7"/><path d="M692.4 1024.7C695.1 1019.5 698.0 1017.3 699.2 1011.6C703.5 991.7 704.3 953.0 706.0 960.7C709.8 977.7 708.4 1028.7 712.9 1073.5C713.8 1083.1 717.6 1099.0 719.7 1096.6C723.1 1092.7 721.9 1069.9 726.5 1057.7C727.4 1055.4 732.3 1062.6 733.3 1060.5C737.7 1051.3 737.8 1027.8 740.1 1029.5C743.2 1031.7 743.7 1066.6 747.0 1070.1C749.1 1072.4 751.5 1054.5 753.8 1044.0C757.0 1028.8 757.7 1006.7 760.6 1005.8C763.2 1004.9 764.2 1036.9 767.4 1039.5C769.6 1041.3 771.7 1025.9 774.2 1016.8C777.1 1006.4 779.5 985.8 781.1 990.6C785.0 1003.1 782.9 1034.4 787.9 1060.1C788.4 1062.7 794.0 1058.7 794.7 1061.2C799.4 1076.8 798.4 1087.6 801.5 1105.2C803.8 1118.2 806.1 1139.8 808.3 1137.5C811.5 1134.3 812.5 1109.9 815.2 1091.4C817.9 1072.6 817.9 1054.2 822.0 1044.3C823.3 1041.0 826.4 1052.6 828.8 1058.4C831.8 1065.7 834.4 1081.4 835.6 1077.0C839.8 1062.2 839.8 1037.2 842.4 1010.6C845.3 981.4 846.2 941.7 849.3 937.7C851.6 934.6 852.2 970.9 856.1 992.7C857.7 1001.6 861.1 1005.5 862.9 1014.4C866.5 1032.2 865.7 1041.8 869.7 1059.4C871.2 1065.7 874.5 1076.0 876.5 1074.2C880.0 1071.1 880.6 1047.3 883.4 1047.0C886.0 1046.8 888.4 1076.7 890.2 1072.8C893.9 1064.6 894.4 1016.0 897.0 1016.8C899.8 1017.6 900.3 1053.0 903.8 1077.0C905.7 1089.9 909.0 1114.4 910.6 1109.0C914.5 1095.8 914.8 1061.9 917.5 1030.5C920.3 996.4 921.7 943.6 924.3 945.2C927.1 947.0 927.1 1021.5 931.1 1039.1C932.6 1045.6 934.4 1009.7 937.9 1005.4C939.8 1003.1 942.8 1015.5 944.7 1022.6C948.2 1035.3 947.9 1050.0 951.6 1055.0C953.3 1057.3 956.3 1046.7 958.4 1040.9C961.7 1031.5 962.1 1018.1 965.2 1016.8C967.6 1015.8 971.1 1040.3 972.0 1035.0C976.6 1008.9 976.2 937.0 978.8 938.3C981.7 939.8 981.4 1000.7 985.7 1041.9C986.9 1053.4 989.8 1058.8 992.5 1070.1C995.3 1081.8 996.9 1100.8 999.3 1099.3C1002.4 1097.4 1005.3 1076.8 1006.1 1061.5C1010.8 970.5 1010.5 823.1 1012.9 833.4C1016.0 846.4 1015.5 1056.3 1019.8 1120.0C1021.0 1138.2 1022.8 1050.7 1026.6 1038.1C1028.3 1032.4 1032.4 1083.5 1033.4 1074.2C1037.8 1033.9 1036.1 947.3 1040.2 914.3C1041.5 903.7 1044.9 944.7 1047.0 965.2C1050.4 997.0 1051.0 1043.8 1053.9 1045.0C1056.5 1046.1 1057.9 971.5 1060.7 971.0C1063.4 970.5 1064.1 1035.5 1067.5 1042.6C1069.6 1046.9 1070.4 1016.4 1074.3 999.6C1075.9 992.9 1079.8 980.1 1081.1 983.8C1085.3 994.9 1084.1 1015.6 1088.0 1036.4C1089.6 1045.0 1091.5 1055.5 1094.8 1057.4C1097.0 1058.6 1099.4 1043.1 1101.6 1044.3C1104.9 1046.1 1106.7 1068.3 1108.4 1064.9C1112.2 1057.6 1113.8 1036.6 1115.2 1017.5C1119.2 966.0 1119.7 882.3 1122.1 888.5C1125.1 896.2 1124.2 1005.8 1128.9 1052.2C1129.7 1060.2 1132.2 1028.0 1135.7 1024.7C1137.7 1022.8 1140.9 1033.0 1142.5 1039.1C1146.3 1053.5 1147.0 1078.2 1149.3 1075.9C1152.5 1072.9 1152.7 1045.9 1156.2 1026.1C1158.1 1014.9 1159.8 1000.6 1163.0 998.5C1165.2 997.1 1167.3 1018.2 1169.8 1017.5C1172.8 1016.6 1172.9 998.1 1176.6 994.4C1178.4 992.6 1181.2 1004.7 1183.4 1003.7C1186.7 1002.2 1189.3 983.7 1190.3 988.2C1194.8 1009.6 1193.0 1036.6 1197.1 1068.4C1198.4 1078.9 1201.0 1083.9 1203.9 1094.2C1206.4 1102.9 1207.3 1113.2 1210.7 1115.8C1212.7 1117.4 1216.4 1109.6 1217.5 1104.5C1221.8 1085.5 1219.7 1070.7 1224.4 1055.6C1225.1 1053.1 1229.6 1062.2 1231.2 1060.5C1235.1 1056.0 1235.1 1040.8 1238.0 1040.2C1240.5 1039.6 1242.9 1059.8 1244.8 1057.4C1248.4 1052.8 1250.0 1036.7 1251.6 1022.6C1255.4 991.3 1255.8 943.0 1258.5 943.8C1261.3 944.8 1262.2 1022.7 1265.3 1027.1C1267.6 1030.5 1270.1 956.4 1272.1 963.5C1275.6 975.9 1274.1 1040.2 1278.9 1075.9C1279.5 1080.3 1284.0 1061.8 1285.7 1063.9C1289.4 1068.2 1288.2 1081.9 1292.6 1091.8C1293.7 1094.3 1297.4 1092.8 1299.4 1094.9C1302.9 1098.6 1305.0 1109.3 1306.2 1106.2C1310.5 1095.0 1308.4 1077.0 1313.0 1059.1C1313.9 1055.6 1319.0 1050.1 1319.8 1052.9C1324.5 1069.0 1323.3 1100.8 1326.7 1106.2C1328.7 1109.5 1329.0 1084.4 1333.5 1074.6C1334.5 1072.4 1337.7 1075.2 1340.3 1076.3C1343.2 1077.5 1344.3 1079.0 1347.1 1080.4C1349.7 1081.7 1351.3 1081.7 1353.9 1082.8C1356.7 1084.0 1359.3 1083.8 1360.8 1086.3C1364.7 1092.9 1365.9 1108.8 1367.6 1105.5C1371.4 1098.2 1371.2 1063.3 1374.4 1059.8C1376.6 1057.4 1379.7 1096.2 1381.2 1090.7C1385.1 1077.2 1385.9 1005.9 1388.0 1012.3C1391.3 1022.0 1390.9 1109.8 1394.9 1131.0C1396.4 1139.2 1399.2 1084.1 1401.7 1085.6C1404.6 1087.3 1404.1 1125.3 1408.5 1138.9C1409.6 1142.2 1414.5 1132.9 1415.3 1127.9C1420.0 1098.3 1418.6 1061.7 1422.1 1052.2C1424.0 1047.2 1427.2 1097.4 1429.0 1091.8C1432.6 1080.2 1433.1 1008.6 1435.8 1009.2C1438.6 1009.8 1440.3 1100.5 1442.6 1094.9C1445.8 1087.0 1445.5 996.0 1449.4 975.5C1451.0 967.3 1453.9 1003.9 1456.2 1023.0C1459.4 1048.4 1460.6 1089.3 1463.1 1086.6C1466.1 1083.3 1466.6 1014.2 1469.9 1008.2C1472.1 1004.1 1472.0 1044.2 1476.7 1061.2C1477.4 1063.7 1480.6 1057.9 1483.5 1057.0C1486.0 1056.3 1488.8 1058.8 1490.3 1057.0C1494.3 1052.4 1495.0 1039.4 1497.2 1040.9C1500.4 1043.0 1499.7 1058.4 1504.0 1066.0C1505.1 1068.0 1509.7 1067.2 1510.8 1064.9C1515.2 1056.1 1513.3 1047.5 1517.6 1038.4C1518.7 1036.1 1523.9 1039.0 1524.4 1036.4C1529.3 1013.4 1528.4 975.3 1531.3 974.5C1533.9 973.7 1534.4 1009.3 1538.1 1032.3C1539.9 1043.6 1542.7 1062.6 1544.9 1060.1C1548.2 1056.4 1548.9 1017.2 1551.7 1016.8C1554.4 1016.4 1555.1 1053.4 1558.5 1058.1C1560.5 1060.7 1562.4 1035.9 1565.4 1035.0C1567.8 1034.3 1568.1 1047.8 1572.2 1053.9C1573.6 1056.1 1577.8 1053.4 1579.0 1055.6C1583.3 1063.7 1582.8 1078.4 1585.8 1079.7C1588.2 1080.8 1591.7 1069.2 1592.6 1061.5C1597.2 1022.3 1596.4 966.6 1599.5 962.4C1601.9 959.0 1602.0 1010.8 1606.3 1042.6C1607.5 1051.4 1609.3 1056.0 1613.1 1063.9C1614.7 1067.3 1617.0 1070.4 1619.9 1070.8C1622.5 1071.1 1625.6 1068.7 1626.7 1065.6C1631.1 1054.0 1631.2 1032.3 1633.6 1034.0C1636.6 1036.1 1636.1 1065.2 1640.4 1075.3C1641.6 1078.0 1645.9 1063.3 1647.2 1066.0C1651.4 1074.8 1651.0 1088.7 1654.0 1103.8C1656.5 1116.2 1659.6 1141.6 1660.8 1134.8C1665.0 1112.5 1663.8 1047.9 1667.7 1031.2C1669.3 1024.1 1671.5 1057.7 1674.5 1075.3C1677.0 1090.0 1677.9 1108.2 1681.3 1112.1C1683.3 1114.4 1685.7 1099.4 1688.1 1090.7C1691.1 1080.1 1691.2 1068.1 1694.9 1063.9C1696.7 1061.9 1701.0 1070.1 1701.8 1075.3C1706.5 1108.8 1706.4 1168.0 1708.6 1160.8C1711.9 1149.8 1711.8 1045.9 1715.4 1029.8C1717.3 1021.3 1720.1 1105.5 1722.2 1099.3C1725.6 1089.6 1726.4 987.8 1729.0 989.9C1731.9 992.3 1732.1 1092.8 1735.9 1110.7C1737.6 1118.9 1739.5 1077.4 1742.7 1055.3C1744.9 1039.8 1747.9 1010.5 1749.5 1016.8C1753.3 1031.5 1752.4 1091.5 1756.3 1107.9C1757.8 1114.2 1760.6 1072.6 1763.1 1073.5C1766.1 1074.6 1766.7 1110.0 1770.0 1113.1C1772.2 1115.2 1774.3 1097.3 1776.8 1086.6C1779.8 1073.9 1780.7 1055.6 1783.6 1054.6C1786.1 1053.8 1789.3 1088.9 1790.4 1082.1C1794.8 1055.5 1794.7 967.5 1797.2 971.0C1800.2 975.1 1800.5 1085.9 1804.1 1101.1C1806.0 1109.4 1807.8 1033.9 1810.9 1029.8C1813.2 1026.8 1813.8 1062.1 1817.7 1083.2C1819.2 1091.3 1821.7 1102.4 1824.5 1102.8C1827.1 1103.1 1827.8 1087.6 1831.3 1084.9C1833.2 1083.5 1837.1 1095.0 1838.2 1092.5C1842.5 1082.3 1841.4 1058.0 1845.0 1052.9C1846.9 1050.2 1850.7 1077.8 1851.8 1072.8C1856.1 1054.1 1854.6 1008.6 1858.6 993.7C1860.1 988.3 1864.3 1010.4 1865.4 1021.9C1869.8 1065.3 1868.8 1118.9 1872.3 1131.0C1874.2 1137.9 1876.3 1069.9 1879.1 1069.4C1881.8 1068.9 1881.7 1105.3 1885.9 1128.6C1887.1 1135.2 1888.8 1139.6 1892.7 1144.1C1894.3 1145.8 1898.7 1146.3 1899.5 1144.1C1904.2 1130.8 1903.4 1120.7 1906.4 1105.2C1908.9 1092.1 1908.7 1084.0 1913.2 1072.5C1914.2 1070.0 1919.4 1072.8 1920.0 1070.1C1924.9 1048.0 1923.0 1020.6 1926.8 1010.6C1928.4 1006.4 1932.8 1041.5 1933.6 1034.7C1938.2 998.9 1937.6 906.8 1940.5 903.9C1943.0 901.3 1943.1 974.3 1947.3 1020.9C1948.6 1035.3 1950.5 1042.4 1954.1 1056.3C1955.9 1063.2 1957.0 1068.6 1960.9 1072.8C1962.5 1074.5 1965.3 1072.4 1967.7 1071.1C1970.7 1069.6 1973.3 1069.0 1974.6 1066.0C1978.8 1055.9 1977.5 1043.6 1981.4 1038.4C1983.0 1036.3 1985.5 1047.8 1988.2 1047.7C1991.0 1047.7 1992.3 1041.9 1995.0 1038.1C1997.7 1034.4 2001.5 1033.4 2001.8 1028.8C2006.9 963.3 2005.6 871.1 2008.7 863.0C2011.1 856.7 2010.8 941.2 2015.5 992.7C2016.2 1000.7 2020.7 1003.8 2022.3 1011.6C2026.2 1031.3 2026.7 1041.5 2029.1 1061.5C2032.1 1086.2 2031.6 1099.1 2035.9 1123.4C2037.1 1130.0 2041.1 1141.6 2042.8 1138.9C2046.5 1132.7 2048.0 1116.3 2049.6 1101.1C2053.5 1063.4 2053.0 1015.6 2056.4 1006.5C2058.5 1000.9 2060.1 1061.0 2063.2 1064.2C2065.6 1066.7 2068.8 1038.4 2070.0 1020.9C2074.2 963.3 2074.0 880.2 2076.9 876.4C2079.4 873.1 2079.9 952.5 2083.7 1003.0C2085.4 1026.1 2088.0 1037.5 2090.5 1060.5C2093.4 1087.3 2094.4 1126.0 2097.3 1127.5C2099.9 1128.9 2100.9 1072.2 2104.1 1067.7C2106.4 1064.6 2109.0 1113.5 2111.0 1108.6C2114.5 1099.6 2112.9 1057.7 2117.8 1032.9C2118.4 1029.9 2123.5 1035.7 2124.6 1039.1C2129.0 1053.3 2129.8 1083.5 2131.4 1077.0C2135.3 1061.2 2135.4 985.1 2138.2 983.4C2140.8 981.9 2141.1 1053.7 2145.1 1069.1C2146.6 1075.0 2148.6 1049.5 2151.9 1036.7C2154.1 1028.2 2157.6 1010.3 2158.7 1015.7C2163.1 1038.7 2161.3 1087.7 2165.5 1107.9C2166.8 1113.9 2169.8 1092.1 2172.3 1081.4C2175.3 1069.0 2176.1 1062.6 2179.2 1050.1C2181.6 1040.2 2183.6 1023.8 2186.0 1025.4C2189.1 1027.4 2190.1 1059.4 2192.8 1059.1C2195.6 1058.7 2198.6 1038.0 2199.6 1023.7C2204.0 962.2 2204.0 863.9 2206.4 869.5C2209.4 876.3 2209.7 1033.3 2213.3 1054.6C2215.2 1066.4 2217.8 946.2 2220.1 952.4C2223.2 960.9 2221.9 1044.6 2226.9 1091.4C2227.4 1095.8 2230.6 1081.4 2233.7 1080.4C2236.1 1079.7 2239.1 1083.8 2240.5 1087.3C2244.5 1096.9 2246.3 1119.6 2247.4 1113.1C2251.7 1087.2 2250.1 1027.7 2254.2 1006.5C2255.6 999.3 2258.7 1027.6 2261.0 1041.9C2264.2 1061.8 2266.3 1100.7 2267.8 1091.8C2271.8 1068.6 2269.7 1004.8 2274.6 961.7C2275.1 957.4 2280.6 967.9 2281.5 973.1C2286.0 998.9 2284.3 1027.2 2288.3 1039.1C2289.8 1043.7 2293.9 1008.5 2295.1 1014.4C2299.4 1035.1 2298.0 1089.1 2301.9 1105.5C2303.4 1111.8 2305.8 1084.9 2308.7 1071.1C2311.3 1059.0 2313.4 1038.3 2315.6 1040.9C2318.8 1044.7 2321.1 1097.1 2322.4 1087.3C2326.5 1056.2 2326.5 937.7 2329.2 938.7C2332.0 939.7 2332.3 1069.0 2336.0 1092.5C2337.7 1103.0 2340.9 1051.2 2342.8 1023.7C2346.4 972.8 2347.4 887.5 2349.7 896.4C2352.9 909.1 2351.8 1026.3 2356.5 1077.7C2357.3 1086.5 2360.8 1046.1 2363.3 1047.0C2366.2 1048.2 2365.8 1069.3 2370.1 1082.8C2371.3 1086.5 2376.3 1093.2 2376.9 1090.0C2381.7 1067.2 2380.0 1028.6 2383.8 1017.8C2385.5 1012.8 2388.1 1051.7 2390.6 1050.5C2393.6 1049.0 2395.3 1006.9 2397.4 1010.9C2400.8 1017.5 2401.5 1076.8 2404.2 1077.0C2406.9 1077.1 2409.2 1037.8 2411.0 1011.6C2414.7 958.3 2415.6 869.2 2417.9 878.1C2421.0 890.6 2419.8 1006.9 2424.7 1064.9C2425.3 1072.4 2429.9 1038.0 2431.5 1041.9C2435.3 1051.0 2433.7 1081.5 2438.3 1097.6C2439.2 1100.6 2442.4 1092.9 2445.1 1089.7C2447.9 1086.4 2449.7 1085.1 2452.0 1081.4C2455.2 1076.3 2455.0 1071.5 2458.8 1067.7C2460.5 1066.0 2465.5 1065.0 2465.6 1067.7C2471.0 1203.7 2469.9 1423.8 2472.4 1414.5C2475.3 1403.9 2474.4 1142.7 2479.2 1017.8C2479.8 1002.8 2483.2 1064.1 2486.1 1064.9C2488.7 1065.7 2489.6 1025.7 2492.9 1021.9C2495.0 1019.5 2497.3 1038.4 2499.7 1049.5C2502.7 1063.4 2502.3 1071.2 2506.5 1084.5C2507.8 1088.4 2510.3 1089.7 2513.3 1092.5C2515.7 1094.6 2519.3 1099.4 2520.2 1096.9C2524.8 1083.2 2524.3 1051.5 2527.0 1051.9C2529.8 1052.2 2531.0 1097.7 2533.8 1098.5C2536.4 1099.3 2540.1 1073.1 2540.6 1055.9C2545.5 896.7 2544.8 650.8 2547.4 657.4C2550.3 664.5 2549.9 988.5 2554.3 1090.0C2555.4 1116.5 2558.1 981.1 2561.1 977.3C2563.6 974.1 2564.0 1055.4 2567.9 1072.6C2569.4 1079.1 2571.9 1051.0 2574.7 1036.6C2577.3 1023.2 2578.7 1004.0 2581.5 1003.2C2584.1 1002.5 2585.6 1032.6 2588.4 1032.9C2591.0 1033.2 2591.0 1011.5 2595.2 1004.7C2596.5 1002.6 2600.6 1007.4 2602.0 1010.7C2606.1 1020.2 2607.6 1042.5 2608.8 1036.6C2613.0 1016.4 2613.3 939.6 2615.6 945.4C2618.8 953.3 2617.7 1033.8 2622.5 1070.7C2623.2 1076.5 2626.3 1059.5 2629.3 1052.2C2631.8 1045.9 2634.6 1033.3 2636.1 1036.6C2640.1 1045.6 2639.3 1076.6 2642.9 1083.0C2644.7 1086.1 2645.5 1067.4 2649.7 1060.3C2651.0 1058.3 2656.3 1057.7 2656.6 1060.3C2661.8 1125.3 2661.1 1241.2 2663.4 1229.3C2666.6 1212.4 2666.1 1038.2 2670.2 988.4C2671.5 972.5 2675.8 1082.6 2677.0 1065.2C2681.3 1002.2 2681.1 786.5 2683.8 787.3C2686.6 788.0 2685.6 970.5 2690.7 1068.9C2691.0 1075.8 2694.0 1052.9 2697.5 1050.3C2699.4 1048.9 2702.9 1054.8 2704.3 1058.9C2708.3 1070.1 2707.3 1083.3 2711.1 1088.5C2712.8 1090.7 2716.8 1082.4 2717.9 1077.4C2722.2 1058.7 2722.5 1025.7 2724.8 1029.2C2728.0 1034.2 2729.4 1104.4 2731.6 1098.5C2734.9 1089.6 2735.7 1034.7 2738.4 992.1" fill="none" stroke="rgba(103,234,71,0.17)" stroke-width="3"/><g fill="#fff" stroke="rgba(103,234,71,0.16)" stroke-width="1.6"><circle cx="692.4" cy="1275.8" r="2.2"/><circle cx="699.2" cy="1252.6" r="2.2"/><circle cx="706.0" cy="1215.1" r="2.2"/><circle cx="712.9" cy="1280.5" r="2.2"/><circle cx="719.7" cy="1298.3" r="2.2"/><circle cx="726.5" cy="1298.3" r="2.2"/><circle cx="733.3" cy="1276.5" r="2.2"/><circle cx="740.1" cy="1250.8" r="2.2"/><circle cx="747.0" cy="1287.6" r="2.2"/><circle cx="753.8" cy="1275.1" r="2.2"/><circle cx="760.6" cy="1271.2" r="2.2"/><circle cx="767.4" cy="1248.3" r="2.2"/><circle cx="774.2" cy="1258.0" r="2.2"/><circle cx="781.1" cy="1195.5" r="2.2"/><circle cx="787.9" cy="1291.9" r="2.2"/><circle cx="794.7" cy="1268.7" r="2.2"/><circle cx="801.5" cy="1281.9" r="2.2"/><circle cx="808.3" cy="1299.0" r="2.2"/><circle cx="815.2" cy="1289.0" r="2.2"/><circle cx="822.0" cy="1257.3" r="2.2"/><circle cx="828.8" cy="1264.0" r="2.2"/><circle cx="835.6" cy="1253.3" r="2.2"/><circle cx="842.4" cy="1275.8" r="2.2"/><circle cx="849.3" cy="1179.4" r="2.2"/><circle cx="856.1" cy="1235.1" r="2.2"/><circle cx="862.9" cy="1233.3" r="2.2"/><circle cx="869.7" cy="1289.0" r="2.2"/><circle cx="876.5" cy="1298.3" r="2.2"/><circle cx="883.4" cy="1276.5" r="2.2"/><circle cx="890.2" cy="1311.5" r="2.2"/><circle cx="897.0" cy="1282.3" r="2.2"/><circle cx="903.8" cy="1290.1" r="2.2"/><circle cx="910.6" cy="1304.4" r="2.2"/><circle cx="917.5" cy="1249.0" r="2.2"/><circle cx="924.3" cy="1195.5" r="2.2"/><circle cx="931.1" cy="1267.6" r="2.2"/><circle cx="937.9" cy="1248.0" r="2.2"/><circle cx="944.7" cy="1244.8" r="2.2"/><circle cx="951.6" cy="1275.1" r="2.2"/><circle cx="958.4" cy="1277.6" r="2.2"/><circle cx="965.2" cy="1275.1" r="2.2"/><circle cx="972.0" cy="1260.5" r="2.2"/><circle cx="978.8" cy="1162.6" r="2.2"/><circle cx="985.7" cy="1276.5" r="2.2"/><circle cx="992.5" cy="1294.4" r="2.2"/><circle cx="999.3" cy="1298.3" r="2.2"/><circle cx="1006.1" cy="1275.1" r="2.2"/><circle cx="1012.9" cy="1293.0" r="2.2"/><circle cx="1019.8" cy="1298.0" r="2.2"/><circle cx="1026.6" cy="1259.8" r="2.2"/><circle cx="1033.4" cy="1289.4" r="2.2"/><circle cx="1040.2" cy="1164.0" r="2.2"/><circle cx="1047.0" cy="1192.6" r="2.2"/><circle cx="1053.9" cy="1275.1" r="2.2"/><circle cx="1060.7" cy="1266.9" r="2.2"/><circle cx="1067.5" cy="1276.5" r="2.2"/><circle cx="1074.3" cy="1240.1" r="2.2"/><circle cx="1081.1" cy="1240.1" r="2.2"/><circle cx="1088.0" cy="1291.9" r="2.2"/><circle cx="1094.8" cy="1284.8" r="2.2"/><circle cx="1101.6" cy="1272.3" r="2.2"/><circle cx="1108.4" cy="1291.9" r="2.2"/><circle cx="1115.2" cy="1263.3" r="2.2"/><circle cx="1122.1" cy="1158.7" r="2.2"/><circle cx="1128.9" cy="1275.8" r="2.2"/><circle cx="1135.7" cy="1277.6" r="2.2"/><circle cx="1142.5" cy="1277.6" r="2.2"/><circle cx="1149.3" cy="1285.8" r="2.2"/><circle cx="1156.2" cy="1273.0" r="2.2"/><circle cx="1163.0" cy="1263.3" r="2.2"/><circle cx="1169.8" cy="1275.8" r="2.2"/><circle cx="1176.6" cy="1216.2" r="2.2"/><circle cx="1183.4" cy="1253.7" r="2.2"/><circle cx="1190.3" cy="1200.8" r="2.2"/><circle cx="1197.1" cy="1291.2" r="2.2"/><circle cx="1203.9" cy="1281.2" r="2.2"/><circle cx="1210.7" cy="1299.8" r="2.2"/><circle cx="1217.5" cy="1290.1" r="2.2"/><circle cx="1224.4" cy="1261.5" r="2.2"/><circle cx="1231.2" cy="1290.5" r="2.2"/><circle cx="1238.0" cy="1283.7" r="2.2"/><circle cx="1244.8" cy="1272.3" r="2.2"/><circle cx="1251.6" cy="1237.6" r="2.2"/><circle cx="1258.5" cy="1146.5" r="2.2"/><circle cx="1265.3" cy="1290.1" r="2.2"/><circle cx="1272.1" cy="1235.1" r="2.2"/><circle cx="1278.9" cy="1290.1" r="2.2"/><circle cx="1285.7" cy="1247.3" r="2.2"/><circle cx="1292.6" cy="1309.8" r="2.2"/><circle cx="1299.4" cy="1287.6" r="2.2"/><circle cx="1306.2" cy="1300.8" r="2.2"/><circle cx="1313.0" cy="1265.8" r="2.2"/><circle cx="1319.8" cy="1235.1" r="2.2"/><circle cx="1326.7" cy="1312.3" r="2.2"/><circle cx="1333.5" cy="1296.2" r="2.2"/><circle cx="1340.3" cy="1311.5" r="2.2"/><circle cx="1347.1" cy="1296.5" r="2.2"/><circle cx="1353.9" cy="1297.3" r="2.2"/><circle cx="1360.8" cy="1288.3" r="2.2"/><circle cx="1367.6" cy="1286.5" r="2.2"/><circle cx="1374.4" cy="1292.6" r="2.2"/><circle cx="1381.2" cy="1284.8" r="2.2"/><circle cx="1388.0" cy="1177.6" r="2.2"/><circle cx="1394.9" cy="1316.2" r="2.2"/><circle cx="1401.7" cy="1314.4" r="2.2"/><circle cx="1408.5" cy="1313.3" r="2.2"/><circle cx="1415.3" cy="1313.3" r="2.2"/><circle cx="1422.1" cy="1268.7" r="2.2"/><circle cx="1429.0" cy="1303.7" r="2.2"/><circle cx="1435.8" cy="1254.4" r="2.2"/><circle cx="1442.6" cy="1280.5" r="2.2"/><circle cx="1449.4" cy="1171.2" r="2.2"/><circle cx="1456.2" cy="1191.9" r="2.2"/><circle cx="1463.1" cy="1286.5" r="2.2"/><circle cx="1469.9" cy="1272.3" r="2.2"/><circle cx="1476.7" cy="1285.8" r="2.2"/><circle cx="1483.5" cy="1278.7" r="2.2"/><circle cx="1490.3" cy="1278.7" r="2.2"/><circle cx="1497.2" cy="1287.6" r="2.2"/><circle cx="1504.0" cy="1263.3" r="2.2"/><circle cx="1510.8" cy="1290.8" r="2.2"/><circle cx="1517.6" cy="1256.9" r="2.2"/><circle cx="1524.4" cy="1263.3" r="2.2"/><circle cx="1531.3" cy="1185.8" r="2.2"/><circle cx="1538.1" cy="1269.8" r="2.2"/><circle cx="1544.9" cy="1275.8" r="2.2"/><circle cx="1551.7" cy="1243.0" r="2.2"/><circle cx="1558.5" cy="1280.1" r="2.2"/><circle cx="1565.4" cy="1272.3" r="2.2"/><circle cx="1572.2" cy="1278.7" r="2.2"/><circle cx="1579.0" cy="1291.9" r="2.2"/><circle cx="1585.8" cy="1273.0" r="2.2"/><circle cx="1592.6" cy="1268.7" r="2.2"/><circle cx="1599.5" cy="1187.2" r="2.2"/><circle cx="1606.3" cy="1287.6" r="2.2"/><circle cx="1613.1" cy="1273.0" r="2.2"/><circle cx="1619.9" cy="1271.2" r="2.2"/><circle cx="1626.7" cy="1263.3" r="2.2"/><circle cx="1633.6" cy="1273.0" r="2.2"/><circle cx="1640.4" cy="1285.8" r="2.2"/><circle cx="1647.2" cy="1306.2" r="2.2"/><circle cx="1654.0" cy="1291.2" r="2.2"/><circle cx="1660.8" cy="1299.0" r="2.2"/><circle cx="1667.7" cy="1212.2" r="2.2"/><circle cx="1674.5" cy="1308.0" r="2.2"/><circle cx="1681.3" cy="1291.2" r="2.2"/><circle cx="1688.1" cy="1284.8" r="2.2"/><circle cx="1694.9" cy="1277.6" r="2.2"/><circle cx="1701.8" cy="1239.4" r="2.2"/><circle cx="1708.6" cy="1356.9" r="2.2"/><circle cx="1715.4" cy="1236.5" r="2.2"/><circle cx="1722.2" cy="1287.6" r="2.2"/><circle cx="1729.0" cy="1183.0" r="2.2"/><circle cx="1735.9" cy="1301.9" r="2.2"/><circle cx="1742.7" cy="1285.8" r="2.2"/><circle cx="1749.5" cy="1276.9" r="2.2"/><circle cx="1756.3" cy="1305.5" r="2.2"/><circle cx="1763.1" cy="1294.8" r="2.2"/><circle cx="1770.0" cy="1296.2" r="2.2"/><circle cx="1776.8" cy="1308.0" r="2.2"/><circle cx="1783.6" cy="1293.0" r="2.2"/><circle cx="1790.4" cy="1305.1" r="2.2"/><circle cx="1797.2" cy="1185.8" r="2.2"/><circle cx="1804.1" cy="1300.8" r="2.2"/><circle cx="1810.9" cy="1290.8" r="2.2"/><circle cx="1817.7" cy="1296.2" r="2.2"/><circle cx="1824.5" cy="1302.6" r="2.2"/><circle cx="1831.3" cy="1316.9" r="2.2"/><circle cx="1838.2" cy="1291.9" r="2.2"/><circle cx="1845.0" cy="1296.5" r="2.2"/><circle cx="1851.8" cy="1289.4" r="2.2"/><circle cx="1858.6" cy="1194.7" r="2.2"/><circle cx="1865.4" cy="1201.9" r="2.2"/><circle cx="1872.3" cy="1309.0" r="2.2"/><circle cx="1879.1" cy="1285.8" r="2.2"/><circle cx="1885.9" cy="1309.0" r="2.2"/><circle cx="1892.7" cy="1308.7" r="2.2"/><circle cx="1899.5" cy="1308.7" r="2.2"/><circle cx="1906.4" cy="1303.7" r="2.2"/><circle cx="1913.2" cy="1298.3" r="2.2"/><circle cx="1920.0" cy="1291.2" r="2.2"/><circle cx="1926.8" cy="1268.7" r="2.2"/><circle cx="1933.6" cy="1256.2" r="2.2"/><circle cx="1940.5" cy="1129.4" r="2.2"/><circle cx="1947.3" cy="1271.2" r="2.2"/><circle cx="1954.1" cy="1283.0" r="2.2"/><circle cx="1960.9" cy="1285.5" r="2.2"/><circle cx="1967.7" cy="1281.9" r="2.2"/><circle cx="1974.6" cy="1294.8" r="2.2"/><circle cx="1981.4" cy="1255.1" r="2.2"/><circle cx="1988.2" cy="1273.0" r="2.2"/><circle cx="1995.0" cy="1278.7" r="2.2"/><circle cx="2001.8" cy="1259.0" r="2.2"/><circle cx="2008.7" cy="1137.6" r="2.2"/><circle cx="2015.5" cy="1242.6" r="2.2"/><circle cx="2022.3" cy="1250.8" r="2.2"/><circle cx="2029.1" cy="1266.9" r="2.2"/><circle cx="2035.9" cy="1298.0" r="2.2"/><circle cx="2042.8" cy="1305.5" r="2.2"/><circle cx="2049.6" cy="1302.6" r="2.2"/><circle cx="2056.4" cy="1256.9" r="2.2"/><circle cx="2063.2" cy="1291.9" r="2.2"/><circle cx="2070.0" cy="1240.1" r="2.2"/><circle cx="2076.9" cy="1067.6" r="2.2"/><circle cx="2083.7" cy="1254.4" r="2.2"/><circle cx="2090.5" cy="1256.2" r="2.2"/><circle cx="2097.3" cy="1296.5" r="2.2"/><circle cx="2104.1" cy="1268.7" r="2.2"/><circle cx="2111.0" cy="1305.5" r="2.2"/><circle cx="2117.8" cy="1292.6" r="2.2"/><circle cx="2124.6" cy="1268.7" r="2.2"/><circle cx="2131.4" cy="1299.0" r="2.2"/><circle cx="2138.2" cy="1178.7" r="2.2"/><circle cx="2145.1" cy="1290.8" r="2.2"/><circle cx="2151.9" cy="1285.8" r="2.2"/><circle cx="2158.7" cy="1269.8" r="2.2"/><circle cx="2165.5" cy="1293.7" r="2.2"/><circle cx="2172.3" cy="1285.8" r="2.2"/><circle cx="2179.2" cy="1269.8" r="2.2"/><circle cx="2186.0" cy="1283.0" r="2.2"/><circle cx="2192.8" cy="1268.7" r="2.2"/><circle cx="2199.6" cy="1250.8" r="2.2"/><circle cx="2206.4" cy="1115.1" r="2.2"/><circle cx="2213.3" cy="1249.8" r="2.2"/><circle cx="2220.1" cy="1309.8" r="2.2"/><circle cx="2226.9" cy="1289.0" r="2.2"/><circle cx="2233.7" cy="1301.9" r="2.2"/><circle cx="2240.5" cy="1305.1" r="2.2"/><circle cx="2247.4" cy="1305.1" r="2.2"/><circle cx="2254.2" cy="1261.5" r="2.2"/><circle cx="2261.0" cy="1297.3" r="2.2"/><circle cx="2267.8" cy="1297.3" r="2.2"/><circle cx="2274.6" cy="1190.1" r="2.2"/><circle cx="2281.5" cy="1193.0" r="2.2"/><circle cx="2288.3" cy="1272.3" r="2.2"/><circle cx="2295.1" cy="1244.8" r="2.2"/><circle cx="2301.9" cy="1303.7" r="2.2"/><circle cx="2308.7" cy="1298.0" r="2.2"/><circle cx="2315.6" cy="1298.3" r="2.2"/><circle cx="2322.4" cy="1300.1" r="2.2"/><circle cx="2329.2" cy="1187.0" r="2.2"/><circle cx="2336.0" cy="1301.2" r="2.2"/><circle cx="2342.8" cy="1236.2" r="2.2"/><circle cx="2349.7" cy="1115.2" r="2.2"/><circle cx="2356.5" cy="1305.2" r="2.2"/><circle cx="2363.3" cy="1286.6" r="2.2"/><circle cx="2370.1" cy="1308.8" r="2.2"/><circle cx="2376.9" cy="1298.7" r="2.2"/><circle cx="2383.8" cy="1247.5" r="2.2"/><circle cx="2390.6" cy="1285.8" r="2.2"/><circle cx="2397.4" cy="1208.4" r="2.2"/><circle cx="2404.2" cy="1289.9" r="2.2"/><circle cx="2411.0" cy="1228.1" r="2.2"/><circle cx="2417.9" cy="1130.5" r="2.2"/><circle cx="2424.7" cy="1281.8" r="2.2"/><circle cx="2431.5" cy="1283.8" r="2.2"/><circle cx="2438.3" cy="1302.0" r="2.2"/><circle cx="2445.1" cy="1288.6" r="2.2"/><circle cx="2452.0" cy="1294.7" r="2.2"/><circle cx="2458.8" cy="1274.9" r="2.2"/><circle cx="2465.6" cy="1274.9" r="2.2"/><circle cx="2472.4" cy="1440.1" r="2.2"/><circle cx="2479.2" cy="1203.1" r="2.2"/><circle cx="2486.1" cy="1281.8" r="2.2"/><circle cx="2492.9" cy="1261.6" r="2.2"/><circle cx="2499.7" cy="1283.8" r="2.2"/><circle cx="2506.5" cy="1295.9" r="2.2"/><circle cx="2513.3" cy="1308.8" r="2.2"/><circle cx="2520.2" cy="1312.9" r="2.2"/><circle cx="2527.0" cy="1294.7" r="2.2"/><circle cx="2533.8" cy="1297.9" r="2.2"/><circle cx="2540.6" cy="1289.1" r="2.2"/><circle cx="2547.4" cy="856.4" r="2.2"/><circle cx="2554.3" cy="1297.9" r="2.2"/><circle cx="2561.1" cy="1262.8" r="2.2"/><circle cx="2567.9" cy="1279.0" r="2.2"/><circle cx="2574.7" cy="1248.3" r="2.2"/><circle cx="2581.5" cy="1261.6" r="2.2"/><circle cx="2588.4" cy="1250.7" r="2.2"/><circle cx="2595.2" cy="1260.8" r="2.2"/><circle cx="2602.0" cy="1261.6" r="2.2"/><circle cx="2608.8" cy="1273.7" r="2.2"/><circle cx="2615.6" cy="1175.7" r="2.2"/><circle cx="2622.5" cy="1282.6" r="2.2"/><circle cx="2629.3" cy="1276.9" r="2.2"/><circle cx="2636.1" cy="1274.9" r="2.2"/><circle cx="2642.9" cy="1287.8" r="2.2"/><circle cx="2649.7" cy="1254.8" r="2.2"/><circle cx="2656.6" cy="1254.8" r="2.2"/><circle cx="2663.4" cy="1443.0" r="2.2"/><circle cx="2670.2" cy="1234.6" r="2.2"/><circle cx="2677.0" cy="1277.8" r="2.2"/><circle cx="2683.8" cy="1029.6" r="2.2"/><circle cx="2690.7" cy="1254.8" r="2.2"/><circle cx="2697.5" cy="1257.6" r="2.2"/><circle cx="2704.3" cy="1272.9" r="2.2"/><circle cx="2711.1" cy="1293.9" r="2.2"/><circle cx="2717.9" cy="1297.9" r="2.2"/><circle cx="2724.8" cy="1270.9" r="2.2"/><circle cx="2731.6" cy="1305.2" r="2.2"/><circle cx="2738.4" cy="1249.5" r="2.2"/></g><g fill="#fff" stroke="rgba(103,234,71,0.16)" stroke-width="1.6"><circle cx="692.4" cy="1136.5" r="2.2"/><circle cx="699.2" cy="1149.7" r="2.2"/><circle cx="706.0" cy="1089.0" r="2.2"/><circle cx="712.9" cy="1168.0" r="2.2"/><circle cx="719.7" cy="1191.2" r="2.2"/><circle cx="726.5" cy="1191.2" r="2.2"/><circle cx="733.3" cy="1164.0" r="2.2"/><circle cx="740.1" cy="1140.1" r="2.2"/><circle cx="747.0" cy="1176.5" r="2.2"/><circle cx="753.8" cy="1162.2" r="2.2"/><circle cx="760.6" cy="1142.6" r="2.2"/><circle cx="767.4" cy="1137.6" r="2.2"/><circle cx="774.2" cy="1146.5" r="2.2"/><circle cx="781.1" cy="1108.7" r="2.2"/><circle cx="787.9" cy="1193.0" r="2.2"/><circle cx="794.7" cy="1200.8" r="2.2"/><circle cx="801.5" cy="1211.5" r="2.2"/><circle cx="808.3" cy="1239.4" r="2.2"/><circle cx="815.2" cy="1201.5" r="2.2"/><circle cx="822.0" cy="1174.4" r="2.2"/><circle cx="828.8" cy="1178.0" r="2.2"/><circle cx="835.6" cy="1174.0" r="2.2"/><circle cx="842.4" cy="1160.8" r="2.2"/><circle cx="849.3" cy="1054.4" r="2.2"/><circle cx="856.1" cy="1105.8" r="2.2"/><circle cx="862.9" cy="1137.9" r="2.2"/><circle cx="869.7" cy="1169.7" r="2.2"/><circle cx="876.5" cy="1194.4" r="2.2"/><circle cx="883.4" cy="1158.0" r="2.2"/><circle cx="890.2" cy="1191.2" r="2.2"/><circle cx="897.0" cy="1137.6" r="2.2"/><circle cx="903.8" cy="1194.7" r="2.2"/><circle cx="910.6" cy="1208.0" r="2.2"/><circle cx="917.5" cy="1121.5" r="2.2"/><circle cx="924.3" cy="1054.4" r="2.2"/><circle cx="931.1" cy="1147.9" r="2.2"/><circle cx="937.9" cy="1114.4" r="2.2"/><circle cx="944.7" cy="1137.2" r="2.2"/><circle cx="951.6" cy="1156.5" r="2.2"/><circle cx="958.4" cy="1158.7" r="2.2"/><circle cx="965.2" cy="1144.7" r="2.2"/><circle cx="972.0" cy="1165.1" r="2.2"/><circle cx="978.8" cy="1050.8" r="2.2"/><circle cx="985.7" cy="1162.2" r="2.2"/><circle cx="992.5" cy="1174.7" r="2.2"/><circle cx="999.3" cy="1180.1" r="2.2"/><circle cx="1006.1" cy="1154.4" r="2.2"/><circle cx="1012.9" cy="910.9" r="2.2"/><circle cx="1019.8" cy="1225.8" r="2.2"/><circle cx="1026.6" cy="1166.9" r="2.2"/><circle cx="1033.4" cy="1175.1" r="2.2"/><circle cx="1040.2" cy="1056.1" r="2.2"/><circle cx="1047.0" cy="1085.8" r="2.2"/><circle cx="1053.9" cy="1158.3" r="2.2"/><circle cx="1060.7" cy="1125.1" r="2.2"/><circle cx="1067.5" cy="1170.5" r="2.2"/><circle cx="1074.3" cy="1118.7" r="2.2"/><circle cx="1081.1" cy="1107.9" r="2.2"/><circle cx="1088.0" cy="1160.1" r="2.2"/><circle cx="1094.8" cy="1175.1" r="2.2"/><circle cx="1101.6" cy="1162.6" r="2.2"/><circle cx="1108.4" cy="1173.3" r="2.2"/><circle cx="1115.2" cy="1150.1" r="2.2"/><circle cx="1122.1" cy="1019.7" r="2.2"/><circle cx="1128.9" cy="1178.7" r="2.2"/><circle cx="1135.7" cy="1160.5" r="2.2"/><circle cx="1142.5" cy="1155.8" r="2.2"/><circle cx="1149.3" cy="1185.5" r="2.2"/><circle cx="1156.2" cy="1150.5" r="2.2"/><circle cx="1163.0" cy="1131.2" r="2.2"/><circle cx="1169.8" cy="1142.9" r="2.2"/><circle cx="1176.6" cy="1116.2" r="2.2"/><circle cx="1183.4" cy="1149.0" r="2.2"/><circle cx="1190.3" cy="1106.2" r="2.2"/><circle cx="1197.1" cy="1167.2" r="2.2"/><circle cx="1203.9" cy="1191.9" r="2.2"/><circle cx="1210.7" cy="1197.6" r="2.2"/><circle cx="1217.5" cy="1202.6" r="2.2"/><circle cx="1224.4" cy="1147.9" r="2.2"/><circle cx="1231.2" cy="1178.7" r="2.2"/><circle cx="1238.0" cy="1163.7" r="2.2"/><circle cx="1244.8" cy="1181.9" r="2.2"/><circle cx="1251.6" cy="1131.2" r="2.2"/><circle cx="1258.5" cy="1042.6" r="2.2"/><circle cx="1265.3" cy="1153.7" r="2.2"/><circle cx="1272.1" cy="1137.2" r="2.2"/><circle cx="1278.9" cy="1180.5" r="2.2"/><circle cx="1285.7" cy="1163.7" r="2.2"/><circle cx="1292.6" cy="1193.7" r="2.2"/><circle cx="1299.4" cy="1181.9" r="2.2"/><circle cx="1306.2" cy="1194.7" r="2.2"/><circle cx="1313.0" cy="1177.6" r="2.2"/><circle cx="1319.8" cy="1138.3" r="2.2"/><circle cx="1326.7" cy="1198.3" r="2.2"/><circle cx="1333.5" cy="1189.4" r="2.2"/><circle cx="1340.3" cy="1191.9" r="2.2"/><circle cx="1347.1" cy="1175.8" r="2.2"/><circle cx="1353.9" cy="1202.6" r="2.2"/><circle cx="1360.8" cy="1189.0" r="2.2"/><circle cx="1367.6" cy="1194.4" r="2.2"/><circle cx="1374.4" cy="1184.0" r="2.2"/><circle cx="1381.2" cy="1203.3" r="2.2"/><circle cx="1388.0" cy="1090.1" r="2.2"/><circle cx="1394.9" cy="1227.6" r="2.2"/><circle cx="1401.7" cy="1211.5" r="2.2"/><circle cx="1408.5" cy="1223.0" r="2.2"/><circle cx="1415.3" cy="1214.0" r="2.2"/><circle cx="1422.1" cy="1165.1" r="2.2"/><circle cx="1429.0" cy="1194.7" r="2.2"/><circle cx="1435.8" cy="1134.7" r="2.2"/><circle cx="1442.6" cy="1176.5" r="2.2"/><circle cx="1449.4" cy="1099.7" r="2.2"/><circle cx="1456.2" cy="1115.8" r="2.2"/><circle cx="1463.1" cy="1181.2" r="2.2"/><circle cx="1469.9" cy="1153.7" r="2.2"/><circle cx="1476.7" cy="1195.5" r="2.2"/><circle cx="1483.5" cy="1164.4" r="2.2"/><circle cx="1490.3" cy="1164.0" r="2.2"/><circle cx="1497.2" cy="1158.0" r="2.2"/><circle cx="1504.0" cy="1165.8" r="2.2"/><circle cx="1510.8" cy="1166.9" r="2.2"/><circle cx="1517.6" cy="1153.3" r="2.2"/><circle cx="1524.4" cy="1161.5" r="2.2"/><circle cx="1531.3" cy="1080.1" r="2.2"/><circle cx="1538.1" cy="1141.9" r="2.2"/><circle cx="1544.9" cy="1179.4" r="2.2"/><circle cx="1551.7" cy="1125.8" r="2.2"/><circle cx="1558.5" cy="1165.1" r="2.2"/><circle cx="1565.4" cy="1144.4" r="2.2"/><circle cx="1572.2" cy="1155.8" r="2.2"/><circle cx="1579.0" cy="1168.7" r="2.2"/><circle cx="1585.8" cy="1189.4" r="2.2"/><circle cx="1592.6" cy="1163.3" r="2.2"/><circle cx="1599.5" cy="1056.1" r="2.2"/><circle cx="1606.3" cy="1163.3" r="2.2"/><circle cx="1613.1" cy="1177.6" r="2.2"/><circle cx="1619.9" cy="1172.2" r="2.2"/><circle cx="1626.7" cy="1154.4" r="2.2"/><circle cx="1633.6" cy="1149.0" r="2.2"/><circle cx="1640.4" cy="1175.8" r="2.2"/><circle cx="1647.2" cy="1181.2" r="2.2"/><circle cx="1654.0" cy="1214.0" r="2.2"/><circle cx="1660.8" cy="1233.0" r="2.2"/><circle cx="1667.7" cy="1136.5" r="2.2"/><circle cx="1674.5" cy="1212.2" r="2.2"/><circle cx="1681.3" cy="1226.2" r="2.2"/><circle cx="1688.1" cy="1206.2" r="2.2"/><circle cx="1694.9" cy="1184.7" r="2.2"/><circle cx="1701.8" cy="1173.0" r="2.2"/><circle cx="1708.6" cy="1271.2" r="2.2"/><circle cx="1715.4" cy="1112.6" r="2.2"/><circle cx="1722.2" cy="1195.5" r="2.2"/><circle cx="1729.0" cy="1069.7" r="2.2"/><circle cx="1735.9" cy="1208.7" r="2.2"/><circle cx="1742.7" cy="1163.3" r="2.2"/><circle cx="1749.5" cy="1151.9" r="2.2"/><circle cx="1756.3" cy="1199.0" r="2.2"/><circle cx="1763.1" cy="1189.0" r="2.2"/><circle cx="1770.0" cy="1200.8" r="2.2"/><circle cx="1776.8" cy="1198.3" r="2.2"/><circle cx="1783.6" cy="1176.5" r="2.2"/><circle cx="1790.4" cy="1200.1" r="2.2"/><circle cx="1797.2" cy="1084.7" r="2.2"/><circle cx="1804.1" cy="1200.1" r="2.2"/><circle cx="1810.9" cy="1167.6" r="2.2"/><circle cx="1817.7" cy="1189.0" r="2.2"/><circle cx="1824.5" cy="1197.2" r="2.2"/><circle cx="1831.3" cy="1200.8" r="2.2"/><circle cx="1838.2" cy="1187.2" r="2.2"/><circle cx="1845.0" cy="1171.5" r="2.2"/><circle cx="1851.8" cy="1175.1" r="2.2"/><circle cx="1858.6" cy="1102.6" r="2.2"/><circle cx="1865.4" cy="1089.4" r="2.2"/><circle cx="1872.3" cy="1203.7" r="2.2"/><circle cx="1879.1" cy="1165.8" r="2.2"/><circle cx="1885.9" cy="1211.5" r="2.2"/><circle cx="1892.7" cy="1214.4" r="2.2"/><circle cx="1899.5" cy="1214.4" r="2.2"/><circle cx="1906.4" cy="1190.8" r="2.2"/><circle cx="1913.2" cy="1183.7" r="2.2"/><circle cx="1920.0" cy="1180.5" r="2.2"/><circle cx="1926.8" cy="1162.6" r="2.2"/><circle cx="1933.6" cy="1148.3" r="2.2"/><circle cx="1940.5" cy="1018.6" r="2.2"/><circle cx="1947.3" cy="1146.5" r="2.2"/><circle cx="1954.1" cy="1181.2" r="2.2"/><circle cx="1960.9" cy="1175.8" r="2.2"/><circle cx="1967.7" cy="1179.4" r="2.2"/><circle cx="1974.6" cy="1177.6" r="2.2"/><circle cx="1981.4" cy="1142.9" r="2.2"/><circle cx="1988.2" cy="1153.3" r="2.2"/><circle cx="1995.0" cy="1174.0" r="2.2"/><circle cx="2001.8" cy="1147.9" r="2.2"/><circle cx="2008.7" cy="970.4" r="2.2"/><circle cx="2015.5" cy="1107.2" r="2.2"/><circle cx="2022.3" cy="1142.9" r="2.2"/><circle cx="2029.1" cy="1159.0" r="2.2"/><circle cx="2035.9" cy="1191.9" r="2.2"/><circle cx="2042.8" cy="1216.9" r="2.2"/><circle cx="2049.6" cy="1195.5" r="2.2"/><circle cx="2056.4" cy="1124.7" r="2.2"/><circle cx="2063.2" cy="1173.0" r="2.2"/><circle cx="2070.0" cy="1094.4" r="2.2"/><circle cx="2076.9" cy="968.6" r="2.2"/><circle cx="2083.7" cy="1130.1" r="2.2"/><circle cx="2090.5" cy="1193.7" r="2.2"/><circle cx="2097.3" cy="1183.0" r="2.2"/><circle cx="2104.1" cy="1159.7" r="2.2"/><circle cx="2111.0" cy="1200.8" r="2.2"/><circle cx="2117.8" cy="1157.2" r="2.2"/><circle cx="2124.6" cy="1150.8" r="2.2"/><circle cx="2131.4" cy="1199.0" r="2.2"/><circle cx="2138.2" cy="1077.6" r="2.2"/><circle cx="2145.1" cy="1173.3" r="2.2"/><circle cx="2151.9" cy="1193.7" r="2.2"/><circle cx="2158.7" cy="1164.4" r="2.2"/><circle cx="2165.5" cy="1213.7" r="2.2"/><circle cx="2172.3" cy="1181.2" r="2.2"/><circle cx="2179.2" cy="1165.8" r="2.2"/><circle cx="2186.0" cy="1157.2" r="2.2"/><circle cx="2192.8" cy="1156.9" r="2.2"/><circle cx="2199.6" cy="1148.3" r="2.2"/><circle cx="2206.4" cy="990.1" r="2.2"/><circle cx="2213.3" cy="1158.7" r="2.2"/><circle cx="2220.1" cy="1178.7" r="2.2"/><circle cx="2226.9" cy="1196.5" r="2.2"/><circle cx="2233.7" cy="1193.0" r="2.2"/><circle cx="2240.5" cy="1206.2" r="2.2"/><circle cx="2247.4" cy="1187.6" r="2.2"/><circle cx="2254.2" cy="1132.2" r="2.2"/><circle cx="2261.0" cy="1168.0" r="2.2"/><circle cx="2267.8" cy="1199.0" r="2.2"/><circle cx="2274.6" cy="1090.8" r="2.2"/><circle cx="2281.5" cy="1082.9" r="2.2"/><circle cx="2288.3" cy="1158.0" r="2.2"/><circle cx="2295.1" cy="1142.9" r="2.2"/><circle cx="2301.9" cy="1211.5" r="2.2"/><circle cx="2308.7" cy="1185.8" r="2.2"/><circle cx="2315.6" cy="1162.2" r="2.2"/><circle cx="2322.4" cy="1193.0" r="2.2"/><circle cx="2329.2" cy="1069.2" r="2.2"/><circle cx="2336.0" cy="1199.1" r="2.2"/><circle cx="2342.8" cy="1129.7" r="2.2"/><circle cx="2349.7" cy="1002.6" r="2.2"/><circle cx="2356.5" cy="1180.9" r="2.2"/><circle cx="2363.3" cy="1166.8" r="2.2"/><circle cx="2370.1" cy="1181.7" r="2.2"/><circle cx="2376.9" cy="1198.3" r="2.2"/><circle cx="2383.8" cy="1128.5" r="2.2"/><circle cx="2390.6" cy="1150.7" r="2.2"/><circle cx="2397.4" cy="1097.4" r="2.2"/><circle cx="2404.2" cy="1179.7" r="2.2"/><circle cx="2411.0" cy="1116.8" r="2.2"/><circle cx="2417.9" cy="1008.7" r="2.2"/><circle cx="2424.7" cy="1168.8" r="2.2"/><circle cx="2431.5" cy="1183.0" r="2.2"/><circle cx="2438.3" cy="1193.8" r="2.2"/><circle cx="2445.1" cy="1193.0" r="2.2"/><circle cx="2452.0" cy="1195.1" r="2.2"/><circle cx="2458.8" cy="1168.0" r="2.2"/><circle cx="2465.6" cy="1168.0" r="2.2"/><circle cx="2472.4" cy="1427.1" r="2.2"/><circle cx="2479.2" cy="1113.6" r="2.2"/><circle cx="2486.1" cy="1174.9" r="2.2"/><circle cx="2492.9" cy="1145.4" r="2.2"/><circle cx="2499.7" cy="1176.9" r="2.2"/><circle cx="2506.5" cy="1183.0" r="2.2"/><circle cx="2513.3" cy="1201.1" r="2.2"/><circle cx="2520.2" cy="1208.4" r="2.2"/><circle cx="2527.0" cy="1170.0" r="2.2"/><circle cx="2533.8" cy="1183.8" r="2.2"/><circle cx="2540.6" cy="1194.2" r="2.2"/><circle cx="2547.4" cy="758.4" r="2.2"/><circle cx="2554.3" cy="1195.9" r="2.2"/><circle cx="2561.1" cy="1119.6" r="2.2"/><circle cx="2567.9" cy="1174.1" r="2.2"/><circle cx="2574.7" cy="1127.3" r="2.2"/><circle cx="2581.5" cy="1141.8" r="2.2"/><circle cx="2588.4" cy="1143.8" r="2.2"/><circle cx="2595.2" cy="1143.4" r="2.2"/><circle cx="2602.0" cy="1133.7" r="2.2"/><circle cx="2608.8" cy="1174.1" r="2.2"/><circle cx="2615.6" cy="1051.0" r="2.2"/><circle cx="2622.5" cy="1182.1" r="2.2"/><circle cx="2629.3" cy="1151.5" r="2.2"/><circle cx="2636.1" cy="1182.1" r="2.2"/><circle cx="2642.9" cy="1185.0" r="2.2"/><circle cx="2649.7" cy="1151.5" r="2.2"/><circle cx="2656.6" cy="1151.5" r="2.2"/><circle cx="2663.4" cy="1334.1" r="2.2"/><circle cx="2670.2" cy="1127.3" r="2.2"/><circle cx="2677.0" cy="1173.3" r="2.2"/><circle cx="2683.8" cy="916.7" r="2.2"/><circle cx="2690.7" cy="1131.3" r="2.2"/><circle cx="2697.5" cy="1125.3" r="2.2"/><circle cx="2704.3" cy="1178.9" r="2.2"/><circle cx="2711.1" cy="1195.9" r="2.2"/><circle cx="2717.9" cy="1189.0" r="2.2"/><circle cx="2724.8" cy="1137.8" r="2.2"/><circle cx="2731.6" cy="1197.1" r="2.2"/><circle cx="2738.4" cy="1126.5" r="2.2"/></g><g fill="#fff" stroke="rgba(103,234,71,0.16)" stroke-width="1.6"><circle cx="692.4" cy="1024.7" r="2.2"/><circle cx="699.2" cy="1011.6" r="2.2"/><circle cx="706.0" cy="960.7" r="2.2"/><circle cx="712.9" cy="1073.5" r="2.2"/><circle cx="719.7" cy="1096.6" r="2.2"/><circle cx="726.5" cy="1057.7" r="2.2"/><circle cx="733.3" cy="1060.5" r="2.2"/><circle cx="740.1" cy="1029.5" r="2.2"/><circle cx="747.0" cy="1070.1" r="2.2"/><circle cx="753.8" cy="1044.0" r="2.2"/><circle cx="760.6" cy="1005.8" r="2.2"/><circle cx="767.4" cy="1039.5" r="2.2"/><circle cx="774.2" cy="1016.8" r="2.2"/><circle cx="781.1" cy="990.6" r="2.2"/><circle cx="787.9" cy="1060.1" r="2.2"/><circle cx="794.7" cy="1061.2" r="2.2"/><circle cx="801.5" cy="1105.2" r="2.2"/><circle cx="808.3" cy="1137.5" r="2.2"/><circle cx="815.2" cy="1091.4" r="2.2"/><circle cx="822.0" cy="1044.3" r="2.2"/><circle cx="828.8" cy="1058.4" r="2.2"/><circle cx="835.6" cy="1077.0" r="2.2"/><circle cx="842.4" cy="1010.6" r="2.2"/><circle cx="849.3" cy="937.7" r="2.2"/><circle cx="856.1" cy="992.7" r="2.2"/><circle cx="862.9" cy="1014.4" r="2.2"/><circle cx="869.7" cy="1059.4" r="2.2"/><circle cx="876.5" cy="1074.2" r="2.2"/><circle cx="883.4" cy="1047.0" r="2.2"/><circle cx="890.2" cy="1072.8" r="2.2"/><circle cx="897.0" cy="1016.8" r="2.2"/><circle cx="903.8" cy="1077.0" r="2.2"/><circle cx="910.6" cy="1109.0" r="2.2"/><circle cx="917.5" cy="1030.5" r="2.2"/><circle cx="924.3" cy="945.2" r="2.2"/><circle cx="931.1" cy="1039.1" r="2.2"/><circle cx="937.9" cy="1005.4" r="2.2"/><circle cx="944.7" cy="1022.6" r="2.2"/><circle cx="951.6" cy="1055.0" r="2.2"/><circle cx="958.4" cy="1040.9" r="2.2"/><circle cx="965.2" cy="1016.8" r="2.2"/><circle cx="972.0" cy="1035.0" r="2.2"/><circle cx="978.8" cy="938.3" r="2.2"/><circle cx="985.7" cy="1041.9" r="2.2"/><circle cx="992.5" cy="1070.1" r="2.2"/><circle cx="999.3" cy="1099.3" r="2.2"/><circle cx="1006.1" cy="1061.5" r="2.2"/><circle cx="1012.9" cy="833.4" r="2.2"/><circle cx="1019.8" cy="1120.0" r="2.2"/><circle cx="1026.6" cy="1038.1" r="2.2"/><circle cx="1033.4" cy="1074.2" r="2.2"/><circle cx="1040.2" cy="914.3" r="2.2"/><circle cx="1047.0" cy="965.2" r="2.2"/><circle cx="1053.9" cy="1045.0" r="2.2"/><circle cx="1060.7" cy="971.0" r="2.2"/><circle cx="1067.5" cy="1042.6" r="2.2"/><circle cx="1074.3" cy="999.6" r="2.2"/><circle cx="1081.1" cy="983.8" r="2.2"/><circle cx="1088.0" cy="1036.4" r="2.2"/><circle cx="1094.8" cy="1057.4" r="2.2"/><circle cx="1101.6" cy="1044.3" r="2.2"/><circle cx="1108.4" cy="1064.9" r="2.2"/><circle cx="1115.2" cy="1017.5" r="2.2"/><circle cx="1122.1" cy="888.5" r="2.2"/><circle cx="1128.9" cy="1052.2" r="2.2"/><circle cx="1135.7" cy="1024.7" r="2.2"/><circle cx="1142.5" cy="1039.1" r="2.2"/><circle cx="1149.3" cy="1075.9" r="2.2"/><circle cx="1156.2" cy="1026.1" r="2.2"/><circle cx="1163.0" cy="998.5" r="2.2"/><circle cx="1169.8" cy="1017.5" r="2.2"/><circle cx="1176.6" cy="994.4" r="2.2"/><circle cx="1183.4" cy="1003.7" r="2.2"/><circle cx="1190.3" cy="988.2" r="2.2"/><circle cx="1197.1" cy="1068.4" r="2.2"/><circle cx="1203.9" cy="1094.2" r="2.2"/><circle cx="1210.7" cy="1115.8" r="2.2"/><circle cx="1217.5" cy="1104.5" r="2.2"/><circle cx="1224.4" cy="1055.6" r="2.2"/><circle cx="1231.2" cy="1060.5" r="2.2"/><circle cx="1238.0" cy="1040.2" r="2.2"/><circle cx="1244.8" cy="1057.4" r="2.2"/><circle cx="1251.6" cy="1022.6" r="2.2"/><circle cx="1258.5" cy="943.8" r="2.2"/><circle cx="1265.3" cy="1027.1" r="2.2"/><circle cx="1272.1" cy="963.5" r="2.2"/><circle cx="1278.9" cy="1075.9" r="2.2"/><circle cx="1285.7" cy="1063.9" r="2.2"/><circle cx="1292.6" cy="1091.8" r="2.2"/><circle cx="1299.4" cy="1094.9" r="2.2"/><circle cx="1306.2" cy="1106.2" r="2.2"/><circle cx="1313.0" cy="1059.1" r="2.2"/><circle cx="1319.8" cy="1052.9" r="2.2"/><circle cx="1326.7" cy="1106.2" r="2.2"/><circle cx="1333.5" cy="1074.6" r="2.2"/><circle cx="1340.3" cy="1076.3" r="2.2"/><circle cx="1347.1" cy="1080.4" r="2.2"/><circle cx="1353.9" cy="1082.8" r="2.2"/><circle cx="1360.8" cy="1086.3" r="2.2"/><circle cx="1367.6" cy="1105.5" r="2.2"/><circle cx="1374.4" cy="1059.8" r="2.2"/><circle cx="1381.2" cy="1090.7" r="2.2"/><circle cx="1388.0" cy="1012.3" r="2.2"/><circle cx="1394.9" cy="1131.0" r="2.2"/><circle cx="1401.7" cy="1085.6" r="2.2"/><circle cx="1408.5" cy="1138.9" r="2.2"/><circle cx="1415.3" cy="1127.9" r="2.2"/><circle cx="1422.1" cy="1052.2" r="2.2"/><circle cx="1429.0" cy="1091.8" r="2.2"/><circle cx="1435.8" cy="1009.2" r="2.2"/><circle cx="1442.6" cy="1094.9" r="2.2"/><circle cx="1449.4" cy="975.5" r="2.2"/><circle cx="1456.2" cy="1023.0" r="2.2"/><circle cx="1463.1" cy="1086.6" r="2.2"/><circle cx="1469.9" cy="1008.2" r="2.2"/><circle cx="1476.7" cy="1061.2" r="2.2"/><circle cx="1483.5" cy="1057.0" r="2.2"/><circle cx="1490.3" cy="1057.0" r="2.2"/><circle cx="1497.2" cy="1040.9" r="2.2"/><circle cx="1504.0" cy="1066.0" r="2.2"/><circle cx="1510.8" cy="1064.9" r="2.2"/><circle cx="1517.6" cy="1038.4" r="2.2"/><circle cx="1524.4" cy="1036.4" r="2.2"/><circle cx="1531.3" cy="974.5" r="2.2"/><circle cx="1538.1" cy="1032.3" r="2.2"/><circle cx="1544.9" cy="1060.1" r="2.2"/><circle cx="1551.7" cy="1016.8" r="2.2"/><circle cx="1558.5" cy="1058.1" r="2.2"/><circle cx="1565.4" cy="1035.0" r="2.2"/><circle cx="1572.2" cy="1053.9" r="2.2"/><circle cx="1579.0" cy="1055.6" r="2.2"/><circle cx="1585.8" cy="1079.7" r="2.2"/><circle cx="1592.6" cy="1061.5" r="2.2"/><circle cx="1599.5" cy="962.4" r="2.2"/><circle cx="1606.3" cy="1042.6" r="2.2"/><circle cx="1613.1" cy="1063.9" r="2.2"/><circle cx="1619.9" cy="1070.8" r="2.2"/><circle cx="1626.7" cy="1065.6" r="2.2"/><circle cx="1633.6" cy="1034.0" r="2.2"/><circle cx="1640.4" cy="1075.3" r="2.2"/><circle cx="1647.2" cy="1066.0" r="2.2"/><circle cx="1654.0" cy="1103.8" r="2.2"/><circle cx="1660.8" cy="1134.8" r="2.2"/><circle cx="1667.7" cy="1031.2" r="2.2"/><circle cx="1674.5" cy="1075.3" r="2.2"/><circle cx="1681.3" cy="1112.1" r="2.2"/><circle cx="1688.1" cy="1090.7" r="2.2"/><circle cx="1694.9" cy="1063.9" r="2.2"/><circle cx="1701.8" cy="1075.3" r="2.2"/><circle cx="1708.6" cy="1160.8" r="2.2"/><circle cx="1715.4" cy="1029.8" r="2.2"/><circle cx="1722.2" cy="1099.3" r="2.2"/><circle cx="1729.0" cy="989.9" r="2.2"/><circle cx="1735.9" cy="1110.7" r="2.2"/><circle cx="1742.7" cy="1055.3" r="2.2"/><circle cx="1749.5" cy="1016.8" r="2.2"/><circle cx="1756.3" cy="1107.9" r="2.2"/><circle cx="1763.1" cy="1073.5" r="2.2"/><circle cx="1770.0" cy="1113.1" r="2.2"/><circle cx="1776.8" cy="1086.6" r="2.2"/><circle cx="1783.6" cy="1054.6" r="2.2"/><circle cx="1790.4" cy="1082.1" r="2.2"/><circle cx="1797.2" cy="971.0" r="2.2"/><circle cx="1804.1" cy="1101.1" r="2.2"/><circle cx="1810.9" cy="1029.8" r="2.2"/><circle cx="1817.7" cy="1083.2" r="2.2"/><circle cx="1824.5" cy="1102.8" r="2.2"/><circle cx="1831.3" cy="1084.9" r="2.2"/><circle cx="1838.2" cy="1092.5" r="2.2"/><circle cx="1845.0" cy="1052.9" r="2.2"/><circle cx="1851.8" cy="1072.8" r="2.2"/><circle cx="1858.6" cy="993.7" r="2.2"/><circle cx="1865.4" cy="1021.9" r="2.2"/><circle cx="1872.3" cy="1131.0" r="2.2"/><circle cx="1879.1" cy="1069.4" r="2.2"/><circle cx="1885.9" cy="1128.6" r="2.2"/><circle cx="1892.7" cy="1144.1" r="2.2"/><circle cx="1899.5" cy="1144.1" r="2.2"/><circle cx="1906.4" cy="1105.2" r="2.2"/><circle cx="1913.2" cy="1072.5" r="2.2"/><circle cx="1920.0" cy="1070.1" r="2.2"/><circle cx="1926.8" cy="1010.6" r="2.2"/><circle cx="1933.6" cy="1034.7" r="2.2"/><circle cx="1940.5" cy="903.9" r="2.2"/><circle cx="1947.3" cy="1020.9" r="2.2"/><circle cx="1954.1" cy="1056.3" r="2.2"/><circle cx="1960.9" cy="1072.8" r="2.2"/><circle cx="1967.7" cy="1071.1" r="2.2"/><circle cx="1974.6" cy="1066.0" r="2.2"/><circle cx="1981.4" cy="1038.4" r="2.2"/><circle cx="1988.2" cy="1047.7" r="2.2"/><circle cx="1995.0" cy="1038.1" r="2.2"/><circle cx="2001.8" cy="1028.8" r="2.2"/><circle cx="2008.7" cy="863.0" r="2.2"/><circle cx="2015.5" cy="992.7" r="2.2"/><circle cx="2022.3" cy="1011.6" r="2.2"/><circle cx="2029.1" cy="1061.5" r="2.2"/><circle cx="2035.9" cy="1123.4" r="2.2"/><circle cx="2042.8" cy="1138.9" r="2.2"/><circle cx="2049.6" cy="1101.1" r="2.2"/><circle cx="2056.4" cy="1006.5" r="2.2"/><circle cx="2063.2" cy="1064.2" r="2.2"/><circle cx="2070.0" cy="1020.9" r="2.2"/><circle cx="2076.9" cy="876.4" r="2.2"/><circle cx="2083.7" cy="1003.0" r="2.2"/><circle cx="2090.5" cy="1060.5" r="2.2"/><circle cx="2097.3" cy="1127.5" r="2.2"/><circle cx="2104.1" cy="1067.7" r="2.2"/><circle cx="2111.0" cy="1108.6" r="2.2"/><circle cx="2117.8" cy="1032.9" r="2.2"/><circle cx="2124.6" cy="1039.1" r="2.2"/><circle cx="2131.4" cy="1077.0" r="2.2"/><circle cx="2138.2" cy="983.4" r="2.2"/><circle cx="2145.1" cy="1069.1" r="2.2"/><circle cx="2151.9" cy="1036.7" r="2.2"/><circle cx="2158.7" cy="1015.7" r="2.2"/><circle cx="2165.5" cy="1107.9" r="2.2"/><circle cx="2172.3" cy="1081.4" r="2.2"/><circle cx="2179.2" cy="1050.1" r="2.2"/><circle cx="2186.0" cy="1025.4" r="2.2"/><circle cx="2192.8" cy="1059.1" r="2.2"/><circle cx="2199.6" cy="1023.7" r="2.2"/><circle cx="2206.4" cy="869.5" r="2.2"/><circle cx="2213.3" cy="1054.6" r="2.2"/><circle cx="2220.1" cy="952.4" r="2.2"/><circle cx="2226.9" cy="1091.4" r="2.2"/><circle cx="2233.7" cy="1080.4" r="2.2"/><circle cx="2240.5" cy="1087.3" r="2.2"/><circle cx="2247.4" cy="1113.1" r="2.2"/><circle cx="2254.2" cy="1006.5" r="2.2"/><circle cx="2261.0" cy="1041.9" r="2.2"/><circle cx="2267.8" cy="1091.8" r="2.2"/><circle cx="2274.6" cy="961.7" r="2.2"/><circle cx="2281.5" cy="973.1" r="2.2"/><circle cx="2288.3" cy="1039.1" r="2.2"/><circle cx="2295.1" cy="1014.4" r="2.2"/><circle cx="2301.9" cy="1105.5" r="2.2"/><circle cx="2308.7" cy="1071.1" r="2.2"/><circle cx="2315.6" cy="1040.9" r="2.2"/><circle cx="2322.4" cy="1087.3" r="2.2"/><circle cx="2329.2" cy="938.7" r="2.2"/><circle cx="2336.0" cy="1092.5" r="2.2"/><circle cx="2342.8" cy="1023.7" r="2.2"/><circle cx="2349.7" cy="896.4" r="2.2"/><circle cx="2356.5" cy="1077.7" r="2.2"/><circle cx="2363.3" cy="1047.0" r="2.2"/><circle cx="2370.1" cy="1082.8" r="2.2"/><circle cx="2376.9" cy="1090.0" r="2.2"/><circle cx="2383.8" cy="1017.8" r="2.2"/><circle cx="2390.6" cy="1050.5" r="2.2"/><circle cx="2397.4" cy="1010.9" r="2.2"/><circle cx="2404.2" cy="1077.0" r="2.2"/><circle cx="2411.0" cy="1011.6" r="2.2"/><circle cx="2417.9" cy="878.1" r="2.2"/><circle cx="2424.7" cy="1064.9" r="2.2"/><circle cx="2431.5" cy="1041.9" r="2.2"/><circle cx="2438.3" cy="1097.6" r="2.2"/><circle cx="2445.1" cy="1089.7" r="2.2"/><circle cx="2452.0" cy="1081.4" r="2.2"/><circle cx="2458.8" cy="1067.7" r="2.2"/><circle cx="2465.6" cy="1067.7" r="2.2"/><circle cx="2472.4" cy="1414.5" r="2.2"/><circle cx="2479.2" cy="1017.8" r="2.2"/><circle cx="2486.1" cy="1064.9" r="2.2"/><circle cx="2492.9" cy="1021.9" r="2.2"/><circle cx="2499.7" cy="1049.5" r="2.2"/><circle cx="2506.5" cy="1084.5" r="2.2"/><circle cx="2513.3" cy="1092.5" r="2.2"/><circle cx="2520.2" cy="1096.9" r="2.2"/><circle cx="2527.0" cy="1051.9" r="2.2"/><circle cx="2533.8" cy="1098.5" r="2.2"/><circle cx="2540.6" cy="1055.9" r="2.2"/><circle cx="2547.4" cy="657.4" r="2.2"/><circle cx="2554.3" cy="1090.0" r="2.2"/><circle cx="2561.1" cy="977.3" r="2.2"/><circle cx="2567.9" cy="1072.6" r="2.2"/><circle cx="2574.7" cy="1036.6" r="2.2"/><circle cx="2581.5" cy="1003.2" r="2.2"/><circle cx="2588.4" cy="1032.9" r="2.2"/><circle cx="2595.2" cy="1004.7" r="2.2"/><circle cx="2602.0" cy="1010.7" r="2.2"/><circle cx="2608.8" cy="1036.6" r="2.2"/><circle cx="2615.6" cy="945.4" r="2.2"/><circle cx="2622.5" cy="1070.7" r="2.2"/><circle cx="2629.3" cy="1052.2" r="2.2"/><circle cx="2636.1" cy="1036.6" r="2.2"/><circle cx="2642.9" cy="1083.0" r="2.2"/><circle cx="2649.7" cy="1060.3" r="2.2"/><circle cx="2656.6" cy="1060.3" r="2.2"/><circle cx="2663.4" cy="1229.3" r="2.2"/><circle cx="2670.2" cy="988.4" r="2.2"/><circle cx="2677.0" cy="1065.2" r="2.2"/><circle cx="2683.8" cy="787.3" r="2.2"/><circle cx="2690.7" cy="1068.9" r="2.2"/><circle cx="2697.5" cy="1050.3" r="2.2"/><circle cx="2704.3" cy="1058.9" r="2.2"/><circle cx="2711.1" cy="1088.5" r="2.2"/><circle cx="2717.9" cy="1077.4" r="2.2"/><circle cx="2724.8" cy="1029.2" r="2.2"/><circle cx="2731.6" cy="1098.5" r="2.2"/><circle cx="2738.4" cy="992.1" r="2.2"/></g></svg><div class="t" style="left:572px;top:1430.0px;width:100px;height:24px;line-height:24px;font-size:24px;color:#666;text-align:right">0</div><div class="t" style="left:572px;top:1346.2px;width:100px;height:24px;line-height:24px;font-size:24px;color:#666;text-align:right">0.2</div><div class="t" style="left:572px;top:1262.4px;width:100px;height:24px;line-height:24px;font-size:24px;color:#666;text-align:right">0.4</div><div class="t" style="left:572px;top:1178.6px;width:100px;height:24px;line-height:24px;font-size:24px;color:#666;text-align:right">0.6</div><div class="t" style="left:572px;top:1094.8px;width:100px;height:24px;line-height:24px;font-size:24px;color:#666;text-align:right">0.8</div><div class="t" style="left:572px;top:1011.0px;width:100px;height:24px;line-height:24px;font-size:24px;color:#666;text-align:right">1.0</div><div class="t" style="left:572px;top:927.2px;width:100px;height:24px;line-height:24px;font-size:24px;color:#666;text-align:right">1.2</div><div class="t" style="left:572px;top:843.4px;width:100px;height:24px;line-height:24px;font-size:24px;color:#666;text-align:right">1.4</div><div class="t" style="left:572px;top:759.6px;width:100px;height:24px;line-height:24px;font-size:24px;color:#666;text-align:right">1.6</div><div class="t" style="left:572px;top:675.8px;width:100px;height:24px;line-height:24px;font-size:24px;color:#666;text-align:right">1.8</div><div class="t" style="left:572px;top:592.0px;width:100px;height:24px;line-height:24px;font-size:24px;color:#666;text-align:right">2.0</div><div class="t" style="left:492.0px;top:1450.2px;width:200px;height:24px;line-height:24px;font-size:24px;color:#666;text-align:right;transform-origin:100% 50%;transform:rotate(-50deg)">02:58:23</div><div class="t" style="left:554.0px;top:1450.2px;width:200px;height:24px;line-height:24px;font-size:24px;color:#666;text-align:right;transform-origin:100% 50%;transform:rotate(-50deg)">02:58:32</div><div class="t" style="left:616.0px;top:1450.2px;width:200px;height:24px;line-height:24px;font-size:24px;color:#666;text-align:right;transform-origin:100% 50%;transform:rotate(-50deg)">02:58:41</div><div class="t" style="left:676.0px;top:1450.2px;width:200px;height:24px;line-height:24px;font-size:24px;color:#666;text-align:right;transform-origin:100% 50%;transform:rotate(-50deg)">02:58:50</div><div class="t" style="left:738.0px;top:1450.2px;width:200px;height:24px;line-height:24px;font-size:24px;color:#666;text-align:right;transform-origin:100% 50%;transform:rotate(-50deg)">02:58:59</div><div class="t" style="left:800.0px;top:1450.2px;width:200px;height:24px;line-height:24px;font-size:24px;color:#666;text-align:right;transform-origin:100% 50%;transform:rotate(-50deg)">02:59:08</div><div class="t" style="left:860.0px;top:1450.2px;width:200px;height:24px;line-height:24px;font-size:24px;color:#666;text-align:right;transform-origin:100% 50%;transform:rotate(-50deg)">02:59:17</div><div class="t" style="left:922.0px;top:1450.2px;width:200px;height:24px;line-height:24px;font-size:24px;color:#666;text-align:right;transform-origin:100% 50%;transform:rotate(-50deg)">02:59:26</div><div class="t" style="left:984.0px;top:1450.2px;width:200px;height:24px;line-height:24px;font-size:24px;color:#666;text-align:right;transform-origin:100% 50%;transform:rotate(-50deg)">02:59:35</div><div class="t" style="left:1044.0px;top:1450.2px;width:200px;height:24px;line-height:24px;font-size:24px;color:#666;text-align:right;transform-origin:100% 50%;transform:rotate(-50deg)">02:59:44</div><div class="t" style="left:1106.0px;top:1450.2px;width:200px;height:24px;line-height:24px;font-size:24px;color:#666;text-align:right;transform-origin:100% 50%;transform:rotate(-50deg)">02:59:53</div><div class="t" style="left:1168.0px;top:1450.2px;width:200px;height:24px;line-height:24px;font-size:24px;color:#666;text-align:right;transform-origin:100% 50%;transform:rotate(-50deg)">03:00:02</div><div class="t" style="left:1228.0px;top:1450.2px;width:200px;height:24px;line-height:24px;font-size:24px;color:#666;text-align:right;transform-origin:100% 50%;transform:rotate(-50deg)">03:00:11</div><div class="t" style="left:1290.0px;top:1450.2px;width:200px;height:24px;line-height:24px;font-size:24px;color:#666;text-align:right;transform-origin:100% 50%;transform:rotate(-50deg)">03:00:20</div><div class="t" style="left:1352.0px;top:1450.2px;width:200px;height:24px;line-height:24px;font-size:24px;color:#666;text-align:right;transform-origin:100% 50%;transform:rotate(-50deg)">03:00:29</div><div class="t" style="left:1414.0px;top:1450.2px;width:200px;height:24px;line-height:24px;font-size:24px;color:#666;text-align:right;transform-origin:100% 50%;transform:rotate(-50deg)">03:00:38</div><div class="t" style="left:1474.0px;top:1450.2px;width:200px;height:24px;line-height:24px;font-size:24px;color:#666;text-align:right;transform-origin:100% 50%;transform:rotate(-50deg)">03:00:47</div><div class="t" style="left:1536.0px;top:1450.2px;width:200px;height:24px;line-height:24px;font-size:24px;color:#666;text-align:right;transform-origin:100% 50%;transform:rotate(-50deg)">03:00:56</div><div class="t" style="left:1598.0px;top:1450.2px;width:200px;height:24px;line-height:24px;font-size:24px;color:#666;text-align:right;transform-origin:100% 50%;transform:rotate(-50deg)">03:01:05</div><div class="t" style="left:1658.0px;top:1450.2px;width:200px;height:24px;line-height:24px;font-size:24px;color:#666;text-align:right;transform-origin:100% 50%;transform:rotate(-50deg)">03:01:14</div><div class="t" style="left:1720.0px;top:1450.2px;width:200px;height:24px;line-height:24px;font-size:24px;color:#666;text-align:right;transform-origin:100% 50%;transform:rotate(-50deg)">03:01:23</div><div class="t" style="left:1782.0px;top:1450.2px;width:200px;height:24px;line-height:24px;font-size:24px;color:#666;text-align:right;transform-origin:100% 50%;transform:rotate(-50deg)">03:01:32</div><div class="t" style="left:1842.0px;top:1450.2px;width:200px;height:24px;line-height:24px;font-size:24px;color:#666;text-align:right;transform-origin:100% 50%;transform:rotate(-50deg)">03:01:41</div><div class="t" style="left:1904.0px;top:1450.2px;width:200px;height:24px;line-height:24px;font-size:24px;color:#666;text-align:right;transform-origin:100% 50%;transform:rotate(-50deg)">03:01:50</div><div class="t" style="left:1966.0px;top:1450.2px;width:200px;height:24px;line-height:24px;font-size:24px;color:#666;text-align:right;transform-origin:100% 50%;transform:rotate(-50deg)">03:01:59</div><div class="t" style="left:2026.0px;top:1450.2px;width:200px;height:24px;line-height:24px;font-size:24px;color:#666;text-align:right;transform-origin:100% 50%;transform:rotate(-50deg)">03:02:08</div><div class="t" style="left:2088.0px;top:1450.2px;width:200px;height:24px;line-height:24px;font-size:24px;color:#666;text-align:right;transform-origin:100% 50%;transform:rotate(-50deg)">03:02:17</div><div class="t" style="left:2150.0px;top:1450.2px;width:200px;height:24px;line-height:24px;font-size:24px;color:#666;text-align:right;transform-origin:100% 50%;transform:rotate(-50deg)">03:02:26</div><div class="t" style="left:2212.0px;top:1450.2px;width:200px;height:24px;line-height:24px;font-size:24px;color:#666;text-align:right;transform-origin:100% 50%;transform:rotate(-50deg)">03:02:35</div><div class="t" style="left:2272.0px;top:1450.2px;width:200px;height:24px;line-height:24px;font-size:24px;color:#666;text-align:right;transform-origin:100% 50%;transform:rotate(-50deg)">03:02:44</div><div class="t" style="left:2334.0px;top:1450.2px;width:200px;height:24px;line-height:24px;font-size:24px;color:#666;text-align:right;transform-origin:100% 50%;transform:rotate(-50deg)">03:02:53</div><div class="t" style="left:2396.0px;top:1450.2px;width:200px;height:24px;line-height:24px;font-size:24px;color:#666;text-align:right;transform-origin:100% 50%;transform:rotate(-50deg)">03:03:02</div><div class="t" style="left:2456.0px;top:1450.2px;width:200px;height:24px;line-height:24px;font-size:24px;color:#666;text-align:right;transform-origin:100% 50%;transform:rotate(-50deg)">03:03:11</div><div class="t" style="left:2538.0px;top:1450.2px;width:200px;height:24px;line-height:24px;font-size:24px;color:#666;text-align:right;transform-origin:100% 50%;transform:rotate(-50deg)">03:03:23</div></div></div></body></html>
